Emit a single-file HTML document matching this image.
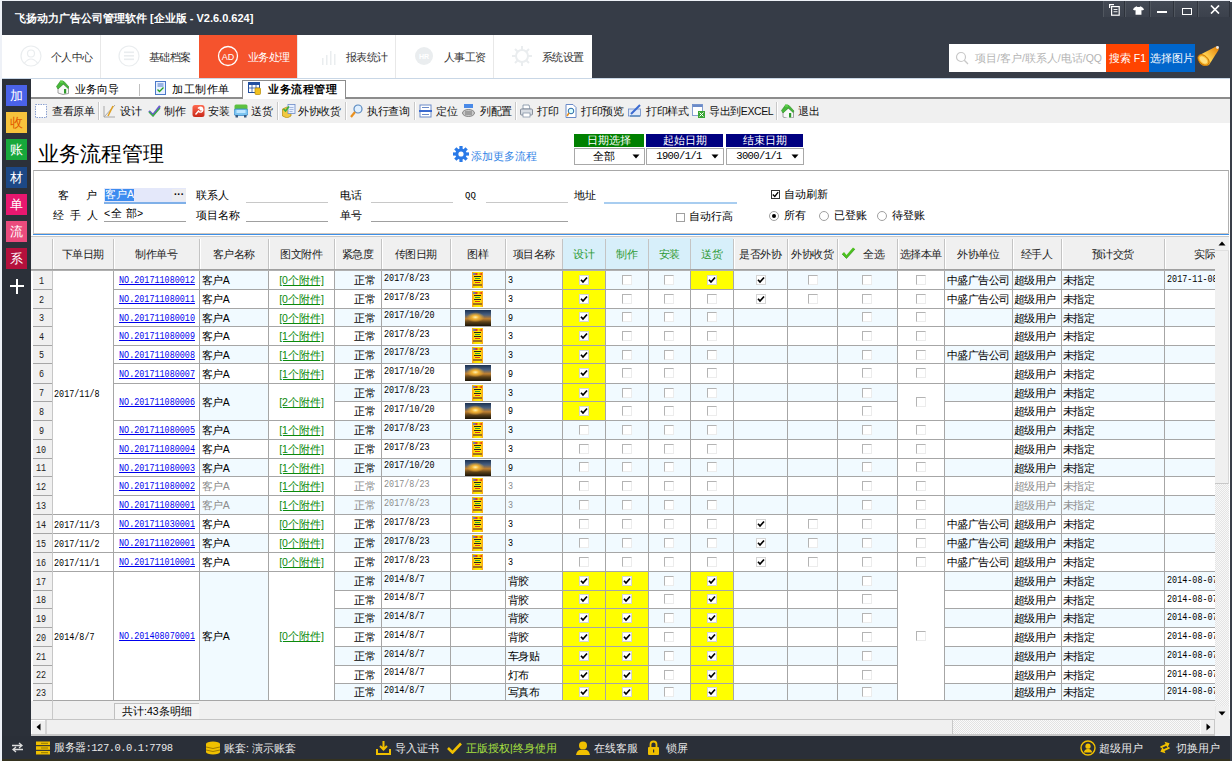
<!DOCTYPE html><html><head><meta charset="utf-8"><style>
html,body{margin:0;padding:0;}
body{width:1232px;height:761px;position:relative;overflow:hidden;background:#eef1f7;font-family:"Liberation Sans", sans-serif;font-size:11px;color:#000;}
body div{position:absolute;box-sizing:border-box;}
.t{white-space:nowrap;}
.cb{width:10px;height:10px;border:1px solid #c4c4c4;border-top-color:#9a9a9a;border-left-color:#9a9a9a;background:#fff;}
.ck{width:10px;height:10px;border:1px solid #d8d8d8;background:#fff;}
svg{position:absolute;}
</style></head><body>
<div style="left:2px;top:1px;width:1228px;height:34px;background:#363c47;"></div>
<div class="t" style="left:15px;top:10px;height:16px;line-height:16px;color:#fff;font-weight:bold;font-size:11px;">飞扬动力广告公司管理软件 [企业版 - V2.6.0.624]</div>
<div style="left:1103px;top:1px;width:22px;height:16px;background:linear-gradient(#444a55,#3b414c);border-left:1px solid #50565f;border-right:1px solid #2e333c;"></div>
<div style="left:1125px;top:1px;width:25px;height:16px;background:linear-gradient(#444a55,#3b414c);border-left:1px solid #50565f;border-right:1px solid #2e333c;"></div>
<div style="left:1150px;top:1px;width:24px;height:16px;background:linear-gradient(#444a55,#3b414c);border-left:1px solid #50565f;border-right:1px solid #2e333c;"></div>
<div style="left:1174px;top:1px;width:24px;height:16px;background:linear-gradient(#444a55,#3b414c);border-left:1px solid #50565f;border-right:1px solid #2e333c;"></div>
<div style="left:1198px;top:1px;width:32px;height:16px;background:linear-gradient(#444a55,#3b414c);border-left:1px solid #50565f;border-right:1px solid #2e333c;"></div>
<svg style="left:1109px;top:4px" width="11" height="12" viewBox="0 0 11 12"><rect x="0" y="0" width="5" height="1.2" fill="#fff"/><rect x="0" y="0" width="1.2" height="4" fill="#fff"/><rect x="2.6" y="2.6" width="7.6" height="8.6" fill="none" stroke="#fff" stroke-width="1.2"/><rect x="4.5" y="5" width="4" height="0.9" fill="#fff"/><rect x="4.5" y="7.3" width="4" height="0.9" fill="#fff"/></svg>
<svg style="left:1133px;top:6px" width="11" height="9" viewBox="0 0 13 10"><path d="M4 0 L1 2 L0 4 L2.5 5 L3 4 V10 H10 V4 L10.5 5 L13 4 L12 2 L9 0 Q6.5 2 4 0Z" fill="#fff"/></svg>
<div style="left:1157px;top:11px;width:10px;height:1.6px;background:#fff;"></div>
<div style="left:1182px;top:8px;width:10px;height:7px;border:1.2px solid #fff;border-top-width:1.8px;"></div>
<svg style="left:1210px;top:5px" width="10" height="9" viewBox="0 0 10 9"><path d="M1 0.5 L9 8.5 M9 0.5 L1 8.5" stroke="#fff" stroke-width="1.7"/></svg>
<div style="left:2px;top:35px;width:1228px;height:43px;background:#363c47;"></div>
<div style="left:2px;top:35px;width:590px;height:43px;background:#fff;"></div>
<div style="left:199px;top:35px;width:98px;height:43px;background:#f5532d;"></div>
<div style="left:100px;top:35px;width:1px;height:43px;background:#e8e8e8;"></div>
<div style="left:297px;top:35px;width:1px;height:43px;background:#e8e8e8;"></div>
<div style="left:395px;top:35px;width:1px;height:43px;background:#e8e8e8;"></div>
<div style="left:493px;top:35px;width:1px;height:43px;background:#e8e8e8;"></div>
<div style="left:2px;top:78px;width:1228px;height:1px;background:#c9d7e6;"></div>
<div class="t" style="left:51px;top:48px;height:18px;line-height:18px;color:#333;font-size:10.5px;letter-spacing:-0.65px;">个人中心</div>
<div class="t" style="left:149px;top:48px;height:18px;line-height:18px;color:#333;font-size:10.5px;letter-spacing:-0.65px;">基础档案</div>
<div class="t" style="left:248px;top:48px;height:18px;line-height:18px;color:#fff;font-size:10.5px;letter-spacing:-0.65px;">业务处理</div>
<div class="t" style="left:346px;top:48px;height:18px;line-height:18px;color:#333;font-size:10.5px;letter-spacing:-0.65px;">报表统计</div>
<div class="t" style="left:444px;top:48px;height:18px;line-height:18px;color:#333;font-size:10.5px;letter-spacing:-0.65px;">人事工资</div>
<div class="t" style="left:542px;top:48px;height:18px;line-height:18px;color:#333;font-size:10.5px;letter-spacing:-0.65px;">系统设置</div>
<svg style="left:20px;top:45px" width="22" height="22" viewBox="0 0 22 22"><circle cx="11" cy="11" r="10" fill="none" stroke="#eaedef" stroke-width="1.2"/><circle cx="11" cy="8.5" r="3.5" fill="none" stroke="#eaedef" stroke-width="1.2"/><path d="M4.5 18 Q11 10 17.5 18" fill="none" stroke="#eaedef" stroke-width="1.2"/></svg>
<svg style="left:118px;top:45px" width="22" height="22" viewBox="0 0 22 22"><circle cx="11" cy="11" r="10" fill="none" stroke="#eaedef" stroke-width="1.2"/><rect x="6" y="6.5" width="10" height="1.6" fill="#eaedef"/><rect x="6" y="10" width="10" height="1.6" fill="#eaedef"/><rect x="6" y="13.5" width="10" height="1.6" fill="#eaedef"/></svg>
<svg style="left:217px;top:45px" width="22" height="22" viewBox="0 0 22 22"><circle cx="11" cy="11" r="9.5" fill="none" stroke="#fff" stroke-width="1.3"/><text x="11" y="14.5" font-size="9" fill="#fff" text-anchor="middle" font-family="Liberation Sans">AD</text></svg>
<svg style="left:318px;top:45px" width="22" height="22" viewBox="0 0 22 22"><rect x="4" y="13" width="1.5" height="7" fill="#eaedef"/><rect x="8" y="10" width="1.5" height="10" fill="#eaedef"/><rect x="12" y="6" width="1.5" height="14" fill="#eaedef"/><rect x="16" y="9" width="1.5" height="11" fill="#eaedef"/></svg>
<svg style="left:413px;top:45px" width="22" height="22" viewBox="0 0 22 22"><circle cx="11" cy="11" r="9" fill="#eaedef"/><text x="11" y="14" font-size="7" fill="#fff" text-anchor="middle" font-family="Liberation Sans" font-weight="bold">HR</text></svg>
<svg style="left:511px;top:45px" width="22" height="22" viewBox="0 0 22 22"><circle cx="11" cy="11" r="6" fill="none" stroke="#eaedef" stroke-width="2"/><g stroke="#eaedef" stroke-width="2"><path d="M11 1v4M11 17v4M1 11h4M17 11h4M4 4l2.8 2.8M15.2 15.2L18 18M18 4l-2.8 2.8M4 18l2.8-2.8"/></g></svg>
<div style="left:949px;top:44px;width:157px;height:28px;background:#fff;"></div>
<svg style="left:955px;top:51px" width="14" height="14" viewBox="0 0 14 14"><circle cx="6" cy="6" r="4.5" fill="none" stroke="#c8c8c8" stroke-width="1.2"/><path d="M9.3 9.3 L13 13" stroke="#c8c8c8" stroke-width="1.3"/></svg>
<div class="t" style="left:975px;top:49px;height:18px;line-height:18px;color:#b4b4b4;font-size:10.5px;">项目/客户/联系人/电话/QQ</div>
<div style="left:1106px;top:44px;width:43px;height:28px;background:#ff4400;"></div>
<div class="t" style="left:1106px;top:49px;height:18px;line-height:18px;width:43px;text-align:center;color:#fff;font-size:10.5px;">搜索 F1</div>
<div style="left:1149px;top:44px;width:46px;height:28px;background:#0066cc;"></div>
<div class="t" style="left:1149px;top:49px;height:18px;line-height:18px;width:46px;text-align:center;color:#fff;font-size:10.5px;">选择图片</div>
<svg style="left:1197px;top:45px" width="23" height="22" viewBox="0 0 23 22"><defs><linearGradient id="cg" x1="0" y1="1" x2="1" y2="0"><stop offset="0" stop-color="#e89000"/><stop offset="0.45" stop-color="#ffd050"/><stop offset="1" stop-color="#e07800"/></linearGradient></defs><path d="M20 1 Q22.5 2 21.5 5 L12 20 Q7 22.5 3.5 19 Q0 15 2.5 10 Z" fill="url(#cg)"/><ellipse cx="6.5" cy="15" rx="4.2" ry="6.5" transform="rotate(-48 6.5 15)" fill="#f7b930" stroke="#c87000" stroke-width="0.9"/><ellipse cx="6.5" cy="15" rx="2.6" ry="4.5" transform="rotate(-48 6.5 15)" fill="#ffe080"/><circle cx="20.5" cy="2.5" r="1.4" fill="#e8e8e8"/></svg>
<div style="left:2px;top:79px;width:29px;height:657px;background:#2b3039;"></div>
<div style="left:6px;top:85px;width:21px;height:21px;background:#4a62e8;"></div>
<div class="t" style="left:6px;top:85px;height:21px;line-height:21px;width:21px;text-align:center;color:#fff;font-size:13px;">加</div>
<div style="left:6px;top:112px;width:21px;height:21px;background:#f7c33c;"></div>
<div class="t" style="left:6px;top:112px;height:21px;line-height:21px;width:21px;text-align:center;color:#e25a00;font-size:13px;">收</div>
<div style="left:6px;top:139px;width:21px;height:21px;background:#17a83b;"></div>
<div class="t" style="left:6px;top:139px;height:21px;line-height:21px;width:21px;text-align:center;color:#fff;font-size:13px;">账</div>
<div style="left:6px;top:167px;width:21px;height:21px;background:#1c4886;"></div>
<div class="t" style="left:6px;top:167px;height:21px;line-height:21px;width:21px;text-align:center;color:#fff;font-size:13px;">材</div>
<div style="left:6px;top:194px;width:21px;height:21px;background:#e8176f;"></div>
<div class="t" style="left:6px;top:194px;height:21px;line-height:21px;width:21px;text-align:center;color:#fff;font-size:13px;">单</div>
<div style="left:6px;top:221px;width:21px;height:21px;background:#ea4b7d;"></div>
<div class="t" style="left:6px;top:221px;height:21px;line-height:21px;width:21px;text-align:center;color:#fff;font-size:13px;">流</div>
<div style="left:6px;top:248px;width:21px;height:21px;background:#b4103c;"></div>
<div class="t" style="left:6px;top:248px;height:21px;line-height:21px;width:21px;text-align:center;color:#fff;font-size:13px;">系</div>
<div style="left:10px;top:285px;width:14px;height:2px;background:#fff;"></div>
<div style="left:16px;top:279px;width:2px;height:15px;background:#fff;"></div>
<div style="left:1230px;top:2px;width:2px;height:759px;background:#3a3f49;"></div>
<div style="left:31px;top:79px;width:1199px;height:656px;background:#fff;"></div>
<div style="left:31px;top:97px;width:1199px;height:2px;background:#8c8c8c;"></div>
<div style="left:242px;top:80px;width:104px;height:19px;background:#fff;border:1px solid #8c8c8c;border-bottom:none;"></div>
<div style="left:243px;top:97px;width:102px;height:2px;background:#fff;"></div>
<div style="left:139px;top:84px;width:1px;height:12px;background:#c0c0c0;"></div>
<div class="t" style="left:75px;top:80px;height:18px;line-height:18px;font-size:10.5px;">业务向导</div>
<div class="t" style="left:172px;top:80px;height:18px;line-height:18px;font-size:10.5px;letter-spacing:0.5px;">加工制作单</div>
<div class="t" style="left:268px;top:80px;height:18px;line-height:18px;font-size:10.5px;font-weight:bold;letter-spacing:0.6px;">业务流程管理</div>
<svg style="left:56px;top:80px" width="13" height="15" viewBox="0 0 13 15"><path d="M2 8 L7 4 L12.5 8 V13.5 L7 14.5 L2 13Z" fill="#f8f8f8" stroke="#8a8a8a" stroke-width="0.8"/><path d="M0.5 6.5 L4.5 1 L8 1.5 L13 7 L12 8.5 L7.5 4 L2 9 Z" fill="#46b83a" stroke="#2a8a20" stroke-width="0.6"/><rect x="4" y="0.5" width="3" height="2.5" fill="#5acc48"/><rect x="8" y="9" width="2.2" height="4.5" fill="#2d9a2a"/></svg>
<svg style="left:155px;top:81px" width="11" height="14" viewBox="0 0 11 14"><rect x="0.5" y="0.5" width="10" height="13" fill="#e8f0ff" stroke="#4a78c8"/><path d="M2.5 3h6M2.5 5h6" stroke="#4a78c8"/><path d="M2.5 8.5 L4.5 10.5 L8.5 6.5" stroke="#21a021" stroke-width="1.3" fill="none"/></svg>
<svg style="left:248px;top:82px" width="13" height="13" viewBox="0 0 13 13"><rect x="0.5" y="0.5" width="11" height="10" fill="#fff" stroke="#2350a0"/><rect x="0.5" y="0.5" width="11" height="2.5" fill="#2350a0"/><path d="M4 3v8M8 3v8M0.5 6h11" stroke="#2350a0" stroke-width="0.8"/><rect x="7" y="6" width="5.5" height="6.5" rx="1" fill="#f0c020" stroke="#b88a00" stroke-width="0.7"/></svg>
<div style="left:31px;top:99px;width:1199px;height:24px;background:#f0f0f0;"></div>
<div class="t" style="left:52px;top:102px;height:18px;line-height:18px;font-size:10.5px;color:#111;letter-spacing:-0.4px;">查看原单</div>
<div class="t" style="left:120px;top:102px;height:18px;line-height:18px;font-size:10.5px;color:#111;letter-spacing:-0.4px;">设计</div>
<div class="t" style="left:164px;top:102px;height:18px;line-height:18px;font-size:10.5px;color:#111;letter-spacing:-0.4px;">制作</div>
<div class="t" style="left:208px;top:102px;height:18px;line-height:18px;font-size:10.5px;color:#111;letter-spacing:-0.4px;">安装</div>
<div class="t" style="left:251px;top:102px;height:18px;line-height:18px;font-size:10.5px;color:#111;letter-spacing:-0.4px;">送货</div>
<div class="t" style="left:298px;top:102px;height:18px;line-height:18px;font-size:10.5px;color:#111;letter-spacing:-0.4px;">外协收货</div>
<div class="t" style="left:367px;top:102px;height:18px;line-height:18px;font-size:10.5px;color:#111;letter-spacing:-0.4px;">执行查询</div>
<div class="t" style="left:436px;top:102px;height:18px;line-height:18px;font-size:10.5px;color:#111;letter-spacing:-0.4px;">定位</div>
<div class="t" style="left:480px;top:102px;height:18px;line-height:18px;font-size:10.5px;color:#111;letter-spacing:-0.4px;">列配置</div>
<div class="t" style="left:537px;top:102px;height:18px;line-height:18px;font-size:10.5px;color:#111;letter-spacing:-0.4px;">打印</div>
<div class="t" style="left:581px;top:102px;height:18px;line-height:18px;font-size:10.5px;color:#111;letter-spacing:-0.4px;">打印预览</div>
<div class="t" style="left:646px;top:102px;height:18px;line-height:18px;font-size:10.5px;color:#111;letter-spacing:-0.4px;">打印样式</div>
<div class="t" style="left:709px;top:102px;height:18px;line-height:18px;font-size:10.5px;color:#111;letter-spacing:-0.4px;">导出到EXCEL</div>
<div class="t" style="left:798px;top:102px;height:18px;line-height:18px;font-size:10.5px;color:#111;letter-spacing:-0.4px;">退出</div>
<div style="left:98px;top:102px;width:1px;height:18px;background:#c8c8c8;"></div>
<div style="left:99px;top:102px;width:1px;height:18px;background:#fff;"></div>
<div style="left:277px;top:102px;width:1px;height:18px;background:#c8c8c8;"></div>
<div style="left:278px;top:102px;width:1px;height:18px;background:#fff;"></div>
<div style="left:345px;top:102px;width:1px;height:18px;background:#c8c8c8;"></div>
<div style="left:346px;top:102px;width:1px;height:18px;background:#fff;"></div>
<div style="left:414px;top:102px;width:1px;height:18px;background:#c8c8c8;"></div>
<div style="left:415px;top:102px;width:1px;height:18px;background:#fff;"></div>
<div style="left:515px;top:102px;width:1px;height:18px;background:#c8c8c8;"></div>
<div style="left:516px;top:102px;width:1px;height:18px;background:#fff;"></div>
<div style="left:776px;top:102px;width:1px;height:18px;background:#c8c8c8;"></div>
<div style="left:777px;top:102px;width:1px;height:18px;background:#fff;"></div>
<svg style="left:35px;top:104px" width="14" height="14" viewBox="0 0 14 14"><rect x="0.5" y="0.5" width="11" height="13" fill="#fff" stroke="#8aa0d0" stroke-dasharray="1.5 1"/></svg>
<svg style="left:103px;top:104px" width="14" height="14" viewBox="0 0 14 14"><path d="M1 13 L12 1 M1 13 H12 M1 13 V2" stroke="#a8a8a8" fill="none"/><path d="M10 2 L5 12" stroke="#e0a020" stroke-width="1.5"/></svg>
<svg style="left:148px;top:104px" width="14" height="14" viewBox="0 0 14 14"><path d="M1 7 L5 11 L12 2" stroke="#6a5acd" stroke-width="2.2" fill="none"/><path d="M1 8 L5 12 L12 4" stroke="#3cb043" stroke-width="1.2" fill="none"/></svg>
<svg style="left:192px;top:104px" width="14" height="14" viewBox="0 0 14 14"><defs><linearGradient id="rg" x1="0" y1="0" x2="0" y2="1"><stop offset="0" stop-color="#ff6a50"/><stop offset="1" stop-color="#c82818"/></linearGradient></defs><rect x="0.5" y="1" width="12" height="12" rx="2.5" fill="url(#rg)"/><path d="M3.5 10.5 L7 6.5 M6 4.5 Q7.5 2.5 9.5 3.5 L8 5 L9 6 L10.5 4.5 Q11.5 6.5 9.5 8 Q8 8.5 7 7.5" stroke="#fff" stroke-width="1.4" fill="none"/></svg>
<svg style="left:234px;top:104px" width="14" height="14" viewBox="0 0 14 14"><rect x="0.5" y="0.5" width="13" height="6" rx="1.5" fill="#5cc040"/><rect x="0" y="5" width="14" height="6.5" rx="2" fill="#7cc4f0" stroke="#3a88c8" stroke-width="0.8"/><rect x="2.5" y="6" width="9" height="3" fill="#bfe6ff"/><rect x="1.5" y="11" width="2.5" height="2.5" fill="#3a5a80"/><rect x="10" y="11" width="2.5" height="2.5" fill="#3a5a80"/></svg>
<svg style="left:282px;top:104px" width="14" height="14" viewBox="0 0 14 14"><path d="M0.5 5 L5 3 L9 5 V12 L5 14 L0.5 12Z" fill="#f2c840" stroke="#b08a10" stroke-width="0.7"/><rect x="6" y="0.5" width="7" height="9" fill="#e8f0ff" stroke="#6a8ac8" stroke-width="0.8"/><path d="M7.5 3.5h4M7.5 5.5h4M7.5 7.5h3" stroke="#8aa0d0" stroke-width="0.7"/><path d="M1.5 5 L3.5 7 L7 2.5" stroke="#3cb040" stroke-width="1.6" fill="none"/></svg>
<svg style="left:350px;top:104px" width="14" height="14" viewBox="0 0 14 14"><circle cx="8" cy="5" r="4" fill="#e0f0ff" stroke="#5a8ac0" stroke-width="1.2"/><path d="M5 8 L1 13" stroke="#e89020" stroke-width="2.2"/></svg>
<svg style="left:419px;top:104px" width="14" height="14" viewBox="0 0 14 14"><rect x="1" y="1" width="11" height="12" fill="#fff" stroke="#6a8ac8"/><rect x="0" y="6" width="13" height="2" fill="#3a6ad0"/><path d="M3 3.5h7M3 10.5h7" stroke="#6a8ac8"/></svg>
<svg style="left:462px;top:104px" width="14" height="14" viewBox="0 0 14 14"><rect x="2" y="0" width="9" height="4" fill="#4a8ae8"/><ellipse cx="6.5" cy="9" rx="6" ry="3.5" fill="#c8c8c8" stroke="#707070" stroke-width="0.8"/><path d="M3 8h7M3 10h7" stroke="#505050" stroke-width="0.7"/></svg>
<svg style="left:520px;top:104px" width="14" height="14" viewBox="0 0 14 14"><path d="M3 1 H9 L10 5 H3Z" fill="#fff" stroke="#7a8aa0" stroke-width="0.8"/><rect x="0.5" y="5" width="12" height="6" rx="1" fill="#d8dde4" stroke="#707a88" stroke-width="0.8"/><rect x="3" y="9" width="7" height="4" fill="#fff" stroke="#7a8aa0" stroke-width="0.7"/></svg>
<svg style="left:565px;top:104px" width="14" height="14" viewBox="0 0 14 14"><path d="M1 0.5 H8 L11 3.5 V13.5 H1Z" fill="#fff" stroke="#6a8ac8"/><circle cx="6" cy="7" r="2.8" fill="#dff" stroke="#2a6aa8" stroke-width="1"/><path d="M4 9 L2 12" stroke="#e89020" stroke-width="1.6"/></svg>
<svg style="left:628px;top:104px" width="14" height="14" viewBox="0 0 14 14"><rect x="0.5" y="5" width="12" height="7" fill="#dfe9f8" stroke="#6a8ac8" stroke-width="0.8"/><path d="M3 10 L12 1" stroke="#3a6ad0" stroke-width="2"/><path d="M2 12 H12" stroke="#2a6aa8"/></svg>
<svg style="left:692px;top:104px" width="14" height="14" viewBox="0 0 14 14"><rect x="0.5" y="0.5" width="10" height="11" fill="#fff" stroke="#6a8ac8" stroke-width="0.8"/><rect x="0.5" y="0.5" width="10" height="2.5" fill="#6a8ac8"/><rect x="6" y="7" width="7" height="7" fill="#3aa535"/><path d="M7.5 8.5 L11.5 12.5 M11.5 8.5 L7.5 12.5" stroke="#fff" stroke-width="1"/></svg>
<svg style="left:781px;top:104px" width="14" height="14" viewBox="0 0 14 14"><path d="M2 8 L7 4 L12.5 8 V13.5 L7 14.5 L2 13Z" fill="#f8f8f8" stroke="#8a8a8a" stroke-width="0.8"/><path d="M0.5 6.5 L4.5 1 L8 1.5 L13 7 L12 8.5 L7.5 4 L2 9 Z" fill="#46b83a" stroke="#2a8a20" stroke-width="0.6"/><rect x="4" y="0.5" width="3" height="2.5" fill="#5acc48"/><rect x="8" y="9" width="2.2" height="4.5" fill="#2d9a2a"/></svg>
<div class="t" style="left:38px;top:142px;height:24px;line-height:24px;font-size:20.5px;color:#000;">业务流程管理</div>
<svg style="left:453px;top:146px" width="16" height="16" viewBox="0 0 16 16"><g fill="#2a7ae8" transform="translate(8 8)"><circle r="5.6"/><rect x="-1.6" y="-8" width="3.2" height="4" transform="rotate(0)"/><rect x="-1.6" y="-8" width="3.2" height="4" transform="rotate(45)"/><rect x="-1.6" y="-8" width="3.2" height="4" transform="rotate(90)"/><rect x="-1.6" y="-8" width="3.2" height="4" transform="rotate(135)"/><rect x="-1.6" y="-8" width="3.2" height="4" transform="rotate(180)"/><rect x="-1.6" y="-8" width="3.2" height="4" transform="rotate(225)"/><rect x="-1.6" y="-8" width="3.2" height="4" transform="rotate(270)"/><rect x="-1.6" y="-8" width="3.2" height="4" transform="rotate(315)"/></g><circle cx="8" cy="8" r="2.6" fill="#fff"/></svg>
<div class="t" style="left:471px;top:147px;height:18px;line-height:18px;font-size:10.5px;color:#3385e6;">添加更多流程</div>
<div style="left:574px;top:134px;width:70px;height:13px;background:#008000;"></div>
<div style="left:646px;top:134px;width:77px;height:13px;background:#000080;"></div>
<div style="left:726px;top:134px;width:77px;height:13px;background:#000080;"></div>
<div class="t" style="left:574px;top:133px;height:14px;line-height:14px;width:70px;text-align:center;color:#fff;font-size:10.5px;">日期选择</div>
<div class="t" style="left:646px;top:133px;height:14px;line-height:14px;width:77px;text-align:center;color:#fff;font-size:10.5px;">起始日期</div>
<div class="t" style="left:726px;top:133px;height:14px;line-height:14px;width:77px;text-align:center;color:#fff;font-size:10.5px;">结束日期</div>
<div style="left:574px;top:148px;width:71px;height:17px;border:1px solid #a8a8a8;background:#fff;"></div>
<div class="t" style="left:577px;top:148px;height:17px;line-height:17px;width:53px;text-align:center;font-size:10.5px;">全部</div>
<svg style="left:632px;top:154px" width="8" height="5" viewBox="0 0 8 5"><path d="M0.5 0.5h7L4 4.5z" fill="#000"/></svg>
<div style="left:646px;top:148px;width:78px;height:17px;border:1px solid #a8a8a8;background:#fff;"></div>
<div class="t" style="left:649px;top:148px;height:17px;line-height:17px;width:60px;text-align:center;font-family:'Liberation Mono', monospace;font-size:10.5px;letter-spacing:-0.6px;">1900/1/1</div>
<svg style="left:711px;top:154px" width="8" height="5" viewBox="0 0 8 5"><path d="M0.5 0.5h7L4 4.5z" fill="#000"/></svg>
<div style="left:726px;top:148px;width:78px;height:17px;border:1px solid #a8a8a8;background:#fff;"></div>
<div class="t" style="left:729px;top:148px;height:17px;line-height:17px;width:60px;text-align:center;font-family:'Liberation Mono', monospace;font-size:10.5px;letter-spacing:-0.6px;">3000/1/1</div>
<svg style="left:791px;top:154px" width="8" height="5" viewBox="0 0 8 5"><path d="M0.5 0.5h7L4 4.5z" fill="#000"/></svg>
<div style="left:33px;top:170px;width:1196px;height:65px;border:1px solid #a8a8a8;border-left-color:#c4c4c4;border-bottom:none;border-right:1px solid #b0b0b0;"></div>
<div style="left:33px;top:233px;width:1196px;height:1px;background:#cfc6bd;"></div>
<div style="left:33px;top:234px;width:1196px;height:1px;background:#3d8fe6;"></div>
<div style="left:33px;top:235px;width:1196px;height:2px;background:#fff;"></div>
<div style="left:31px;top:236px;width:1198px;height:1px;background:#c8c8c8;"></div>
<div class="t" style="left:58px;top:187px;height:16px;line-height:16px;font-size:10.5px;">客</div>
<div class="t" style="left:86px;top:187px;height:16px;line-height:16px;font-size:10.5px;">户</div>
<div class="t" style="left:53px;top:207px;height:16px;line-height:16px;font-size:10.5px;">经</div>
<div class="t" style="left:70px;top:207px;height:16px;line-height:16px;font-size:10.5px;">手</div>
<div class="t" style="left:87px;top:207px;height:16px;line-height:16px;font-size:10.5px;">人</div>
<div style="left:104px;top:188px;width:82px;height:15px;background:#e4e8fa;"></div>
<div style="left:104px;top:202px;width:82px;height:2px;background:#7fb0e8;"></div>
<div style="left:105px;top:189px;width:29px;height:12px;background:#3d8cf0;"></div>
<div class="t" style="left:105px;top:187px;height:15px;line-height:15px;color:#fff;font-size:10.5px;">客户A</div>
<div style="left:172px;top:189px;width:14px;height:12px;background:#ececf0;"></div>
<div class="t" style="left:174px;top:187px;height:15px;line-height:15px;font-size:10px;font-weight:bold;">···</div>
<div class="t" style="left:104px;top:205px;height:16px;line-height:16px;font-size:10.5px;letter-spacing:0.5px;">&lt;全 部&gt;</div>
<div style="left:104px;top:221px;width:82px;height:1px;background:#a0a0a0;"></div>
<div class="t" style="left:196px;top:187px;height:16px;line-height:16px;font-size:10.5px;">联系人</div>
<div class="t" style="left:196px;top:207px;height:16px;line-height:16px;font-size:10.5px;">项目名称</div>
<div style="left:246px;top:202px;width:82px;height:1px;background:#c8c8c8;"></div>
<div style="left:246px;top:221px;width:82px;height:1px;background:#a0a0a0;"></div>
<div class="t" style="left:340px;top:187px;height:16px;line-height:16px;font-size:10.5px;">电话</div>
<div class="t" style="left:340px;top:207px;height:16px;line-height:16px;font-size:10.5px;">单号</div>
<div style="left:371px;top:202px;width:82px;height:1px;background:#c8c8c8;"></div>
<div style="left:371px;top:221px;width:197px;height:1px;background:#a0a0a0;"></div>
<div class="t" style="left:465px;top:189px;height:14px;line-height:14px;font-family:'Liberation Mono', monospace;font-size:9px;">QQ</div>
<div style="left:486px;top:202px;width:82px;height:1px;background:#c8c8c8;"></div>
<div class="t" style="left:574px;top:187px;height:16px;line-height:16px;font-size:10.5px;">地址</div>
<div style="left:604px;top:202px;width:133px;height:1.5px;background:#a8cdf0;"></div>
<div style="left:771px;top:190px;width:9px;height:9px;border:1px solid #333;background:#fff;"></div>
<svg style="left:772px;top:191px" width="7" height="7" viewBox="0 0 7 7"><path d="M0.8 3.5 L2.8 5.5 L6.2 1.2" stroke="#000" stroke-width="1.3" fill="none"/></svg>
<div class="t" style="left:784px;top:186px;height:16px;line-height:16px;font-size:10.5px;">自动刷新</div>
<div style="left:676px;top:213px;width:9px;height:9px;border:1px solid #a0a0a0;background:#fff;"></div>
<div class="t" style="left:689px;top:208px;height:16px;line-height:16px;font-size:10.5px;">自动行高</div>
<div style="left:769px;top:211px;width:10px;height:10px;border:1px solid #a0a0a0;border-radius:50%;background:#fff;"></div>
<div style="left:772px;top:214px;width:4px;height:4px;background:#000;border-radius:50%;"></div>
<div class="t" style="left:784px;top:207px;height:16px;line-height:16px;font-size:10.5px;">所有</div>
<div style="left:819px;top:211px;width:10px;height:10px;border:1px solid #a0a0a0;border-radius:50%;background:#fff;"></div>
<div class="t" style="left:834px;top:207px;height:16px;line-height:16px;font-size:10.5px;">已登账</div>
<div style="left:877px;top:211px;width:10px;height:10px;border:1px solid #a0a0a0;border-radius:50%;background:#fff;"></div>
<div class="t" style="left:892px;top:207px;height:16px;line-height:16px;font-size:10.5px;">待登账</div>
<div style="left:31px;top:237px;width:1184px;height:482px;overflow:hidden;background:#fff;">
<div style="left:0px;top:0px;width:1260px;height:33px;background:#f0f0f0;"></div>
<div style="left:21px;top:2px;width:1px;height:31px;background:#c4c4c4;"></div>
<div style="left:22px;top:2px;width:1px;height:31px;background:#fff;"></div>
<div class="t" style="left:0px;top:9px;height:16px;line-height:16px;width:21px;text-align:center;color:#222;font-size:10.5px;letter-spacing:-0.5px;"></div>
<div style="left:82px;top:2px;width:1px;height:31px;background:#c4c4c4;"></div>
<div style="left:83px;top:2px;width:1px;height:31px;background:#fff;"></div>
<div class="t" style="left:21px;top:9px;height:16px;line-height:16px;width:61px;text-align:center;color:#222;font-size:10.5px;letter-spacing:-0.5px;">下单日期</div>
<div style="left:168px;top:2px;width:1px;height:31px;background:#c4c4c4;"></div>
<div style="left:169px;top:2px;width:1px;height:31px;background:#fff;"></div>
<div class="t" style="left:82px;top:9px;height:16px;line-height:16px;width:86px;text-align:center;color:#222;font-size:10.5px;letter-spacing:-0.5px;">制作单号</div>
<div style="left:237px;top:2px;width:1px;height:31px;background:#c4c4c4;"></div>
<div style="left:238px;top:2px;width:1px;height:31px;background:#fff;"></div>
<div class="t" style="left:168px;top:9px;height:16px;line-height:16px;width:69px;text-align:center;color:#222;font-size:10.5px;letter-spacing:-0.5px;">客户名称</div>
<div style="left:303px;top:2px;width:1px;height:31px;background:#c4c4c4;"></div>
<div style="left:304px;top:2px;width:1px;height:31px;background:#fff;"></div>
<div class="t" style="left:237px;top:9px;height:16px;line-height:16px;width:66px;text-align:center;color:#222;font-size:10.5px;letter-spacing:-0.5px;">图文附件</div>
<div style="left:350px;top:2px;width:1px;height:31px;background:#c4c4c4;"></div>
<div style="left:351px;top:2px;width:1px;height:31px;background:#fff;"></div>
<div class="t" style="left:303px;top:9px;height:16px;line-height:16px;width:47px;text-align:center;color:#222;font-size:10.5px;letter-spacing:-0.5px;">紧急度</div>
<div style="left:419px;top:2px;width:1px;height:31px;background:#c4c4c4;"></div>
<div style="left:420px;top:2px;width:1px;height:31px;background:#fff;"></div>
<div class="t" style="left:350px;top:9px;height:16px;line-height:16px;width:69px;text-align:center;color:#222;font-size:10.5px;letter-spacing:-0.5px;">传图日期</div>
<div style="left:474px;top:2px;width:1px;height:31px;background:#c4c4c4;"></div>
<div style="left:475px;top:2px;width:1px;height:31px;background:#fff;"></div>
<div class="t" style="left:419px;top:9px;height:16px;line-height:16px;width:55px;text-align:center;color:#222;font-size:10.5px;letter-spacing:-0.5px;">图样</div>
<div style="left:531px;top:2px;width:1px;height:31px;background:#c4c4c4;"></div>
<div style="left:532px;top:2px;width:1px;height:31px;background:#fff;"></div>
<div class="t" style="left:474px;top:9px;height:16px;line-height:16px;width:57px;text-align:center;color:#222;font-size:10.5px;letter-spacing:-0.5px;">项目名称</div>
<div style="left:532px;top:1px;width:42px;height:32px;background:#d7effa;"></div>
<div style="left:574px;top:2px;width:1px;height:31px;background:#c4c4c4;"></div>
<div style="left:575px;top:2px;width:1px;height:31px;background:#fff;"></div>
<div class="t" style="left:531px;top:9px;height:16px;line-height:16px;width:43px;text-align:center;color:#2e9a32;font-size:10.5px;letter-spacing:-0.5px;">设计</div>
<div style="left:575px;top:1px;width:42px;height:32px;background:#d7effa;"></div>
<div style="left:617px;top:2px;width:1px;height:31px;background:#c4c4c4;"></div>
<div style="left:618px;top:2px;width:1px;height:31px;background:#fff;"></div>
<div class="t" style="left:574px;top:9px;height:16px;line-height:16px;width:43px;text-align:center;color:#2e9a32;font-size:10.5px;letter-spacing:-0.5px;">制作</div>
<div style="left:618px;top:1px;width:41px;height:32px;background:#d7effa;"></div>
<div style="left:659px;top:2px;width:1px;height:31px;background:#c4c4c4;"></div>
<div style="left:660px;top:2px;width:1px;height:31px;background:#fff;"></div>
<div class="t" style="left:617px;top:9px;height:16px;line-height:16px;width:42px;text-align:center;color:#2e9a32;font-size:10.5px;letter-spacing:-0.5px;">安装</div>
<div style="left:660px;top:1px;width:42px;height:32px;background:#d7effa;"></div>
<div style="left:702px;top:2px;width:1px;height:31px;background:#c4c4c4;"></div>
<div style="left:703px;top:2px;width:1px;height:31px;background:#fff;"></div>
<div class="t" style="left:659px;top:9px;height:16px;line-height:16px;width:43px;text-align:center;color:#2e9a32;font-size:10.5px;letter-spacing:-0.5px;">送货</div>
<div style="left:756px;top:2px;width:1px;height:31px;background:#c4c4c4;"></div>
<div style="left:757px;top:2px;width:1px;height:31px;background:#fff;"></div>
<div class="t" style="left:702px;top:9px;height:16px;line-height:16px;width:54px;text-align:center;color:#222;font-size:10.5px;letter-spacing:-0.5px;">是否外协</div>
<div style="left:806px;top:2px;width:1px;height:31px;background:#c4c4c4;"></div>
<div style="left:807px;top:2px;width:1px;height:31px;background:#fff;"></div>
<div class="t" style="left:756px;top:9px;height:16px;line-height:16px;width:50px;text-align:center;color:#222;font-size:10.5px;letter-spacing:-0.5px;">外协收货</div>
<div style="left:866px;top:2px;width:1px;height:31px;background:#c4c4c4;"></div>
<div style="left:867px;top:2px;width:1px;height:31px;background:#fff;"></div>
<div class="t" style="left:806px;top:9px;height:16px;line-height:16px;width:74px;text-align:center;color:#222;font-size:10.5px;">全选</div>
<svg style="left:810px;top:10px" width="15" height="13" viewBox="0 0 15 13"><path d="M1 7 L5.5 11.5 L14 2 L12 0.5 L5.5 8 L3 5Z" fill="#4cc21e"/><path d="M1 7 L5.5 11.5 L14 2" stroke="#2a8a10" stroke-width="0.6" fill="none"/></svg>
<div style="left:913px;top:2px;width:1px;height:31px;background:#c4c4c4;"></div>
<div style="left:914px;top:2px;width:1px;height:31px;background:#fff;"></div>
<div class="t" style="left:866px;top:9px;height:16px;line-height:16px;width:47px;text-align:center;color:#222;font-size:10.5px;letter-spacing:-0.5px;">选择本单</div>
<div style="left:981px;top:2px;width:1px;height:31px;background:#c4c4c4;"></div>
<div style="left:982px;top:2px;width:1px;height:31px;background:#fff;"></div>
<div class="t" style="left:913px;top:9px;height:16px;line-height:16px;width:68px;text-align:center;color:#222;font-size:10.5px;letter-spacing:-0.5px;">外协单位</div>
<div style="left:1030px;top:2px;width:1px;height:31px;background:#c4c4c4;"></div>
<div style="left:1031px;top:2px;width:1px;height:31px;background:#fff;"></div>
<div class="t" style="left:981px;top:9px;height:16px;line-height:16px;width:49px;text-align:center;color:#222;font-size:10.5px;letter-spacing:-0.5px;">经手人</div>
<div style="left:1133px;top:2px;width:1px;height:31px;background:#c4c4c4;"></div>
<div style="left:1134px;top:2px;width:1px;height:31px;background:#fff;"></div>
<div class="t" style="left:1030px;top:9px;height:16px;line-height:16px;width:103px;text-align:center;color:#222;font-size:10.5px;letter-spacing:-0.5px;">预计交货</div>
<div style="left:1235px;top:2px;width:1px;height:31px;background:#c4c4c4;"></div>
<div style="left:1236px;top:2px;width:1px;height:31px;background:#fff;"></div>
<div class="t" style="left:1133px;top:9px;height:16px;line-height:16px;width:102px;text-align:center;color:#222;font-size:10.5px;letter-spacing:-0.5px;">实际交货</div>
<div style="left:0px;top:32px;width:1260px;height:1px;background:#a0a0a0;"></div>
<div style="left:0px;top:33px;width:1260px;height:1px;background:#b0b0b0;"></div>
<div style="left:1px;top:34px;width:21px;height:19px;background:#f0f0f0;border-right:1px solid #a6a6a6;border-bottom:1px solid #a6a6a6;"></div>
<div style="left:21px;top:34px;width:1px;height:19px;background:#c6c6c6;"></div>
<div style="left:1px;top:34px;width:1px;height:19px;background:#fff;"></div>
<div class="t" style="left:7.969999999999999px;top:35px;height:18px;line-height:18px;font-family:'Liberation Mono', monospace;font-size:11px;transform:scaleX(0.767);transform-origin:0 50%;color:#222;">1</div>
<div style="left:304px;top:34px;width:47px;height:19px;background:#f1faff;border-right:1px solid #a6a6a6;border-bottom:1px solid #a6a6a6;"></div>
<div class="t" style="left:303px;top:34px;height:19px;line-height:19px;width:41px;text-align:right;color:#000;font-size:10.5px;letter-spacing:-0.6px;">正常</div>
<div style="left:351px;top:34px;width:69px;height:19px;background:#f1faff;border-right:1px solid #a6a6a6;border-bottom:1px solid #a6a6a6;"></div>
<div class="t" style="left:353px;top:33px;height:16px;line-height:16px;font-family:'Liberation Mono', monospace;font-size:11px;transform:scaleX(0.767);transform-origin:0 50%;color:#000;">2017/8/23</div>
<div style="left:420px;top:34px;width:55px;height:19px;background:#f1faff;border-right:1px solid #a6a6a6;border-bottom:1px solid #a6a6a6;"></div>
<div style="left:441px;top:35px;width:11px;height:16px;background:linear-gradient(90deg,#f8a020,#ffe000 25%,#fff200 70%,#f8a020);"></div>
<div style="left:442px;top:36px;width:9px;height:2px;background:linear-gradient(90deg,#40a0e0,#e83020 40%,#f8d000 60%,#e83020);"></div>
<div style="left:443px;top:39px;width:7px;height:1px;background:#222;"></div>
<div style="left:444px;top:41px;width:5px;height:1px;background:#30a030;"></div>
<div style="left:443px;top:43px;width:7px;height:1px;background:#222;"></div>
<div style="left:444px;top:45px;width:5px;height:1px;background:#e03020;"></div>
<div style="left:442px;top:47px;width:9px;height:2px;background:#f0e8c0;border:1px solid #a07020;"></div>
<div style="left:475px;top:34px;width:57px;height:19px;background:#f1faff;border-right:1px solid #a6a6a6;border-bottom:1px solid #a6a6a6;"></div>
<div class="t" style="left:477px;top:34px;height:19px;line-height:19px;font-family:'Liberation Mono', monospace;font-size:11px;transform:scaleX(0.767);transform-origin:0 50%;color:#000;">3</div>
<div style="left:532px;top:34px;width:43px;height:19px;background:#ffff00;border-right:1px solid #a6a6a6;border-bottom:1px solid #a6a6a6;"></div>
<div style="left:548px;top:38px;width:10px;height:10px;background:#fff;border:1px solid #d4d4d4;"></div>
<svg style="left:549px;top:39px" width="8" height="8" viewBox="0 0 8 8"><path d="M1 3.8 L3 6 L7 1.5" stroke="#000" stroke-width="1.7" fill="none"/></svg>
<div style="left:575px;top:34px;width:43px;height:19px;background:#f1faff;border-right:1px solid #a6a6a6;border-bottom:1px solid #a6a6a6;"></div>
<div style="left:591px;top:38px;width:10px;height:10px;background:#fff;border:1px solid #ececec;border-top-color:#b4b4b4;border-left-color:#b4b4b4;"></div>
<div style="left:618px;top:34px;width:42px;height:19px;background:#f1faff;border-right:1px solid #a6a6a6;border-bottom:1px solid #a6a6a6;"></div>
<div style="left:633px;top:38px;width:10px;height:10px;background:#fff;border:1px solid #ececec;border-top-color:#b4b4b4;border-left-color:#b4b4b4;"></div>
<div style="left:660px;top:34px;width:43px;height:19px;background:#ffff00;border-right:1px solid #a6a6a6;border-bottom:1px solid #a6a6a6;"></div>
<div style="left:676px;top:38px;width:10px;height:10px;background:#fff;border:1px solid #d4d4d4;"></div>
<svg style="left:677px;top:39px" width="8" height="8" viewBox="0 0 8 8"><path d="M1 3.8 L3 6 L7 1.5" stroke="#000" stroke-width="1.7" fill="none"/></svg>
<div style="left:703px;top:34px;width:54px;height:19px;background:#f1faff;border-right:1px solid #a6a6a6;border-bottom:1px solid #a6a6a6;"></div>
<div style="left:725px;top:38px;width:10px;height:10px;background:#fff;border:1px solid #d4d4d4;"></div>
<svg style="left:726px;top:39px" width="8" height="8" viewBox="0 0 8 8"><path d="M1 3.8 L3 6 L7 1.5" stroke="#000" stroke-width="1.7" fill="none"/></svg>
<div style="left:757px;top:34px;width:50px;height:19px;background:#f1faff;border-right:1px solid #a6a6a6;border-bottom:1px solid #a6a6a6;"></div>
<div style="left:777px;top:38px;width:10px;height:10px;background:#fff;border:1px solid #ececec;border-top-color:#b4b4b4;border-left-color:#b4b4b4;"></div>
<div style="left:807px;top:34px;width:60px;height:19px;background:#f1faff;border-right:1px solid #a6a6a6;border-bottom:1px solid #a6a6a6;"></div>
<div style="left:831px;top:38px;width:10px;height:10px;background:#fff;border:1px solid #ececec;border-top-color:#b4b4b4;border-left-color:#b4b4b4;"></div>
<div style="left:914px;top:34px;width:68px;height:19px;background:#f1faff;border-right:1px solid #a6a6a6;border-bottom:1px solid #a6a6a6;"></div>
<div class="t" style="left:916px;top:34px;height:19px;line-height:19px;font-size:10.5px;letter-spacing:-0.6px;">中盛广告公司</div>
<div style="left:982px;top:34px;width:49px;height:19px;background:#f1faff;border-right:1px solid #a6a6a6;border-bottom:1px solid #a6a6a6;"></div>
<div class="t" style="left:983px;top:34px;height:19px;line-height:19px;color:#000;font-size:10.5px;letter-spacing:-0.6px;">超级用户</div>
<div style="left:1031px;top:34px;width:103px;height:19px;background:#f1faff;border-right:1px solid #a6a6a6;border-bottom:1px solid #a6a6a6;"></div>
<div class="t" style="left:1032px;top:34px;height:19px;line-height:19px;color:#000;font-size:10.5px;letter-spacing:-0.6px;">未指定</div>
<div style="left:1134px;top:34px;width:102px;height:19px;background:#f1faff;border-right:1px solid #a6a6a6;border-bottom:1px solid #a6a6a6;"></div>
<div class="t" style="left:1136px;top:34px;height:17px;line-height:17px;font-family:'Liberation Mono', monospace;font-size:11px;transform:scaleX(0.767);transform-origin:0 50%;">2017-11-08</div>
<div style="left:1px;top:53px;width:21px;height:19px;background:#f0f0f0;border-right:1px solid #a6a6a6;border-bottom:1px solid #a6a6a6;"></div>
<div style="left:21px;top:53px;width:1px;height:19px;background:#c6c6c6;"></div>
<div style="left:1px;top:53px;width:1px;height:19px;background:#fff;"></div>
<div class="t" style="left:7.969999999999999px;top:54px;height:18px;line-height:18px;font-family:'Liberation Mono', monospace;font-size:11px;transform:scaleX(0.767);transform-origin:0 50%;color:#222;">2</div>
<div style="left:304px;top:53px;width:47px;height:19px;background:#fff;border-right:1px solid #a6a6a6;border-bottom:1px solid #a6a6a6;"></div>
<div class="t" style="left:303px;top:53px;height:19px;line-height:19px;width:41px;text-align:right;color:#000;font-size:10.5px;letter-spacing:-0.6px;">正常</div>
<div style="left:351px;top:53px;width:69px;height:19px;background:#fff;border-right:1px solid #a6a6a6;border-bottom:1px solid #a6a6a6;"></div>
<div class="t" style="left:353px;top:52px;height:16px;line-height:16px;font-family:'Liberation Mono', monospace;font-size:11px;transform:scaleX(0.767);transform-origin:0 50%;color:#000;">2017/8/23</div>
<div style="left:420px;top:53px;width:55px;height:19px;background:#fff;border-right:1px solid #a6a6a6;border-bottom:1px solid #a6a6a6;"></div>
<div style="left:441px;top:54px;width:11px;height:16px;background:linear-gradient(90deg,#f8a020,#ffe000 25%,#fff200 70%,#f8a020);"></div>
<div style="left:442px;top:55px;width:9px;height:2px;background:linear-gradient(90deg,#40a0e0,#e83020 40%,#f8d000 60%,#e83020);"></div>
<div style="left:443px;top:58px;width:7px;height:1px;background:#222;"></div>
<div style="left:444px;top:60px;width:5px;height:1px;background:#30a030;"></div>
<div style="left:443px;top:62px;width:7px;height:1px;background:#222;"></div>
<div style="left:444px;top:64px;width:5px;height:1px;background:#e03020;"></div>
<div style="left:442px;top:66px;width:9px;height:2px;background:#f0e8c0;border:1px solid #a07020;"></div>
<div style="left:475px;top:53px;width:57px;height:19px;background:#fff;border-right:1px solid #a6a6a6;border-bottom:1px solid #a6a6a6;"></div>
<div class="t" style="left:477px;top:53px;height:19px;line-height:19px;font-family:'Liberation Mono', monospace;font-size:11px;transform:scaleX(0.767);transform-origin:0 50%;color:#000;">3</div>
<div style="left:532px;top:53px;width:43px;height:19px;background:#ffff00;border-right:1px solid #a6a6a6;border-bottom:1px solid #a6a6a6;"></div>
<div style="left:548px;top:57px;width:10px;height:10px;background:#fff;border:1px solid #d4d4d4;"></div>
<svg style="left:549px;top:58px" width="8" height="8" viewBox="0 0 8 8"><path d="M1 3.8 L3 6 L7 1.5" stroke="#000" stroke-width="1.7" fill="none"/></svg>
<div style="left:575px;top:53px;width:43px;height:19px;background:#fff;border-right:1px solid #a6a6a6;border-bottom:1px solid #a6a6a6;"></div>
<div style="left:591px;top:57px;width:10px;height:10px;background:#fff;border:1px solid #ececec;border-top-color:#b4b4b4;border-left-color:#b4b4b4;"></div>
<div style="left:618px;top:53px;width:42px;height:19px;background:#fff;border-right:1px solid #a6a6a6;border-bottom:1px solid #a6a6a6;"></div>
<div style="left:633px;top:57px;width:10px;height:10px;background:#fff;border:1px solid #ececec;border-top-color:#b4b4b4;border-left-color:#b4b4b4;"></div>
<div style="left:660px;top:53px;width:43px;height:19px;background:#fff;border-right:1px solid #a6a6a6;border-bottom:1px solid #a6a6a6;"></div>
<div style="left:676px;top:57px;width:10px;height:10px;background:#fff;border:1px solid #ececec;border-top-color:#b4b4b4;border-left-color:#b4b4b4;"></div>
<div style="left:703px;top:53px;width:54px;height:19px;background:#fff;border-right:1px solid #a6a6a6;border-bottom:1px solid #a6a6a6;"></div>
<div style="left:725px;top:57px;width:10px;height:10px;background:#fff;border:1px solid #d4d4d4;"></div>
<svg style="left:726px;top:58px" width="8" height="8" viewBox="0 0 8 8"><path d="M1 3.8 L3 6 L7 1.5" stroke="#000" stroke-width="1.7" fill="none"/></svg>
<div style="left:757px;top:53px;width:50px;height:19px;background:#fff;border-right:1px solid #a6a6a6;border-bottom:1px solid #a6a6a6;"></div>
<div style="left:777px;top:57px;width:10px;height:10px;background:#fff;border:1px solid #ececec;border-top-color:#b4b4b4;border-left-color:#b4b4b4;"></div>
<div style="left:807px;top:53px;width:60px;height:19px;background:#fff;border-right:1px solid #a6a6a6;border-bottom:1px solid #a6a6a6;"></div>
<div style="left:831px;top:57px;width:10px;height:10px;background:#fff;border:1px solid #ececec;border-top-color:#b4b4b4;border-left-color:#b4b4b4;"></div>
<div style="left:914px;top:53px;width:68px;height:19px;background:#fff;border-right:1px solid #a6a6a6;border-bottom:1px solid #a6a6a6;"></div>
<div class="t" style="left:916px;top:53px;height:19px;line-height:19px;font-size:10.5px;letter-spacing:-0.6px;">中盛广告公司</div>
<div style="left:982px;top:53px;width:49px;height:19px;background:#fff;border-right:1px solid #a6a6a6;border-bottom:1px solid #a6a6a6;"></div>
<div class="t" style="left:983px;top:53px;height:19px;line-height:19px;color:#000;font-size:10.5px;letter-spacing:-0.6px;">超级用户</div>
<div style="left:1031px;top:53px;width:103px;height:19px;background:#fff;border-right:1px solid #a6a6a6;border-bottom:1px solid #a6a6a6;"></div>
<div class="t" style="left:1032px;top:53px;height:19px;line-height:19px;color:#000;font-size:10.5px;letter-spacing:-0.6px;">未指定</div>
<div style="left:1134px;top:53px;width:102px;height:19px;background:#fff;border-right:1px solid #a6a6a6;border-bottom:1px solid #a6a6a6;"></div>
<div style="left:1px;top:72px;width:21px;height:18px;background:#f0f0f0;border-right:1px solid #a6a6a6;border-bottom:1px solid #a6a6a6;"></div>
<div style="left:21px;top:72px;width:1px;height:18px;background:#c6c6c6;"></div>
<div style="left:1px;top:72px;width:1px;height:18px;background:#fff;"></div>
<div class="t" style="left:7.969999999999999px;top:73px;height:17px;line-height:17px;font-family:'Liberation Mono', monospace;font-size:11px;transform:scaleX(0.767);transform-origin:0 50%;color:#222;">3</div>
<div style="left:304px;top:72px;width:47px;height:18px;background:#f1faff;border-right:1px solid #a6a6a6;border-bottom:1px solid #a6a6a6;"></div>
<div class="t" style="left:303px;top:72px;height:18px;line-height:18px;width:41px;text-align:right;color:#000;font-size:10.5px;letter-spacing:-0.6px;">正常</div>
<div style="left:351px;top:72px;width:69px;height:18px;background:#f1faff;border-right:1px solid #a6a6a6;border-bottom:1px solid #a6a6a6;"></div>
<div class="t" style="left:353px;top:71px;height:15px;line-height:15px;font-family:'Liberation Mono', monospace;font-size:11px;transform:scaleX(0.767);transform-origin:0 50%;color:#000;">2017/10/20</div>
<div style="left:420px;top:72px;width:55px;height:18px;background:#f1faff;border-right:1px solid #a6a6a6;border-bottom:1px solid #a6a6a6;"></div>
<div style="left:434px;top:73px;width:26px;height:16px;background:radial-gradient(ellipse 9px 5px at 40% 45%,#fff2b0,#f0b030 40%,rgba(200,120,30,0) 100%),linear-gradient(#1a3050 0%,#4a6080 30%,#c08030 55%,#5a4018 75%,#1a1408 100%);"></div>
<div style="left:475px;top:72px;width:57px;height:18px;background:#f1faff;border-right:1px solid #a6a6a6;border-bottom:1px solid #a6a6a6;"></div>
<div class="t" style="left:477px;top:72px;height:18px;line-height:18px;font-family:'Liberation Mono', monospace;font-size:11px;transform:scaleX(0.767);transform-origin:0 50%;color:#000;">9</div>
<div style="left:532px;top:72px;width:43px;height:18px;background:#ffff00;border-right:1px solid #a6a6a6;border-bottom:1px solid #a6a6a6;"></div>
<div style="left:548px;top:75px;width:10px;height:10px;background:#fff;border:1px solid #d4d4d4;"></div>
<svg style="left:549px;top:76px" width="8" height="8" viewBox="0 0 8 8"><path d="M1 3.8 L3 6 L7 1.5" stroke="#000" stroke-width="1.7" fill="none"/></svg>
<div style="left:575px;top:72px;width:43px;height:18px;background:#f1faff;border-right:1px solid #a6a6a6;border-bottom:1px solid #a6a6a6;"></div>
<div style="left:591px;top:75px;width:10px;height:10px;background:#fff;border:1px solid #ececec;border-top-color:#b4b4b4;border-left-color:#b4b4b4;"></div>
<div style="left:618px;top:72px;width:42px;height:18px;background:#f1faff;border-right:1px solid #a6a6a6;border-bottom:1px solid #a6a6a6;"></div>
<div style="left:633px;top:75px;width:10px;height:10px;background:#fff;border:1px solid #ececec;border-top-color:#b4b4b4;border-left-color:#b4b4b4;"></div>
<div style="left:660px;top:72px;width:43px;height:18px;background:#f1faff;border-right:1px solid #a6a6a6;border-bottom:1px solid #a6a6a6;"></div>
<div style="left:676px;top:75px;width:10px;height:10px;background:#fff;border:1px solid #ececec;border-top-color:#b4b4b4;border-left-color:#b4b4b4;"></div>
<div style="left:703px;top:72px;width:54px;height:18px;background:#f1faff;border-right:1px solid #a6a6a6;border-bottom:1px solid #a6a6a6;"></div>
<div style="left:757px;top:72px;width:50px;height:18px;background:#f1faff;border-right:1px solid #a6a6a6;border-bottom:1px solid #a6a6a6;"></div>
<div style="left:807px;top:72px;width:60px;height:18px;background:#f1faff;border-right:1px solid #a6a6a6;border-bottom:1px solid #a6a6a6;"></div>
<div style="left:831px;top:75px;width:10px;height:10px;background:#fff;border:1px solid #ececec;border-top-color:#b4b4b4;border-left-color:#b4b4b4;"></div>
<div style="left:914px;top:72px;width:68px;height:18px;background:#f1faff;border-right:1px solid #a6a6a6;border-bottom:1px solid #a6a6a6;"></div>
<div style="left:982px;top:72px;width:49px;height:18px;background:#f1faff;border-right:1px solid #a6a6a6;border-bottom:1px solid #a6a6a6;"></div>
<div class="t" style="left:983px;top:72px;height:18px;line-height:18px;color:#000;font-size:10.5px;letter-spacing:-0.6px;">超级用户</div>
<div style="left:1031px;top:72px;width:103px;height:18px;background:#f1faff;border-right:1px solid #a6a6a6;border-bottom:1px solid #a6a6a6;"></div>
<div class="t" style="left:1032px;top:72px;height:18px;line-height:18px;color:#000;font-size:10.5px;letter-spacing:-0.6px;">未指定</div>
<div style="left:1134px;top:72px;width:102px;height:18px;background:#f1faff;border-right:1px solid #a6a6a6;border-bottom:1px solid #a6a6a6;"></div>
<div style="left:1px;top:90px;width:21px;height:19px;background:#f0f0f0;border-right:1px solid #a6a6a6;border-bottom:1px solid #a6a6a6;"></div>
<div style="left:21px;top:90px;width:1px;height:19px;background:#c6c6c6;"></div>
<div style="left:1px;top:90px;width:1px;height:19px;background:#fff;"></div>
<div class="t" style="left:7.969999999999999px;top:91px;height:18px;line-height:18px;font-family:'Liberation Mono', monospace;font-size:11px;transform:scaleX(0.767);transform-origin:0 50%;color:#222;">4</div>
<div style="left:304px;top:90px;width:47px;height:19px;background:#fff;border-right:1px solid #a6a6a6;border-bottom:1px solid #a6a6a6;"></div>
<div class="t" style="left:303px;top:90px;height:19px;line-height:19px;width:41px;text-align:right;color:#000;font-size:10.5px;letter-spacing:-0.6px;">正常</div>
<div style="left:351px;top:90px;width:69px;height:19px;background:#fff;border-right:1px solid #a6a6a6;border-bottom:1px solid #a6a6a6;"></div>
<div class="t" style="left:353px;top:89px;height:16px;line-height:16px;font-family:'Liberation Mono', monospace;font-size:11px;transform:scaleX(0.767);transform-origin:0 50%;color:#000;">2017/8/23</div>
<div style="left:420px;top:90px;width:55px;height:19px;background:#fff;border-right:1px solid #a6a6a6;border-bottom:1px solid #a6a6a6;"></div>
<div style="left:441px;top:91px;width:11px;height:16px;background:linear-gradient(90deg,#f8a020,#ffe000 25%,#fff200 70%,#f8a020);"></div>
<div style="left:442px;top:92px;width:9px;height:2px;background:linear-gradient(90deg,#40a0e0,#e83020 40%,#f8d000 60%,#e83020);"></div>
<div style="left:443px;top:95px;width:7px;height:1px;background:#222;"></div>
<div style="left:444px;top:97px;width:5px;height:1px;background:#30a030;"></div>
<div style="left:443px;top:99px;width:7px;height:1px;background:#222;"></div>
<div style="left:444px;top:101px;width:5px;height:1px;background:#e03020;"></div>
<div style="left:442px;top:103px;width:9px;height:2px;background:#f0e8c0;border:1px solid #a07020;"></div>
<div style="left:475px;top:90px;width:57px;height:19px;background:#fff;border-right:1px solid #a6a6a6;border-bottom:1px solid #a6a6a6;"></div>
<div class="t" style="left:477px;top:90px;height:19px;line-height:19px;font-family:'Liberation Mono', monospace;font-size:11px;transform:scaleX(0.767);transform-origin:0 50%;color:#000;">3</div>
<div style="left:532px;top:90px;width:43px;height:19px;background:#ffff00;border-right:1px solid #a6a6a6;border-bottom:1px solid #a6a6a6;"></div>
<div style="left:548px;top:94px;width:10px;height:10px;background:#fff;border:1px solid #d4d4d4;"></div>
<svg style="left:549px;top:95px" width="8" height="8" viewBox="0 0 8 8"><path d="M1 3.8 L3 6 L7 1.5" stroke="#000" stroke-width="1.7" fill="none"/></svg>
<div style="left:575px;top:90px;width:43px;height:19px;background:#fff;border-right:1px solid #a6a6a6;border-bottom:1px solid #a6a6a6;"></div>
<div style="left:591px;top:94px;width:10px;height:10px;background:#fff;border:1px solid #ececec;border-top-color:#b4b4b4;border-left-color:#b4b4b4;"></div>
<div style="left:618px;top:90px;width:42px;height:19px;background:#fff;border-right:1px solid #a6a6a6;border-bottom:1px solid #a6a6a6;"></div>
<div style="left:633px;top:94px;width:10px;height:10px;background:#fff;border:1px solid #ececec;border-top-color:#b4b4b4;border-left-color:#b4b4b4;"></div>
<div style="left:660px;top:90px;width:43px;height:19px;background:#fff;border-right:1px solid #a6a6a6;border-bottom:1px solid #a6a6a6;"></div>
<div style="left:676px;top:94px;width:10px;height:10px;background:#fff;border:1px solid #ececec;border-top-color:#b4b4b4;border-left-color:#b4b4b4;"></div>
<div style="left:703px;top:90px;width:54px;height:19px;background:#fff;border-right:1px solid #a6a6a6;border-bottom:1px solid #a6a6a6;"></div>
<div style="left:757px;top:90px;width:50px;height:19px;background:#fff;border-right:1px solid #a6a6a6;border-bottom:1px solid #a6a6a6;"></div>
<div style="left:807px;top:90px;width:60px;height:19px;background:#fff;border-right:1px solid #a6a6a6;border-bottom:1px solid #a6a6a6;"></div>
<div style="left:831px;top:94px;width:10px;height:10px;background:#fff;border:1px solid #ececec;border-top-color:#b4b4b4;border-left-color:#b4b4b4;"></div>
<div style="left:914px;top:90px;width:68px;height:19px;background:#fff;border-right:1px solid #a6a6a6;border-bottom:1px solid #a6a6a6;"></div>
<div style="left:982px;top:90px;width:49px;height:19px;background:#fff;border-right:1px solid #a6a6a6;border-bottom:1px solid #a6a6a6;"></div>
<div class="t" style="left:983px;top:90px;height:19px;line-height:19px;color:#000;font-size:10.5px;letter-spacing:-0.6px;">超级用户</div>
<div style="left:1031px;top:90px;width:103px;height:19px;background:#fff;border-right:1px solid #a6a6a6;border-bottom:1px solid #a6a6a6;"></div>
<div class="t" style="left:1032px;top:90px;height:19px;line-height:19px;color:#000;font-size:10.5px;letter-spacing:-0.6px;">未指定</div>
<div style="left:1134px;top:90px;width:102px;height:19px;background:#fff;border-right:1px solid #a6a6a6;border-bottom:1px solid #a6a6a6;"></div>
<div style="left:1px;top:109px;width:21px;height:18px;background:#f0f0f0;border-right:1px solid #a6a6a6;border-bottom:1px solid #a6a6a6;"></div>
<div style="left:21px;top:109px;width:1px;height:18px;background:#c6c6c6;"></div>
<div style="left:1px;top:109px;width:1px;height:18px;background:#fff;"></div>
<div class="t" style="left:7.969999999999999px;top:110px;height:17px;line-height:17px;font-family:'Liberation Mono', monospace;font-size:11px;transform:scaleX(0.767);transform-origin:0 50%;color:#222;">5</div>
<div style="left:304px;top:109px;width:47px;height:18px;background:#f1faff;border-right:1px solid #a6a6a6;border-bottom:1px solid #a6a6a6;"></div>
<div class="t" style="left:303px;top:109px;height:18px;line-height:18px;width:41px;text-align:right;color:#000;font-size:10.5px;letter-spacing:-0.6px;">正常</div>
<div style="left:351px;top:109px;width:69px;height:18px;background:#f1faff;border-right:1px solid #a6a6a6;border-bottom:1px solid #a6a6a6;"></div>
<div class="t" style="left:353px;top:108px;height:15px;line-height:15px;font-family:'Liberation Mono', monospace;font-size:11px;transform:scaleX(0.767);transform-origin:0 50%;color:#000;">2017/8/23</div>
<div style="left:420px;top:109px;width:55px;height:18px;background:#f1faff;border-right:1px solid #a6a6a6;border-bottom:1px solid #a6a6a6;"></div>
<div style="left:441px;top:110px;width:11px;height:16px;background:linear-gradient(90deg,#f8a020,#ffe000 25%,#fff200 70%,#f8a020);"></div>
<div style="left:442px;top:111px;width:9px;height:2px;background:linear-gradient(90deg,#40a0e0,#e83020 40%,#f8d000 60%,#e83020);"></div>
<div style="left:443px;top:114px;width:7px;height:1px;background:#222;"></div>
<div style="left:444px;top:116px;width:5px;height:1px;background:#30a030;"></div>
<div style="left:443px;top:118px;width:7px;height:1px;background:#222;"></div>
<div style="left:444px;top:120px;width:5px;height:1px;background:#e03020;"></div>
<div style="left:442px;top:122px;width:9px;height:2px;background:#f0e8c0;border:1px solid #a07020;"></div>
<div style="left:475px;top:109px;width:57px;height:18px;background:#f1faff;border-right:1px solid #a6a6a6;border-bottom:1px solid #a6a6a6;"></div>
<div class="t" style="left:477px;top:109px;height:18px;line-height:18px;font-family:'Liberation Mono', monospace;font-size:11px;transform:scaleX(0.767);transform-origin:0 50%;color:#000;">3</div>
<div style="left:532px;top:109px;width:43px;height:18px;background:#ffff00;border-right:1px solid #a6a6a6;border-bottom:1px solid #a6a6a6;"></div>
<div style="left:548px;top:113px;width:10px;height:10px;background:#fff;border:1px solid #d4d4d4;"></div>
<svg style="left:549px;top:114px" width="8" height="8" viewBox="0 0 8 8"><path d="M1 3.8 L3 6 L7 1.5" stroke="#000" stroke-width="1.7" fill="none"/></svg>
<div style="left:575px;top:109px;width:43px;height:18px;background:#f1faff;border-right:1px solid #a6a6a6;border-bottom:1px solid #a6a6a6;"></div>
<div style="left:591px;top:113px;width:10px;height:10px;background:#fff;border:1px solid #ececec;border-top-color:#b4b4b4;border-left-color:#b4b4b4;"></div>
<div style="left:618px;top:109px;width:42px;height:18px;background:#f1faff;border-right:1px solid #a6a6a6;border-bottom:1px solid #a6a6a6;"></div>
<div style="left:633px;top:113px;width:10px;height:10px;background:#fff;border:1px solid #ececec;border-top-color:#b4b4b4;border-left-color:#b4b4b4;"></div>
<div style="left:660px;top:109px;width:43px;height:18px;background:#f1faff;border-right:1px solid #a6a6a6;border-bottom:1px solid #a6a6a6;"></div>
<div style="left:676px;top:113px;width:10px;height:10px;background:#fff;border:1px solid #ececec;border-top-color:#b4b4b4;border-left-color:#b4b4b4;"></div>
<div style="left:703px;top:109px;width:54px;height:18px;background:#f1faff;border-right:1px solid #a6a6a6;border-bottom:1px solid #a6a6a6;"></div>
<div style="left:757px;top:109px;width:50px;height:18px;background:#f1faff;border-right:1px solid #a6a6a6;border-bottom:1px solid #a6a6a6;"></div>
<div style="left:807px;top:109px;width:60px;height:18px;background:#f1faff;border-right:1px solid #a6a6a6;border-bottom:1px solid #a6a6a6;"></div>
<div style="left:831px;top:113px;width:10px;height:10px;background:#fff;border:1px solid #ececec;border-top-color:#b4b4b4;border-left-color:#b4b4b4;"></div>
<div style="left:914px;top:109px;width:68px;height:18px;background:#f1faff;border-right:1px solid #a6a6a6;border-bottom:1px solid #a6a6a6;"></div>
<div class="t" style="left:916px;top:109px;height:18px;line-height:18px;font-size:10.5px;letter-spacing:-0.6px;">中盛广告公司</div>
<div style="left:982px;top:109px;width:49px;height:18px;background:#f1faff;border-right:1px solid #a6a6a6;border-bottom:1px solid #a6a6a6;"></div>
<div class="t" style="left:983px;top:109px;height:18px;line-height:18px;color:#000;font-size:10.5px;letter-spacing:-0.6px;">超级用户</div>
<div style="left:1031px;top:109px;width:103px;height:18px;background:#f1faff;border-right:1px solid #a6a6a6;border-bottom:1px solid #a6a6a6;"></div>
<div class="t" style="left:1032px;top:109px;height:18px;line-height:18px;color:#000;font-size:10.5px;letter-spacing:-0.6px;">未指定</div>
<div style="left:1134px;top:109px;width:102px;height:18px;background:#f1faff;border-right:1px solid #a6a6a6;border-bottom:1px solid #a6a6a6;"></div>
<div style="left:1px;top:127px;width:21px;height:20px;background:#f0f0f0;border-right:1px solid #a6a6a6;border-bottom:1px solid #a6a6a6;"></div>
<div style="left:21px;top:127px;width:1px;height:20px;background:#c6c6c6;"></div>
<div style="left:1px;top:127px;width:1px;height:20px;background:#fff;"></div>
<div class="t" style="left:7.969999999999999px;top:128px;height:19px;line-height:19px;font-family:'Liberation Mono', monospace;font-size:11px;transform:scaleX(0.767);transform-origin:0 50%;color:#222;">6</div>
<div style="left:304px;top:127px;width:47px;height:20px;background:#fff;border-right:1px solid #a6a6a6;border-bottom:1px solid #a6a6a6;"></div>
<div class="t" style="left:303px;top:127px;height:20px;line-height:20px;width:41px;text-align:right;color:#000;font-size:10.5px;letter-spacing:-0.6px;">正常</div>
<div style="left:351px;top:127px;width:69px;height:20px;background:#fff;border-right:1px solid #a6a6a6;border-bottom:1px solid #a6a6a6;"></div>
<div class="t" style="left:353px;top:126px;height:17px;line-height:17px;font-family:'Liberation Mono', monospace;font-size:11px;transform:scaleX(0.767);transform-origin:0 50%;color:#000;">2017/10/20</div>
<div style="left:420px;top:127px;width:55px;height:20px;background:#fff;border-right:1px solid #a6a6a6;border-bottom:1px solid #a6a6a6;"></div>
<div style="left:434px;top:128px;width:26px;height:16px;background:radial-gradient(ellipse 9px 5px at 40% 45%,#fff2b0,#f0b030 40%,rgba(200,120,30,0) 100%),linear-gradient(#1a3050 0%,#4a6080 30%,#c08030 55%,#5a4018 75%,#1a1408 100%);"></div>
<div style="left:475px;top:127px;width:57px;height:20px;background:#fff;border-right:1px solid #a6a6a6;border-bottom:1px solid #a6a6a6;"></div>
<div class="t" style="left:477px;top:127px;height:20px;line-height:20px;font-family:'Liberation Mono', monospace;font-size:11px;transform:scaleX(0.767);transform-origin:0 50%;color:#000;">9</div>
<div style="left:532px;top:127px;width:43px;height:20px;background:#ffff00;border-right:1px solid #a6a6a6;border-bottom:1px solid #a6a6a6;"></div>
<div style="left:548px;top:131px;width:10px;height:10px;background:#fff;border:1px solid #d4d4d4;"></div>
<svg style="left:549px;top:132px" width="8" height="8" viewBox="0 0 8 8"><path d="M1 3.8 L3 6 L7 1.5" stroke="#000" stroke-width="1.7" fill="none"/></svg>
<div style="left:575px;top:127px;width:43px;height:20px;background:#fff;border-right:1px solid #a6a6a6;border-bottom:1px solid #a6a6a6;"></div>
<div style="left:591px;top:131px;width:10px;height:10px;background:#fff;border:1px solid #ececec;border-top-color:#b4b4b4;border-left-color:#b4b4b4;"></div>
<div style="left:618px;top:127px;width:42px;height:20px;background:#fff;border-right:1px solid #a6a6a6;border-bottom:1px solid #a6a6a6;"></div>
<div style="left:633px;top:131px;width:10px;height:10px;background:#fff;border:1px solid #ececec;border-top-color:#b4b4b4;border-left-color:#b4b4b4;"></div>
<div style="left:660px;top:127px;width:43px;height:20px;background:#fff;border-right:1px solid #a6a6a6;border-bottom:1px solid #a6a6a6;"></div>
<div style="left:676px;top:131px;width:10px;height:10px;background:#fff;border:1px solid #ececec;border-top-color:#b4b4b4;border-left-color:#b4b4b4;"></div>
<div style="left:703px;top:127px;width:54px;height:20px;background:#fff;border-right:1px solid #a6a6a6;border-bottom:1px solid #a6a6a6;"></div>
<div style="left:757px;top:127px;width:50px;height:20px;background:#fff;border-right:1px solid #a6a6a6;border-bottom:1px solid #a6a6a6;"></div>
<div style="left:807px;top:127px;width:60px;height:20px;background:#fff;border-right:1px solid #a6a6a6;border-bottom:1px solid #a6a6a6;"></div>
<div style="left:831px;top:131px;width:10px;height:10px;background:#fff;border:1px solid #ececec;border-top-color:#b4b4b4;border-left-color:#b4b4b4;"></div>
<div style="left:914px;top:127px;width:68px;height:20px;background:#fff;border-right:1px solid #a6a6a6;border-bottom:1px solid #a6a6a6;"></div>
<div style="left:982px;top:127px;width:49px;height:20px;background:#fff;border-right:1px solid #a6a6a6;border-bottom:1px solid #a6a6a6;"></div>
<div class="t" style="left:983px;top:127px;height:20px;line-height:20px;color:#000;font-size:10.5px;letter-spacing:-0.6px;">超级用户</div>
<div style="left:1031px;top:127px;width:103px;height:20px;background:#fff;border-right:1px solid #a6a6a6;border-bottom:1px solid #a6a6a6;"></div>
<div class="t" style="left:1032px;top:127px;height:20px;line-height:20px;color:#000;font-size:10.5px;letter-spacing:-0.6px;">未指定</div>
<div style="left:1134px;top:127px;width:102px;height:20px;background:#fff;border-right:1px solid #a6a6a6;border-bottom:1px solid #a6a6a6;"></div>
<div style="left:1px;top:147px;width:21px;height:18px;background:#f0f0f0;border-right:1px solid #a6a6a6;border-bottom:1px solid #a6a6a6;"></div>
<div style="left:21px;top:147px;width:1px;height:18px;background:#c6c6c6;"></div>
<div style="left:1px;top:147px;width:1px;height:18px;background:#fff;"></div>
<div class="t" style="left:7.969999999999999px;top:148px;height:17px;line-height:17px;font-family:'Liberation Mono', monospace;font-size:11px;transform:scaleX(0.767);transform-origin:0 50%;color:#222;">7</div>
<div style="left:304px;top:147px;width:47px;height:18px;background:#f1faff;border-right:1px solid #a6a6a6;border-bottom:1px solid #a6a6a6;"></div>
<div class="t" style="left:303px;top:147px;height:18px;line-height:18px;width:41px;text-align:right;color:#000;font-size:10.5px;letter-spacing:-0.6px;">正常</div>
<div style="left:351px;top:147px;width:69px;height:18px;background:#f1faff;border-right:1px solid #a6a6a6;border-bottom:1px solid #a6a6a6;"></div>
<div class="t" style="left:353px;top:146px;height:15px;line-height:15px;font-family:'Liberation Mono', monospace;font-size:11px;transform:scaleX(0.767);transform-origin:0 50%;color:#000;">2017/8/23</div>
<div style="left:420px;top:147px;width:55px;height:18px;background:#f1faff;border-right:1px solid #a6a6a6;border-bottom:1px solid #a6a6a6;"></div>
<div style="left:441px;top:148px;width:11px;height:16px;background:linear-gradient(90deg,#f8a020,#ffe000 25%,#fff200 70%,#f8a020);"></div>
<div style="left:442px;top:149px;width:9px;height:2px;background:linear-gradient(90deg,#40a0e0,#e83020 40%,#f8d000 60%,#e83020);"></div>
<div style="left:443px;top:152px;width:7px;height:1px;background:#222;"></div>
<div style="left:444px;top:154px;width:5px;height:1px;background:#30a030;"></div>
<div style="left:443px;top:156px;width:7px;height:1px;background:#222;"></div>
<div style="left:444px;top:158px;width:5px;height:1px;background:#e03020;"></div>
<div style="left:442px;top:160px;width:9px;height:2px;background:#f0e8c0;border:1px solid #a07020;"></div>
<div style="left:475px;top:147px;width:57px;height:18px;background:#f1faff;border-right:1px solid #a6a6a6;border-bottom:1px solid #a6a6a6;"></div>
<div class="t" style="left:477px;top:147px;height:18px;line-height:18px;font-family:'Liberation Mono', monospace;font-size:11px;transform:scaleX(0.767);transform-origin:0 50%;color:#000;">3</div>
<div style="left:532px;top:147px;width:43px;height:18px;background:#ffff00;border-right:1px solid #a6a6a6;border-bottom:1px solid #a6a6a6;"></div>
<div style="left:548px;top:151px;width:10px;height:10px;background:#fff;border:1px solid #d4d4d4;"></div>
<svg style="left:549px;top:152px" width="8" height="8" viewBox="0 0 8 8"><path d="M1 3.8 L3 6 L7 1.5" stroke="#000" stroke-width="1.7" fill="none"/></svg>
<div style="left:575px;top:147px;width:43px;height:18px;background:#f1faff;border-right:1px solid #a6a6a6;border-bottom:1px solid #a6a6a6;"></div>
<div style="left:591px;top:151px;width:10px;height:10px;background:#fff;border:1px solid #ececec;border-top-color:#b4b4b4;border-left-color:#b4b4b4;"></div>
<div style="left:618px;top:147px;width:42px;height:18px;background:#f1faff;border-right:1px solid #a6a6a6;border-bottom:1px solid #a6a6a6;"></div>
<div style="left:633px;top:151px;width:10px;height:10px;background:#fff;border:1px solid #ececec;border-top-color:#b4b4b4;border-left-color:#b4b4b4;"></div>
<div style="left:660px;top:147px;width:43px;height:18px;background:#f1faff;border-right:1px solid #a6a6a6;border-bottom:1px solid #a6a6a6;"></div>
<div style="left:676px;top:151px;width:10px;height:10px;background:#fff;border:1px solid #ececec;border-top-color:#b4b4b4;border-left-color:#b4b4b4;"></div>
<div style="left:703px;top:147px;width:54px;height:18px;background:#f1faff;border-right:1px solid #a6a6a6;border-bottom:1px solid #a6a6a6;"></div>
<div style="left:757px;top:147px;width:50px;height:18px;background:#f1faff;border-right:1px solid #a6a6a6;border-bottom:1px solid #a6a6a6;"></div>
<div style="left:807px;top:147px;width:60px;height:18px;background:#f1faff;border-right:1px solid #a6a6a6;border-bottom:1px solid #a6a6a6;"></div>
<div style="left:831px;top:151px;width:10px;height:10px;background:#fff;border:1px solid #ececec;border-top-color:#b4b4b4;border-left-color:#b4b4b4;"></div>
<div style="left:914px;top:147px;width:68px;height:18px;background:#f1faff;border-right:1px solid #a6a6a6;border-bottom:1px solid #a6a6a6;"></div>
<div style="left:982px;top:147px;width:49px;height:18px;background:#f1faff;border-right:1px solid #a6a6a6;border-bottom:1px solid #a6a6a6;"></div>
<div class="t" style="left:983px;top:147px;height:18px;line-height:18px;color:#000;font-size:10.5px;letter-spacing:-0.6px;">超级用户</div>
<div style="left:1031px;top:147px;width:103px;height:18px;background:#f1faff;border-right:1px solid #a6a6a6;border-bottom:1px solid #a6a6a6;"></div>
<div class="t" style="left:1032px;top:147px;height:18px;line-height:18px;color:#000;font-size:10.5px;letter-spacing:-0.6px;">未指定</div>
<div style="left:1134px;top:147px;width:102px;height:18px;background:#f1faff;border-right:1px solid #a6a6a6;border-bottom:1px solid #a6a6a6;"></div>
<div style="left:1px;top:165px;width:21px;height:19px;background:#f0f0f0;border-right:1px solid #a6a6a6;border-bottom:1px solid #a6a6a6;"></div>
<div style="left:21px;top:165px;width:1px;height:19px;background:#c6c6c6;"></div>
<div style="left:1px;top:165px;width:1px;height:19px;background:#fff;"></div>
<div class="t" style="left:7.969999999999999px;top:166px;height:18px;line-height:18px;font-family:'Liberation Mono', monospace;font-size:11px;transform:scaleX(0.767);transform-origin:0 50%;color:#222;">8</div>
<div style="left:304px;top:165px;width:47px;height:19px;background:#fff;border-right:1px solid #a6a6a6;border-bottom:1px solid #a6a6a6;"></div>
<div class="t" style="left:303px;top:165px;height:19px;line-height:19px;width:41px;text-align:right;color:#000;font-size:10.5px;letter-spacing:-0.6px;">正常</div>
<div style="left:351px;top:165px;width:69px;height:19px;background:#fff;border-right:1px solid #a6a6a6;border-bottom:1px solid #a6a6a6;"></div>
<div class="t" style="left:353px;top:164px;height:16px;line-height:16px;font-family:'Liberation Mono', monospace;font-size:11px;transform:scaleX(0.767);transform-origin:0 50%;color:#000;">2017/10/20</div>
<div style="left:420px;top:165px;width:55px;height:19px;background:#fff;border-right:1px solid #a6a6a6;border-bottom:1px solid #a6a6a6;"></div>
<div style="left:434px;top:166px;width:26px;height:16px;background:radial-gradient(ellipse 9px 5px at 40% 45%,#fff2b0,#f0b030 40%,rgba(200,120,30,0) 100%),linear-gradient(#1a3050 0%,#4a6080 30%,#c08030 55%,#5a4018 75%,#1a1408 100%);"></div>
<div style="left:475px;top:165px;width:57px;height:19px;background:#fff;border-right:1px solid #a6a6a6;border-bottom:1px solid #a6a6a6;"></div>
<div class="t" style="left:477px;top:165px;height:19px;line-height:19px;font-family:'Liberation Mono', monospace;font-size:11px;transform:scaleX(0.767);transform-origin:0 50%;color:#000;">9</div>
<div style="left:532px;top:165px;width:43px;height:19px;background:#ffff00;border-right:1px solid #a6a6a6;border-bottom:1px solid #a6a6a6;"></div>
<div style="left:548px;top:169px;width:10px;height:10px;background:#fff;border:1px solid #d4d4d4;"></div>
<svg style="left:549px;top:170px" width="8" height="8" viewBox="0 0 8 8"><path d="M1 3.8 L3 6 L7 1.5" stroke="#000" stroke-width="1.7" fill="none"/></svg>
<div style="left:575px;top:165px;width:43px;height:19px;background:#fff;border-right:1px solid #a6a6a6;border-bottom:1px solid #a6a6a6;"></div>
<div style="left:591px;top:169px;width:10px;height:10px;background:#fff;border:1px solid #ececec;border-top-color:#b4b4b4;border-left-color:#b4b4b4;"></div>
<div style="left:618px;top:165px;width:42px;height:19px;background:#fff;border-right:1px solid #a6a6a6;border-bottom:1px solid #a6a6a6;"></div>
<div style="left:633px;top:169px;width:10px;height:10px;background:#fff;border:1px solid #ececec;border-top-color:#b4b4b4;border-left-color:#b4b4b4;"></div>
<div style="left:660px;top:165px;width:43px;height:19px;background:#fff;border-right:1px solid #a6a6a6;border-bottom:1px solid #a6a6a6;"></div>
<div style="left:676px;top:169px;width:10px;height:10px;background:#fff;border:1px solid #ececec;border-top-color:#b4b4b4;border-left-color:#b4b4b4;"></div>
<div style="left:703px;top:165px;width:54px;height:19px;background:#fff;border-right:1px solid #a6a6a6;border-bottom:1px solid #a6a6a6;"></div>
<div style="left:757px;top:165px;width:50px;height:19px;background:#fff;border-right:1px solid #a6a6a6;border-bottom:1px solid #a6a6a6;"></div>
<div style="left:807px;top:165px;width:60px;height:19px;background:#fff;border-right:1px solid #a6a6a6;border-bottom:1px solid #a6a6a6;"></div>
<div style="left:831px;top:169px;width:10px;height:10px;background:#fff;border:1px solid #ececec;border-top-color:#b4b4b4;border-left-color:#b4b4b4;"></div>
<div style="left:914px;top:165px;width:68px;height:19px;background:#fff;border-right:1px solid #a6a6a6;border-bottom:1px solid #a6a6a6;"></div>
<div style="left:982px;top:165px;width:49px;height:19px;background:#fff;border-right:1px solid #a6a6a6;border-bottom:1px solid #a6a6a6;"></div>
<div class="t" style="left:983px;top:165px;height:19px;line-height:19px;color:#000;font-size:10.5px;letter-spacing:-0.6px;">超级用户</div>
<div style="left:1031px;top:165px;width:103px;height:19px;background:#fff;border-right:1px solid #a6a6a6;border-bottom:1px solid #a6a6a6;"></div>
<div class="t" style="left:1032px;top:165px;height:19px;line-height:19px;color:#000;font-size:10.5px;letter-spacing:-0.6px;">未指定</div>
<div style="left:1134px;top:165px;width:102px;height:19px;background:#fff;border-right:1px solid #a6a6a6;border-bottom:1px solid #a6a6a6;"></div>
<div style="left:1px;top:184px;width:21px;height:19px;background:#f0f0f0;border-right:1px solid #a6a6a6;border-bottom:1px solid #a6a6a6;"></div>
<div style="left:21px;top:184px;width:1px;height:19px;background:#c6c6c6;"></div>
<div style="left:1px;top:184px;width:1px;height:19px;background:#fff;"></div>
<div class="t" style="left:7.969999999999999px;top:185px;height:18px;line-height:18px;font-family:'Liberation Mono', monospace;font-size:11px;transform:scaleX(0.767);transform-origin:0 50%;color:#222;">9</div>
<div style="left:304px;top:184px;width:47px;height:19px;background:#f1faff;border-right:1px solid #a6a6a6;border-bottom:1px solid #a6a6a6;"></div>
<div class="t" style="left:303px;top:184px;height:19px;line-height:19px;width:41px;text-align:right;color:#000;font-size:10.5px;letter-spacing:-0.6px;">正常</div>
<div style="left:351px;top:184px;width:69px;height:19px;background:#f1faff;border-right:1px solid #a6a6a6;border-bottom:1px solid #a6a6a6;"></div>
<div class="t" style="left:353px;top:183px;height:16px;line-height:16px;font-family:'Liberation Mono', monospace;font-size:11px;transform:scaleX(0.767);transform-origin:0 50%;color:#000;">2017/8/23</div>
<div style="left:420px;top:184px;width:55px;height:19px;background:#f1faff;border-right:1px solid #a6a6a6;border-bottom:1px solid #a6a6a6;"></div>
<div style="left:441px;top:185px;width:11px;height:16px;background:linear-gradient(90deg,#f8a020,#ffe000 25%,#fff200 70%,#f8a020);"></div>
<div style="left:442px;top:186px;width:9px;height:2px;background:linear-gradient(90deg,#40a0e0,#e83020 40%,#f8d000 60%,#e83020);"></div>
<div style="left:443px;top:189px;width:7px;height:1px;background:#222;"></div>
<div style="left:444px;top:191px;width:5px;height:1px;background:#30a030;"></div>
<div style="left:443px;top:193px;width:7px;height:1px;background:#222;"></div>
<div style="left:444px;top:195px;width:5px;height:1px;background:#e03020;"></div>
<div style="left:442px;top:197px;width:9px;height:2px;background:#f0e8c0;border:1px solid #a07020;"></div>
<div style="left:475px;top:184px;width:57px;height:19px;background:#f1faff;border-right:1px solid #a6a6a6;border-bottom:1px solid #a6a6a6;"></div>
<div class="t" style="left:477px;top:184px;height:19px;line-height:19px;font-family:'Liberation Mono', monospace;font-size:11px;transform:scaleX(0.767);transform-origin:0 50%;color:#000;">3</div>
<div style="left:532px;top:184px;width:43px;height:19px;background:#f1faff;border-right:1px solid #a6a6a6;border-bottom:1px solid #a6a6a6;"></div>
<div style="left:548px;top:188px;width:10px;height:10px;background:#fff;border:1px solid #ececec;border-top-color:#b4b4b4;border-left-color:#b4b4b4;"></div>
<div style="left:575px;top:184px;width:43px;height:19px;background:#f1faff;border-right:1px solid #a6a6a6;border-bottom:1px solid #a6a6a6;"></div>
<div style="left:591px;top:188px;width:10px;height:10px;background:#fff;border:1px solid #ececec;border-top-color:#b4b4b4;border-left-color:#b4b4b4;"></div>
<div style="left:618px;top:184px;width:42px;height:19px;background:#f1faff;border-right:1px solid #a6a6a6;border-bottom:1px solid #a6a6a6;"></div>
<div style="left:633px;top:188px;width:10px;height:10px;background:#fff;border:1px solid #ececec;border-top-color:#b4b4b4;border-left-color:#b4b4b4;"></div>
<div style="left:660px;top:184px;width:43px;height:19px;background:#f1faff;border-right:1px solid #a6a6a6;border-bottom:1px solid #a6a6a6;"></div>
<div style="left:676px;top:188px;width:10px;height:10px;background:#fff;border:1px solid #ececec;border-top-color:#b4b4b4;border-left-color:#b4b4b4;"></div>
<div style="left:703px;top:184px;width:54px;height:19px;background:#f1faff;border-right:1px solid #a6a6a6;border-bottom:1px solid #a6a6a6;"></div>
<div style="left:757px;top:184px;width:50px;height:19px;background:#f1faff;border-right:1px solid #a6a6a6;border-bottom:1px solid #a6a6a6;"></div>
<div style="left:807px;top:184px;width:60px;height:19px;background:#f1faff;border-right:1px solid #a6a6a6;border-bottom:1px solid #a6a6a6;"></div>
<div style="left:831px;top:188px;width:10px;height:10px;background:#fff;border:1px solid #ececec;border-top-color:#b4b4b4;border-left-color:#b4b4b4;"></div>
<div style="left:914px;top:184px;width:68px;height:19px;background:#f1faff;border-right:1px solid #a6a6a6;border-bottom:1px solid #a6a6a6;"></div>
<div style="left:982px;top:184px;width:49px;height:19px;background:#f1faff;border-right:1px solid #a6a6a6;border-bottom:1px solid #a6a6a6;"></div>
<div class="t" style="left:983px;top:184px;height:19px;line-height:19px;color:#000;font-size:10.5px;letter-spacing:-0.6px;">超级用户</div>
<div style="left:1031px;top:184px;width:103px;height:19px;background:#f1faff;border-right:1px solid #a6a6a6;border-bottom:1px solid #a6a6a6;"></div>
<div class="t" style="left:1032px;top:184px;height:19px;line-height:19px;color:#000;font-size:10.5px;letter-spacing:-0.6px;">未指定</div>
<div style="left:1134px;top:184px;width:102px;height:19px;background:#f1faff;border-right:1px solid #a6a6a6;border-bottom:1px solid #a6a6a6;"></div>
<div style="left:1px;top:203px;width:21px;height:19px;background:#f0f0f0;border-right:1px solid #a6a6a6;border-bottom:1px solid #a6a6a6;"></div>
<div style="left:21px;top:203px;width:1px;height:19px;background:#c6c6c6;"></div>
<div style="left:1px;top:203px;width:1px;height:19px;background:#fff;"></div>
<div class="t" style="left:5.439999999999998px;top:204px;height:18px;line-height:18px;font-family:'Liberation Mono', monospace;font-size:11px;transform:scaleX(0.767);transform-origin:0 50%;color:#222;">10</div>
<div style="left:304px;top:203px;width:47px;height:19px;background:#fff;border-right:1px solid #a6a6a6;border-bottom:1px solid #a6a6a6;"></div>
<div class="t" style="left:303px;top:203px;height:19px;line-height:19px;width:41px;text-align:right;color:#000;font-size:10.5px;letter-spacing:-0.6px;">正常</div>
<div style="left:351px;top:203px;width:69px;height:19px;background:#fff;border-right:1px solid #a6a6a6;border-bottom:1px solid #a6a6a6;"></div>
<div class="t" style="left:353px;top:202px;height:16px;line-height:16px;font-family:'Liberation Mono', monospace;font-size:11px;transform:scaleX(0.767);transform-origin:0 50%;color:#000;">2017/8/23</div>
<div style="left:420px;top:203px;width:55px;height:19px;background:#fff;border-right:1px solid #a6a6a6;border-bottom:1px solid #a6a6a6;"></div>
<div style="left:441px;top:204px;width:11px;height:16px;background:linear-gradient(90deg,#f8a020,#ffe000 25%,#fff200 70%,#f8a020);"></div>
<div style="left:442px;top:205px;width:9px;height:2px;background:linear-gradient(90deg,#40a0e0,#e83020 40%,#f8d000 60%,#e83020);"></div>
<div style="left:443px;top:208px;width:7px;height:1px;background:#222;"></div>
<div style="left:444px;top:210px;width:5px;height:1px;background:#30a030;"></div>
<div style="left:443px;top:212px;width:7px;height:1px;background:#222;"></div>
<div style="left:444px;top:214px;width:5px;height:1px;background:#e03020;"></div>
<div style="left:442px;top:216px;width:9px;height:2px;background:#f0e8c0;border:1px solid #a07020;"></div>
<div style="left:475px;top:203px;width:57px;height:19px;background:#fff;border-right:1px solid #a6a6a6;border-bottom:1px solid #a6a6a6;"></div>
<div class="t" style="left:477px;top:203px;height:19px;line-height:19px;font-family:'Liberation Mono', monospace;font-size:11px;transform:scaleX(0.767);transform-origin:0 50%;color:#000;">3</div>
<div style="left:532px;top:203px;width:43px;height:19px;background:#fff;border-right:1px solid #a6a6a6;border-bottom:1px solid #a6a6a6;"></div>
<div style="left:548px;top:207px;width:10px;height:10px;background:#fff;border:1px solid #ececec;border-top-color:#b4b4b4;border-left-color:#b4b4b4;"></div>
<div style="left:575px;top:203px;width:43px;height:19px;background:#fff;border-right:1px solid #a6a6a6;border-bottom:1px solid #a6a6a6;"></div>
<div style="left:591px;top:207px;width:10px;height:10px;background:#fff;border:1px solid #ececec;border-top-color:#b4b4b4;border-left-color:#b4b4b4;"></div>
<div style="left:618px;top:203px;width:42px;height:19px;background:#fff;border-right:1px solid #a6a6a6;border-bottom:1px solid #a6a6a6;"></div>
<div style="left:633px;top:207px;width:10px;height:10px;background:#fff;border:1px solid #ececec;border-top-color:#b4b4b4;border-left-color:#b4b4b4;"></div>
<div style="left:660px;top:203px;width:43px;height:19px;background:#fff;border-right:1px solid #a6a6a6;border-bottom:1px solid #a6a6a6;"></div>
<div style="left:676px;top:207px;width:10px;height:10px;background:#fff;border:1px solid #ececec;border-top-color:#b4b4b4;border-left-color:#b4b4b4;"></div>
<div style="left:703px;top:203px;width:54px;height:19px;background:#fff;border-right:1px solid #a6a6a6;border-bottom:1px solid #a6a6a6;"></div>
<div style="left:757px;top:203px;width:50px;height:19px;background:#fff;border-right:1px solid #a6a6a6;border-bottom:1px solid #a6a6a6;"></div>
<div style="left:807px;top:203px;width:60px;height:19px;background:#fff;border-right:1px solid #a6a6a6;border-bottom:1px solid #a6a6a6;"></div>
<div style="left:831px;top:207px;width:10px;height:10px;background:#fff;border:1px solid #ececec;border-top-color:#b4b4b4;border-left-color:#b4b4b4;"></div>
<div style="left:914px;top:203px;width:68px;height:19px;background:#fff;border-right:1px solid #a6a6a6;border-bottom:1px solid #a6a6a6;"></div>
<div style="left:982px;top:203px;width:49px;height:19px;background:#fff;border-right:1px solid #a6a6a6;border-bottom:1px solid #a6a6a6;"></div>
<div class="t" style="left:983px;top:203px;height:19px;line-height:19px;color:#000;font-size:10.5px;letter-spacing:-0.6px;">超级用户</div>
<div style="left:1031px;top:203px;width:103px;height:19px;background:#fff;border-right:1px solid #a6a6a6;border-bottom:1px solid #a6a6a6;"></div>
<div class="t" style="left:1032px;top:203px;height:19px;line-height:19px;color:#000;font-size:10.5px;letter-spacing:-0.6px;">未指定</div>
<div style="left:1134px;top:203px;width:102px;height:19px;background:#fff;border-right:1px solid #a6a6a6;border-bottom:1px solid #a6a6a6;"></div>
<div style="left:1px;top:222px;width:21px;height:18px;background:#f0f0f0;border-right:1px solid #a6a6a6;border-bottom:1px solid #a6a6a6;"></div>
<div style="left:21px;top:222px;width:1px;height:18px;background:#c6c6c6;"></div>
<div style="left:1px;top:222px;width:1px;height:18px;background:#fff;"></div>
<div class="t" style="left:5.439999999999998px;top:223px;height:17px;line-height:17px;font-family:'Liberation Mono', monospace;font-size:11px;transform:scaleX(0.767);transform-origin:0 50%;color:#222;">11</div>
<div style="left:304px;top:222px;width:47px;height:18px;background:#f1faff;border-right:1px solid #a6a6a6;border-bottom:1px solid #a6a6a6;"></div>
<div class="t" style="left:303px;top:222px;height:18px;line-height:18px;width:41px;text-align:right;color:#000;font-size:10.5px;letter-spacing:-0.6px;">正常</div>
<div style="left:351px;top:222px;width:69px;height:18px;background:#f1faff;border-right:1px solid #a6a6a6;border-bottom:1px solid #a6a6a6;"></div>
<div class="t" style="left:353px;top:221px;height:15px;line-height:15px;font-family:'Liberation Mono', monospace;font-size:11px;transform:scaleX(0.767);transform-origin:0 50%;color:#000;">2017/10/20</div>
<div style="left:420px;top:222px;width:55px;height:18px;background:#f1faff;border-right:1px solid #a6a6a6;border-bottom:1px solid #a6a6a6;"></div>
<div style="left:434px;top:223px;width:26px;height:16px;background:radial-gradient(ellipse 9px 5px at 40% 45%,#fff2b0,#f0b030 40%,rgba(200,120,30,0) 100%),linear-gradient(#1a3050 0%,#4a6080 30%,#c08030 55%,#5a4018 75%,#1a1408 100%);"></div>
<div style="left:475px;top:222px;width:57px;height:18px;background:#f1faff;border-right:1px solid #a6a6a6;border-bottom:1px solid #a6a6a6;"></div>
<div class="t" style="left:477px;top:222px;height:18px;line-height:18px;font-family:'Liberation Mono', monospace;font-size:11px;transform:scaleX(0.767);transform-origin:0 50%;color:#000;">9</div>
<div style="left:532px;top:222px;width:43px;height:18px;background:#f1faff;border-right:1px solid #a6a6a6;border-bottom:1px solid #a6a6a6;"></div>
<div style="left:548px;top:225px;width:10px;height:10px;background:#fff;border:1px solid #ececec;border-top-color:#b4b4b4;border-left-color:#b4b4b4;"></div>
<div style="left:575px;top:222px;width:43px;height:18px;background:#f1faff;border-right:1px solid #a6a6a6;border-bottom:1px solid #a6a6a6;"></div>
<div style="left:591px;top:225px;width:10px;height:10px;background:#fff;border:1px solid #ececec;border-top-color:#b4b4b4;border-left-color:#b4b4b4;"></div>
<div style="left:618px;top:222px;width:42px;height:18px;background:#f1faff;border-right:1px solid #a6a6a6;border-bottom:1px solid #a6a6a6;"></div>
<div style="left:633px;top:225px;width:10px;height:10px;background:#fff;border:1px solid #ececec;border-top-color:#b4b4b4;border-left-color:#b4b4b4;"></div>
<div style="left:660px;top:222px;width:43px;height:18px;background:#f1faff;border-right:1px solid #a6a6a6;border-bottom:1px solid #a6a6a6;"></div>
<div style="left:676px;top:225px;width:10px;height:10px;background:#fff;border:1px solid #ececec;border-top-color:#b4b4b4;border-left-color:#b4b4b4;"></div>
<div style="left:703px;top:222px;width:54px;height:18px;background:#f1faff;border-right:1px solid #a6a6a6;border-bottom:1px solid #a6a6a6;"></div>
<div style="left:757px;top:222px;width:50px;height:18px;background:#f1faff;border-right:1px solid #a6a6a6;border-bottom:1px solid #a6a6a6;"></div>
<div style="left:807px;top:222px;width:60px;height:18px;background:#f1faff;border-right:1px solid #a6a6a6;border-bottom:1px solid #a6a6a6;"></div>
<div style="left:831px;top:225px;width:10px;height:10px;background:#fff;border:1px solid #ececec;border-top-color:#b4b4b4;border-left-color:#b4b4b4;"></div>
<div style="left:914px;top:222px;width:68px;height:18px;background:#f1faff;border-right:1px solid #a6a6a6;border-bottom:1px solid #a6a6a6;"></div>
<div style="left:982px;top:222px;width:49px;height:18px;background:#f1faff;border-right:1px solid #a6a6a6;border-bottom:1px solid #a6a6a6;"></div>
<div class="t" style="left:983px;top:222px;height:18px;line-height:18px;color:#000;font-size:10.5px;letter-spacing:-0.6px;">超级用户</div>
<div style="left:1031px;top:222px;width:103px;height:18px;background:#f1faff;border-right:1px solid #a6a6a6;border-bottom:1px solid #a6a6a6;"></div>
<div class="t" style="left:1032px;top:222px;height:18px;line-height:18px;color:#000;font-size:10.5px;letter-spacing:-0.6px;">未指定</div>
<div style="left:1134px;top:222px;width:102px;height:18px;background:#f1faff;border-right:1px solid #a6a6a6;border-bottom:1px solid #a6a6a6;"></div>
<div style="left:1px;top:240px;width:21px;height:19px;background:#f0f0f0;border-right:1px solid #a6a6a6;border-bottom:1px solid #a6a6a6;"></div>
<div style="left:21px;top:240px;width:1px;height:19px;background:#c6c6c6;"></div>
<div style="left:1px;top:240px;width:1px;height:19px;background:#fff;"></div>
<div class="t" style="left:5.439999999999998px;top:241px;height:18px;line-height:18px;font-family:'Liberation Mono', monospace;font-size:11px;transform:scaleX(0.767);transform-origin:0 50%;color:#222;">12</div>
<div style="left:304px;top:240px;width:47px;height:19px;background:#fff;border-right:1px solid #a6a6a6;border-bottom:1px solid #a6a6a6;"></div>
<div class="t" style="left:303px;top:240px;height:19px;line-height:19px;width:41px;text-align:right;color:#8c8c8c;font-size:10.5px;letter-spacing:-0.6px;">正常</div>
<div style="left:351px;top:240px;width:69px;height:19px;background:#fff;border-right:1px solid #a6a6a6;border-bottom:1px solid #a6a6a6;"></div>
<div class="t" style="left:353px;top:239px;height:16px;line-height:16px;font-family:'Liberation Mono', monospace;font-size:11px;transform:scaleX(0.767);transform-origin:0 50%;color:#8c8c8c;">2017/8/23</div>
<div style="left:420px;top:240px;width:55px;height:19px;background:#fff;border-right:1px solid #a6a6a6;border-bottom:1px solid #a6a6a6;"></div>
<div style="left:441px;top:241px;width:11px;height:16px;background:linear-gradient(90deg,#f8a020,#ffe000 25%,#fff200 70%,#f8a020);"></div>
<div style="left:442px;top:242px;width:9px;height:2px;background:linear-gradient(90deg,#40a0e0,#e83020 40%,#f8d000 60%,#e83020);"></div>
<div style="left:443px;top:245px;width:7px;height:1px;background:#222;"></div>
<div style="left:444px;top:247px;width:5px;height:1px;background:#30a030;"></div>
<div style="left:443px;top:249px;width:7px;height:1px;background:#222;"></div>
<div style="left:444px;top:251px;width:5px;height:1px;background:#e03020;"></div>
<div style="left:442px;top:253px;width:9px;height:2px;background:#f0e8c0;border:1px solid #a07020;"></div>
<div style="left:475px;top:240px;width:57px;height:19px;background:#fff;border-right:1px solid #a6a6a6;border-bottom:1px solid #a6a6a6;"></div>
<div class="t" style="left:477px;top:240px;height:19px;line-height:19px;font-family:'Liberation Mono', monospace;font-size:11px;transform:scaleX(0.767);transform-origin:0 50%;color:#8c8c8c;">3</div>
<div style="left:532px;top:240px;width:43px;height:19px;background:#fff;border-right:1px solid #a6a6a6;border-bottom:1px solid #a6a6a6;"></div>
<div style="left:548px;top:244px;width:10px;height:10px;background:#fff;border:1px solid #ececec;border-top-color:#b4b4b4;border-left-color:#b4b4b4;"></div>
<div style="left:575px;top:240px;width:43px;height:19px;background:#fff;border-right:1px solid #a6a6a6;border-bottom:1px solid #a6a6a6;"></div>
<div style="left:591px;top:244px;width:10px;height:10px;background:#fff;border:1px solid #ececec;border-top-color:#b4b4b4;border-left-color:#b4b4b4;"></div>
<div style="left:618px;top:240px;width:42px;height:19px;background:#fff;border-right:1px solid #a6a6a6;border-bottom:1px solid #a6a6a6;"></div>
<div style="left:633px;top:244px;width:10px;height:10px;background:#fff;border:1px solid #ececec;border-top-color:#b4b4b4;border-left-color:#b4b4b4;"></div>
<div style="left:660px;top:240px;width:43px;height:19px;background:#fff;border-right:1px solid #a6a6a6;border-bottom:1px solid #a6a6a6;"></div>
<div style="left:676px;top:244px;width:10px;height:10px;background:#fff;border:1px solid #ececec;border-top-color:#b4b4b4;border-left-color:#b4b4b4;"></div>
<div style="left:703px;top:240px;width:54px;height:19px;background:#fff;border-right:1px solid #a6a6a6;border-bottom:1px solid #a6a6a6;"></div>
<div style="left:757px;top:240px;width:50px;height:19px;background:#fff;border-right:1px solid #a6a6a6;border-bottom:1px solid #a6a6a6;"></div>
<div style="left:807px;top:240px;width:60px;height:19px;background:#fff;border-right:1px solid #a6a6a6;border-bottom:1px solid #a6a6a6;"></div>
<div style="left:831px;top:244px;width:10px;height:10px;background:#fff;border:1px solid #ececec;border-top-color:#b4b4b4;border-left-color:#b4b4b4;"></div>
<div style="left:914px;top:240px;width:68px;height:19px;background:#fff;border-right:1px solid #a6a6a6;border-bottom:1px solid #a6a6a6;"></div>
<div style="left:982px;top:240px;width:49px;height:19px;background:#fff;border-right:1px solid #a6a6a6;border-bottom:1px solid #a6a6a6;"></div>
<div class="t" style="left:983px;top:240px;height:19px;line-height:19px;color:#8c8c8c;font-size:10.5px;letter-spacing:-0.6px;">超级用户</div>
<div style="left:1031px;top:240px;width:103px;height:19px;background:#fff;border-right:1px solid #a6a6a6;border-bottom:1px solid #a6a6a6;"></div>
<div class="t" style="left:1032px;top:240px;height:19px;line-height:19px;color:#8c8c8c;font-size:10.5px;letter-spacing:-0.6px;">未指定</div>
<div style="left:1134px;top:240px;width:102px;height:19px;background:#fff;border-right:1px solid #a6a6a6;border-bottom:1px solid #a6a6a6;"></div>
<div style="left:1px;top:259px;width:21px;height:19px;background:#f0f0f0;border-right:1px solid #a6a6a6;border-bottom:1px solid #a6a6a6;"></div>
<div style="left:21px;top:259px;width:1px;height:19px;background:#c6c6c6;"></div>
<div style="left:1px;top:259px;width:1px;height:19px;background:#fff;"></div>
<div class="t" style="left:5.439999999999998px;top:260px;height:18px;line-height:18px;font-family:'Liberation Mono', monospace;font-size:11px;transform:scaleX(0.767);transform-origin:0 50%;color:#222;">13</div>
<div style="left:304px;top:259px;width:47px;height:19px;background:#f1faff;border-right:1px solid #a6a6a6;border-bottom:1px solid #a6a6a6;"></div>
<div class="t" style="left:303px;top:259px;height:19px;line-height:19px;width:41px;text-align:right;color:#8c8c8c;font-size:10.5px;letter-spacing:-0.6px;">正常</div>
<div style="left:351px;top:259px;width:69px;height:19px;background:#f1faff;border-right:1px solid #a6a6a6;border-bottom:1px solid #a6a6a6;"></div>
<div class="t" style="left:353px;top:258px;height:16px;line-height:16px;font-family:'Liberation Mono', monospace;font-size:11px;transform:scaleX(0.767);transform-origin:0 50%;color:#8c8c8c;">2017/8/23</div>
<div style="left:420px;top:259px;width:55px;height:19px;background:#f1faff;border-right:1px solid #a6a6a6;border-bottom:1px solid #a6a6a6;"></div>
<div style="left:441px;top:260px;width:11px;height:16px;background:linear-gradient(90deg,#f8a020,#ffe000 25%,#fff200 70%,#f8a020);"></div>
<div style="left:442px;top:261px;width:9px;height:2px;background:linear-gradient(90deg,#40a0e0,#e83020 40%,#f8d000 60%,#e83020);"></div>
<div style="left:443px;top:264px;width:7px;height:1px;background:#222;"></div>
<div style="left:444px;top:266px;width:5px;height:1px;background:#30a030;"></div>
<div style="left:443px;top:268px;width:7px;height:1px;background:#222;"></div>
<div style="left:444px;top:270px;width:5px;height:1px;background:#e03020;"></div>
<div style="left:442px;top:272px;width:9px;height:2px;background:#f0e8c0;border:1px solid #a07020;"></div>
<div style="left:475px;top:259px;width:57px;height:19px;background:#f1faff;border-right:1px solid #a6a6a6;border-bottom:1px solid #a6a6a6;"></div>
<div class="t" style="left:477px;top:259px;height:19px;line-height:19px;font-family:'Liberation Mono', monospace;font-size:11px;transform:scaleX(0.767);transform-origin:0 50%;color:#8c8c8c;">3</div>
<div style="left:532px;top:259px;width:43px;height:19px;background:#f1faff;border-right:1px solid #a6a6a6;border-bottom:1px solid #a6a6a6;"></div>
<div style="left:548px;top:263px;width:10px;height:10px;background:#fff;border:1px solid #ececec;border-top-color:#b4b4b4;border-left-color:#b4b4b4;"></div>
<div style="left:575px;top:259px;width:43px;height:19px;background:#f1faff;border-right:1px solid #a6a6a6;border-bottom:1px solid #a6a6a6;"></div>
<div style="left:591px;top:263px;width:10px;height:10px;background:#fff;border:1px solid #ececec;border-top-color:#b4b4b4;border-left-color:#b4b4b4;"></div>
<div style="left:618px;top:259px;width:42px;height:19px;background:#f1faff;border-right:1px solid #a6a6a6;border-bottom:1px solid #a6a6a6;"></div>
<div style="left:633px;top:263px;width:10px;height:10px;background:#fff;border:1px solid #ececec;border-top-color:#b4b4b4;border-left-color:#b4b4b4;"></div>
<div style="left:660px;top:259px;width:43px;height:19px;background:#f1faff;border-right:1px solid #a6a6a6;border-bottom:1px solid #a6a6a6;"></div>
<div style="left:676px;top:263px;width:10px;height:10px;background:#fff;border:1px solid #ececec;border-top-color:#b4b4b4;border-left-color:#b4b4b4;"></div>
<div style="left:703px;top:259px;width:54px;height:19px;background:#f1faff;border-right:1px solid #a6a6a6;border-bottom:1px solid #a6a6a6;"></div>
<div style="left:757px;top:259px;width:50px;height:19px;background:#f1faff;border-right:1px solid #a6a6a6;border-bottom:1px solid #a6a6a6;"></div>
<div style="left:807px;top:259px;width:60px;height:19px;background:#f1faff;border-right:1px solid #a6a6a6;border-bottom:1px solid #a6a6a6;"></div>
<div style="left:831px;top:263px;width:10px;height:10px;background:#fff;border:1px solid #ececec;border-top-color:#b4b4b4;border-left-color:#b4b4b4;"></div>
<div style="left:914px;top:259px;width:68px;height:19px;background:#f1faff;border-right:1px solid #a6a6a6;border-bottom:1px solid #a6a6a6;"></div>
<div style="left:982px;top:259px;width:49px;height:19px;background:#f1faff;border-right:1px solid #a6a6a6;border-bottom:1px solid #a6a6a6;"></div>
<div class="t" style="left:983px;top:259px;height:19px;line-height:19px;color:#8c8c8c;font-size:10.5px;letter-spacing:-0.6px;">超级用户</div>
<div style="left:1031px;top:259px;width:103px;height:19px;background:#f1faff;border-right:1px solid #a6a6a6;border-bottom:1px solid #a6a6a6;"></div>
<div class="t" style="left:1032px;top:259px;height:19px;line-height:19px;color:#8c8c8c;font-size:10.5px;letter-spacing:-0.6px;">未指定</div>
<div style="left:1134px;top:259px;width:102px;height:19px;background:#f1faff;border-right:1px solid #a6a6a6;border-bottom:1px solid #a6a6a6;"></div>
<div style="left:1px;top:278px;width:21px;height:19px;background:#f0f0f0;border-right:1px solid #a6a6a6;border-bottom:1px solid #a6a6a6;"></div>
<div style="left:21px;top:278px;width:1px;height:19px;background:#c6c6c6;"></div>
<div style="left:1px;top:278px;width:1px;height:19px;background:#fff;"></div>
<div class="t" style="left:5.439999999999998px;top:279px;height:18px;line-height:18px;font-family:'Liberation Mono', monospace;font-size:11px;transform:scaleX(0.767);transform-origin:0 50%;color:#222;">14</div>
<div style="left:304px;top:278px;width:47px;height:19px;background:#fff;border-right:1px solid #a6a6a6;border-bottom:1px solid #a6a6a6;"></div>
<div class="t" style="left:303px;top:278px;height:19px;line-height:19px;width:41px;text-align:right;color:#000;font-size:10.5px;letter-spacing:-0.6px;">正常</div>
<div style="left:351px;top:278px;width:69px;height:19px;background:#fff;border-right:1px solid #a6a6a6;border-bottom:1px solid #a6a6a6;"></div>
<div class="t" style="left:353px;top:277px;height:16px;line-height:16px;font-family:'Liberation Mono', monospace;font-size:11px;transform:scaleX(0.767);transform-origin:0 50%;color:#000;">2017/8/23</div>
<div style="left:420px;top:278px;width:55px;height:19px;background:#fff;border-right:1px solid #a6a6a6;border-bottom:1px solid #a6a6a6;"></div>
<div style="left:441px;top:279px;width:11px;height:16px;background:linear-gradient(90deg,#f8a020,#ffe000 25%,#fff200 70%,#f8a020);"></div>
<div style="left:442px;top:280px;width:9px;height:2px;background:linear-gradient(90deg,#40a0e0,#e83020 40%,#f8d000 60%,#e83020);"></div>
<div style="left:443px;top:283px;width:7px;height:1px;background:#222;"></div>
<div style="left:444px;top:285px;width:5px;height:1px;background:#30a030;"></div>
<div style="left:443px;top:287px;width:7px;height:1px;background:#222;"></div>
<div style="left:444px;top:289px;width:5px;height:1px;background:#e03020;"></div>
<div style="left:442px;top:291px;width:9px;height:2px;background:#f0e8c0;border:1px solid #a07020;"></div>
<div style="left:475px;top:278px;width:57px;height:19px;background:#fff;border-right:1px solid #a6a6a6;border-bottom:1px solid #a6a6a6;"></div>
<div class="t" style="left:477px;top:278px;height:19px;line-height:19px;font-family:'Liberation Mono', monospace;font-size:11px;transform:scaleX(0.767);transform-origin:0 50%;color:#000;">3</div>
<div style="left:532px;top:278px;width:43px;height:19px;background:#fff;border-right:1px solid #a6a6a6;border-bottom:1px solid #a6a6a6;"></div>
<div style="left:548px;top:282px;width:10px;height:10px;background:#fff;border:1px solid #ececec;border-top-color:#b4b4b4;border-left-color:#b4b4b4;"></div>
<div style="left:575px;top:278px;width:43px;height:19px;background:#fff;border-right:1px solid #a6a6a6;border-bottom:1px solid #a6a6a6;"></div>
<div style="left:591px;top:282px;width:10px;height:10px;background:#fff;border:1px solid #ececec;border-top-color:#b4b4b4;border-left-color:#b4b4b4;"></div>
<div style="left:618px;top:278px;width:42px;height:19px;background:#fff;border-right:1px solid #a6a6a6;border-bottom:1px solid #a6a6a6;"></div>
<div style="left:633px;top:282px;width:10px;height:10px;background:#fff;border:1px solid #ececec;border-top-color:#b4b4b4;border-left-color:#b4b4b4;"></div>
<div style="left:660px;top:278px;width:43px;height:19px;background:#fff;border-right:1px solid #a6a6a6;border-bottom:1px solid #a6a6a6;"></div>
<div style="left:676px;top:282px;width:10px;height:10px;background:#fff;border:1px solid #ececec;border-top-color:#b4b4b4;border-left-color:#b4b4b4;"></div>
<div style="left:703px;top:278px;width:54px;height:19px;background:#fff;border-right:1px solid #a6a6a6;border-bottom:1px solid #a6a6a6;"></div>
<div style="left:725px;top:282px;width:10px;height:10px;background:#fff;border:1px solid #d4d4d4;"></div>
<svg style="left:726px;top:283px" width="8" height="8" viewBox="0 0 8 8"><path d="M1 3.8 L3 6 L7 1.5" stroke="#000" stroke-width="1.7" fill="none"/></svg>
<div style="left:757px;top:278px;width:50px;height:19px;background:#fff;border-right:1px solid #a6a6a6;border-bottom:1px solid #a6a6a6;"></div>
<div style="left:777px;top:282px;width:10px;height:10px;background:#fff;border:1px solid #ececec;border-top-color:#b4b4b4;border-left-color:#b4b4b4;"></div>
<div style="left:807px;top:278px;width:60px;height:19px;background:#fff;border-right:1px solid #a6a6a6;border-bottom:1px solid #a6a6a6;"></div>
<div style="left:831px;top:282px;width:10px;height:10px;background:#fff;border:1px solid #ececec;border-top-color:#b4b4b4;border-left-color:#b4b4b4;"></div>
<div style="left:914px;top:278px;width:68px;height:19px;background:#fff;border-right:1px solid #a6a6a6;border-bottom:1px solid #a6a6a6;"></div>
<div class="t" style="left:916px;top:278px;height:19px;line-height:19px;font-size:10.5px;letter-spacing:-0.6px;">中盛广告公司</div>
<div style="left:982px;top:278px;width:49px;height:19px;background:#fff;border-right:1px solid #a6a6a6;border-bottom:1px solid #a6a6a6;"></div>
<div class="t" style="left:983px;top:278px;height:19px;line-height:19px;color:#000;font-size:10.5px;letter-spacing:-0.6px;">超级用户</div>
<div style="left:1031px;top:278px;width:103px;height:19px;background:#fff;border-right:1px solid #a6a6a6;border-bottom:1px solid #a6a6a6;"></div>
<div class="t" style="left:1032px;top:278px;height:19px;line-height:19px;color:#000;font-size:10.5px;letter-spacing:-0.6px;">未指定</div>
<div style="left:1134px;top:278px;width:102px;height:19px;background:#fff;border-right:1px solid #a6a6a6;border-bottom:1px solid #a6a6a6;"></div>
<div style="left:1px;top:297px;width:21px;height:19px;background:#f0f0f0;border-right:1px solid #a6a6a6;border-bottom:1px solid #a6a6a6;"></div>
<div style="left:21px;top:297px;width:1px;height:19px;background:#c6c6c6;"></div>
<div style="left:1px;top:297px;width:1px;height:19px;background:#fff;"></div>
<div class="t" style="left:5.439999999999998px;top:298px;height:18px;line-height:18px;font-family:'Liberation Mono', monospace;font-size:11px;transform:scaleX(0.767);transform-origin:0 50%;color:#222;">15</div>
<div style="left:304px;top:297px;width:47px;height:19px;background:#f1faff;border-right:1px solid #a6a6a6;border-bottom:1px solid #a6a6a6;"></div>
<div class="t" style="left:303px;top:297px;height:19px;line-height:19px;width:41px;text-align:right;color:#000;font-size:10.5px;letter-spacing:-0.6px;">正常</div>
<div style="left:351px;top:297px;width:69px;height:19px;background:#f1faff;border-right:1px solid #a6a6a6;border-bottom:1px solid #a6a6a6;"></div>
<div class="t" style="left:353px;top:296px;height:16px;line-height:16px;font-family:'Liberation Mono', monospace;font-size:11px;transform:scaleX(0.767);transform-origin:0 50%;color:#000;">2017/8/23</div>
<div style="left:420px;top:297px;width:55px;height:19px;background:#f1faff;border-right:1px solid #a6a6a6;border-bottom:1px solid #a6a6a6;"></div>
<div style="left:441px;top:298px;width:11px;height:16px;background:linear-gradient(90deg,#f8a020,#ffe000 25%,#fff200 70%,#f8a020);"></div>
<div style="left:442px;top:299px;width:9px;height:2px;background:linear-gradient(90deg,#40a0e0,#e83020 40%,#f8d000 60%,#e83020);"></div>
<div style="left:443px;top:302px;width:7px;height:1px;background:#222;"></div>
<div style="left:444px;top:304px;width:5px;height:1px;background:#30a030;"></div>
<div style="left:443px;top:306px;width:7px;height:1px;background:#222;"></div>
<div style="left:444px;top:308px;width:5px;height:1px;background:#e03020;"></div>
<div style="left:442px;top:310px;width:9px;height:2px;background:#f0e8c0;border:1px solid #a07020;"></div>
<div style="left:475px;top:297px;width:57px;height:19px;background:#f1faff;border-right:1px solid #a6a6a6;border-bottom:1px solid #a6a6a6;"></div>
<div class="t" style="left:477px;top:297px;height:19px;line-height:19px;font-family:'Liberation Mono', monospace;font-size:11px;transform:scaleX(0.767);transform-origin:0 50%;color:#000;">3</div>
<div style="left:532px;top:297px;width:43px;height:19px;background:#f1faff;border-right:1px solid #a6a6a6;border-bottom:1px solid #a6a6a6;"></div>
<div style="left:548px;top:301px;width:10px;height:10px;background:#fff;border:1px solid #ececec;border-top-color:#b4b4b4;border-left-color:#b4b4b4;"></div>
<div style="left:575px;top:297px;width:43px;height:19px;background:#f1faff;border-right:1px solid #a6a6a6;border-bottom:1px solid #a6a6a6;"></div>
<div style="left:591px;top:301px;width:10px;height:10px;background:#fff;border:1px solid #ececec;border-top-color:#b4b4b4;border-left-color:#b4b4b4;"></div>
<div style="left:618px;top:297px;width:42px;height:19px;background:#f1faff;border-right:1px solid #a6a6a6;border-bottom:1px solid #a6a6a6;"></div>
<div style="left:633px;top:301px;width:10px;height:10px;background:#fff;border:1px solid #ececec;border-top-color:#b4b4b4;border-left-color:#b4b4b4;"></div>
<div style="left:660px;top:297px;width:43px;height:19px;background:#f1faff;border-right:1px solid #a6a6a6;border-bottom:1px solid #a6a6a6;"></div>
<div style="left:676px;top:301px;width:10px;height:10px;background:#fff;border:1px solid #ececec;border-top-color:#b4b4b4;border-left-color:#b4b4b4;"></div>
<div style="left:703px;top:297px;width:54px;height:19px;background:#f1faff;border-right:1px solid #a6a6a6;border-bottom:1px solid #a6a6a6;"></div>
<div style="left:725px;top:301px;width:10px;height:10px;background:#fff;border:1px solid #d4d4d4;"></div>
<svg style="left:726px;top:302px" width="8" height="8" viewBox="0 0 8 8"><path d="M1 3.8 L3 6 L7 1.5" stroke="#000" stroke-width="1.7" fill="none"/></svg>
<div style="left:757px;top:297px;width:50px;height:19px;background:#f1faff;border-right:1px solid #a6a6a6;border-bottom:1px solid #a6a6a6;"></div>
<div style="left:777px;top:301px;width:10px;height:10px;background:#fff;border:1px solid #ececec;border-top-color:#b4b4b4;border-left-color:#b4b4b4;"></div>
<div style="left:807px;top:297px;width:60px;height:19px;background:#f1faff;border-right:1px solid #a6a6a6;border-bottom:1px solid #a6a6a6;"></div>
<div style="left:831px;top:301px;width:10px;height:10px;background:#fff;border:1px solid #ececec;border-top-color:#b4b4b4;border-left-color:#b4b4b4;"></div>
<div style="left:914px;top:297px;width:68px;height:19px;background:#f1faff;border-right:1px solid #a6a6a6;border-bottom:1px solid #a6a6a6;"></div>
<div class="t" style="left:916px;top:297px;height:19px;line-height:19px;font-size:10.5px;letter-spacing:-0.6px;">中盛广告公司</div>
<div style="left:982px;top:297px;width:49px;height:19px;background:#f1faff;border-right:1px solid #a6a6a6;border-bottom:1px solid #a6a6a6;"></div>
<div class="t" style="left:983px;top:297px;height:19px;line-height:19px;color:#000;font-size:10.5px;letter-spacing:-0.6px;">超级用户</div>
<div style="left:1031px;top:297px;width:103px;height:19px;background:#f1faff;border-right:1px solid #a6a6a6;border-bottom:1px solid #a6a6a6;"></div>
<div class="t" style="left:1032px;top:297px;height:19px;line-height:19px;color:#000;font-size:10.5px;letter-spacing:-0.6px;">未指定</div>
<div style="left:1134px;top:297px;width:102px;height:19px;background:#f1faff;border-right:1px solid #a6a6a6;border-bottom:1px solid #a6a6a6;"></div>
<div style="left:1px;top:316px;width:21px;height:19px;background:#f0f0f0;border-right:1px solid #a6a6a6;border-bottom:1px solid #a6a6a6;"></div>
<div style="left:21px;top:316px;width:1px;height:19px;background:#c6c6c6;"></div>
<div style="left:1px;top:316px;width:1px;height:19px;background:#fff;"></div>
<div class="t" style="left:5.439999999999998px;top:317px;height:18px;line-height:18px;font-family:'Liberation Mono', monospace;font-size:11px;transform:scaleX(0.767);transform-origin:0 50%;color:#222;">16</div>
<div style="left:304px;top:316px;width:47px;height:19px;background:#fff;border-right:1px solid #a6a6a6;border-bottom:1px solid #a6a6a6;"></div>
<div class="t" style="left:303px;top:316px;height:19px;line-height:19px;width:41px;text-align:right;color:#000;font-size:10.5px;letter-spacing:-0.6px;">正常</div>
<div style="left:351px;top:316px;width:69px;height:19px;background:#fff;border-right:1px solid #a6a6a6;border-bottom:1px solid #a6a6a6;"></div>
<div class="t" style="left:353px;top:315px;height:16px;line-height:16px;font-family:'Liberation Mono', monospace;font-size:11px;transform:scaleX(0.767);transform-origin:0 50%;color:#000;">2017/8/23</div>
<div style="left:420px;top:316px;width:55px;height:19px;background:#fff;border-right:1px solid #a6a6a6;border-bottom:1px solid #a6a6a6;"></div>
<div style="left:441px;top:317px;width:11px;height:16px;background:linear-gradient(90deg,#f8a020,#ffe000 25%,#fff200 70%,#f8a020);"></div>
<div style="left:442px;top:318px;width:9px;height:2px;background:linear-gradient(90deg,#40a0e0,#e83020 40%,#f8d000 60%,#e83020);"></div>
<div style="left:443px;top:321px;width:7px;height:1px;background:#222;"></div>
<div style="left:444px;top:323px;width:5px;height:1px;background:#30a030;"></div>
<div style="left:443px;top:325px;width:7px;height:1px;background:#222;"></div>
<div style="left:444px;top:327px;width:5px;height:1px;background:#e03020;"></div>
<div style="left:442px;top:329px;width:9px;height:2px;background:#f0e8c0;border:1px solid #a07020;"></div>
<div style="left:475px;top:316px;width:57px;height:19px;background:#fff;border-right:1px solid #a6a6a6;border-bottom:1px solid #a6a6a6;"></div>
<div class="t" style="left:477px;top:316px;height:19px;line-height:19px;font-family:'Liberation Mono', monospace;font-size:11px;transform:scaleX(0.767);transform-origin:0 50%;color:#000;">3</div>
<div style="left:532px;top:316px;width:43px;height:19px;background:#fff;border-right:1px solid #a6a6a6;border-bottom:1px solid #a6a6a6;"></div>
<div style="left:548px;top:320px;width:10px;height:10px;background:#fff;border:1px solid #ececec;border-top-color:#b4b4b4;border-left-color:#b4b4b4;"></div>
<div style="left:575px;top:316px;width:43px;height:19px;background:#fff;border-right:1px solid #a6a6a6;border-bottom:1px solid #a6a6a6;"></div>
<div style="left:591px;top:320px;width:10px;height:10px;background:#fff;border:1px solid #ececec;border-top-color:#b4b4b4;border-left-color:#b4b4b4;"></div>
<div style="left:618px;top:316px;width:42px;height:19px;background:#fff;border-right:1px solid #a6a6a6;border-bottom:1px solid #a6a6a6;"></div>
<div style="left:633px;top:320px;width:10px;height:10px;background:#fff;border:1px solid #ececec;border-top-color:#b4b4b4;border-left-color:#b4b4b4;"></div>
<div style="left:660px;top:316px;width:43px;height:19px;background:#fff;border-right:1px solid #a6a6a6;border-bottom:1px solid #a6a6a6;"></div>
<div style="left:676px;top:320px;width:10px;height:10px;background:#fff;border:1px solid #ececec;border-top-color:#b4b4b4;border-left-color:#b4b4b4;"></div>
<div style="left:703px;top:316px;width:54px;height:19px;background:#fff;border-right:1px solid #a6a6a6;border-bottom:1px solid #a6a6a6;"></div>
<div style="left:725px;top:320px;width:10px;height:10px;background:#fff;border:1px solid #d4d4d4;"></div>
<svg style="left:726px;top:321px" width="8" height="8" viewBox="0 0 8 8"><path d="M1 3.8 L3 6 L7 1.5" stroke="#000" stroke-width="1.7" fill="none"/></svg>
<div style="left:757px;top:316px;width:50px;height:19px;background:#fff;border-right:1px solid #a6a6a6;border-bottom:1px solid #a6a6a6;"></div>
<div style="left:777px;top:320px;width:10px;height:10px;background:#fff;border:1px solid #ececec;border-top-color:#b4b4b4;border-left-color:#b4b4b4;"></div>
<div style="left:807px;top:316px;width:60px;height:19px;background:#fff;border-right:1px solid #a6a6a6;border-bottom:1px solid #a6a6a6;"></div>
<div style="left:831px;top:320px;width:10px;height:10px;background:#fff;border:1px solid #ececec;border-top-color:#b4b4b4;border-left-color:#b4b4b4;"></div>
<div style="left:914px;top:316px;width:68px;height:19px;background:#fff;border-right:1px solid #a6a6a6;border-bottom:1px solid #a6a6a6;"></div>
<div class="t" style="left:916px;top:316px;height:19px;line-height:19px;font-size:10.5px;letter-spacing:-0.6px;">中盛广告公司</div>
<div style="left:982px;top:316px;width:49px;height:19px;background:#fff;border-right:1px solid #a6a6a6;border-bottom:1px solid #a6a6a6;"></div>
<div class="t" style="left:983px;top:316px;height:19px;line-height:19px;color:#000;font-size:10.5px;letter-spacing:-0.6px;">超级用户</div>
<div style="left:1031px;top:316px;width:103px;height:19px;background:#fff;border-right:1px solid #a6a6a6;border-bottom:1px solid #a6a6a6;"></div>
<div class="t" style="left:1032px;top:316px;height:19px;line-height:19px;color:#000;font-size:10.5px;letter-spacing:-0.6px;">未指定</div>
<div style="left:1134px;top:316px;width:102px;height:19px;background:#fff;border-right:1px solid #a6a6a6;border-bottom:1px solid #a6a6a6;"></div>
<div style="left:1px;top:335px;width:21px;height:19px;background:#f0f0f0;border-right:1px solid #a6a6a6;border-bottom:1px solid #a6a6a6;"></div>
<div style="left:21px;top:335px;width:1px;height:19px;background:#c6c6c6;"></div>
<div style="left:1px;top:335px;width:1px;height:19px;background:#fff;"></div>
<div class="t" style="left:5.439999999999998px;top:336px;height:18px;line-height:18px;font-family:'Liberation Mono', monospace;font-size:11px;transform:scaleX(0.767);transform-origin:0 50%;color:#222;">17</div>
<div style="left:304px;top:335px;width:47px;height:19px;background:#f1faff;border-right:1px solid #a6a6a6;border-bottom:1px solid #a6a6a6;"></div>
<div class="t" style="left:303px;top:335px;height:19px;line-height:19px;width:41px;text-align:right;color:#000;font-size:10.5px;letter-spacing:-0.6px;">正常</div>
<div style="left:351px;top:335px;width:69px;height:19px;background:#f1faff;border-right:1px solid #a6a6a6;border-bottom:1px solid #a6a6a6;"></div>
<div class="t" style="left:353px;top:334px;height:16px;line-height:16px;font-family:'Liberation Mono', monospace;font-size:11px;transform:scaleX(0.767);transform-origin:0 50%;color:#000;">2014/8/7</div>
<div style="left:420px;top:335px;width:55px;height:19px;background:#f1faff;border-right:1px solid #a6a6a6;border-bottom:1px solid #a6a6a6;"></div>
<div style="left:475px;top:335px;width:57px;height:19px;background:#f1faff;border-right:1px solid #a6a6a6;border-bottom:1px solid #a6a6a6;"></div>
<div class="t" style="left:477px;top:335px;height:19px;line-height:19px;color:#000;font-size:10.5px;letter-spacing:-0.6px;">背胶</div>
<div style="left:532px;top:335px;width:43px;height:19px;background:#ffff00;border-right:1px solid #a6a6a6;border-bottom:1px solid #a6a6a6;"></div>
<div style="left:548px;top:339px;width:10px;height:10px;background:#fff;border:1px solid #d4d4d4;"></div>
<svg style="left:549px;top:340px" width="8" height="8" viewBox="0 0 8 8"><path d="M1 3.8 L3 6 L7 1.5" stroke="#000" stroke-width="1.7" fill="none"/></svg>
<div style="left:575px;top:335px;width:43px;height:19px;background:#ffff00;border-right:1px solid #a6a6a6;border-bottom:1px solid #a6a6a6;"></div>
<div style="left:591px;top:339px;width:10px;height:10px;background:#fff;border:1px solid #d4d4d4;"></div>
<svg style="left:592px;top:340px" width="8" height="8" viewBox="0 0 8 8"><path d="M1 3.8 L3 6 L7 1.5" stroke="#000" stroke-width="1.7" fill="none"/></svg>
<div style="left:618px;top:335px;width:42px;height:19px;background:#f1faff;border-right:1px solid #a6a6a6;border-bottom:1px solid #a6a6a6;"></div>
<div style="left:633px;top:339px;width:10px;height:10px;background:#fff;border:1px solid #ececec;border-top-color:#b4b4b4;border-left-color:#b4b4b4;"></div>
<div style="left:660px;top:335px;width:43px;height:19px;background:#ffff00;border-right:1px solid #a6a6a6;border-bottom:1px solid #a6a6a6;"></div>
<div style="left:676px;top:339px;width:10px;height:10px;background:#fff;border:1px solid #d4d4d4;"></div>
<svg style="left:677px;top:340px" width="8" height="8" viewBox="0 0 8 8"><path d="M1 3.8 L3 6 L7 1.5" stroke="#000" stroke-width="1.7" fill="none"/></svg>
<div style="left:703px;top:335px;width:54px;height:19px;background:#f1faff;border-right:1px solid #a6a6a6;border-bottom:1px solid #a6a6a6;"></div>
<div style="left:757px;top:335px;width:50px;height:19px;background:#f1faff;border-right:1px solid #a6a6a6;border-bottom:1px solid #a6a6a6;"></div>
<div style="left:807px;top:335px;width:60px;height:19px;background:#f1faff;border-right:1px solid #a6a6a6;border-bottom:1px solid #a6a6a6;"></div>
<div style="left:831px;top:339px;width:10px;height:10px;background:#fff;border:1px solid #ececec;border-top-color:#b4b4b4;border-left-color:#b4b4b4;"></div>
<div style="left:914px;top:335px;width:68px;height:19px;background:#f1faff;border-right:1px solid #a6a6a6;border-bottom:1px solid #a6a6a6;"></div>
<div style="left:982px;top:335px;width:49px;height:19px;background:#f1faff;border-right:1px solid #a6a6a6;border-bottom:1px solid #a6a6a6;"></div>
<div class="t" style="left:983px;top:335px;height:19px;line-height:19px;color:#000;font-size:10.5px;letter-spacing:-0.6px;">超级用户</div>
<div style="left:1031px;top:335px;width:103px;height:19px;background:#f1faff;border-right:1px solid #a6a6a6;border-bottom:1px solid #a6a6a6;"></div>
<div class="t" style="left:1032px;top:335px;height:19px;line-height:19px;color:#000;font-size:10.5px;letter-spacing:-0.6px;">未指定</div>
<div style="left:1134px;top:335px;width:102px;height:19px;background:#f1faff;border-right:1px solid #a6a6a6;border-bottom:1px solid #a6a6a6;"></div>
<div class="t" style="left:1136px;top:335px;height:17px;line-height:17px;font-family:'Liberation Mono', monospace;font-size:11px;transform:scaleX(0.767);transform-origin:0 50%;">2014-08-07</div>
<div style="left:1px;top:354px;width:21px;height:18px;background:#f0f0f0;border-right:1px solid #a6a6a6;border-bottom:1px solid #a6a6a6;"></div>
<div style="left:21px;top:354px;width:1px;height:18px;background:#c6c6c6;"></div>
<div style="left:1px;top:354px;width:1px;height:18px;background:#fff;"></div>
<div class="t" style="left:5.439999999999998px;top:355px;height:17px;line-height:17px;font-family:'Liberation Mono', monospace;font-size:11px;transform:scaleX(0.767);transform-origin:0 50%;color:#222;">18</div>
<div style="left:304px;top:354px;width:47px;height:18px;background:#fff;border-right:1px solid #a6a6a6;border-bottom:1px solid #a6a6a6;"></div>
<div class="t" style="left:303px;top:354px;height:18px;line-height:18px;width:41px;text-align:right;color:#000;font-size:10.5px;letter-spacing:-0.6px;">正常</div>
<div style="left:351px;top:354px;width:69px;height:18px;background:#fff;border-right:1px solid #a6a6a6;border-bottom:1px solid #a6a6a6;"></div>
<div class="t" style="left:353px;top:353px;height:15px;line-height:15px;font-family:'Liberation Mono', monospace;font-size:11px;transform:scaleX(0.767);transform-origin:0 50%;color:#000;">2014/8/7</div>
<div style="left:420px;top:354px;width:55px;height:18px;background:#fff;border-right:1px solid #a6a6a6;border-bottom:1px solid #a6a6a6;"></div>
<div style="left:475px;top:354px;width:57px;height:18px;background:#fff;border-right:1px solid #a6a6a6;border-bottom:1px solid #a6a6a6;"></div>
<div class="t" style="left:477px;top:354px;height:18px;line-height:18px;color:#000;font-size:10.5px;letter-spacing:-0.6px;">背胶</div>
<div style="left:532px;top:354px;width:43px;height:18px;background:#ffff00;border-right:1px solid #a6a6a6;border-bottom:1px solid #a6a6a6;"></div>
<div style="left:548px;top:357px;width:10px;height:10px;background:#fff;border:1px solid #d4d4d4;"></div>
<svg style="left:549px;top:358px" width="8" height="8" viewBox="0 0 8 8"><path d="M1 3.8 L3 6 L7 1.5" stroke="#000" stroke-width="1.7" fill="none"/></svg>
<div style="left:575px;top:354px;width:43px;height:18px;background:#ffff00;border-right:1px solid #a6a6a6;border-bottom:1px solid #a6a6a6;"></div>
<div style="left:591px;top:357px;width:10px;height:10px;background:#fff;border:1px solid #d4d4d4;"></div>
<svg style="left:592px;top:358px" width="8" height="8" viewBox="0 0 8 8"><path d="M1 3.8 L3 6 L7 1.5" stroke="#000" stroke-width="1.7" fill="none"/></svg>
<div style="left:618px;top:354px;width:42px;height:18px;background:#fff;border-right:1px solid #a6a6a6;border-bottom:1px solid #a6a6a6;"></div>
<div style="left:633px;top:357px;width:10px;height:10px;background:#fff;border:1px solid #ececec;border-top-color:#b4b4b4;border-left-color:#b4b4b4;"></div>
<div style="left:660px;top:354px;width:43px;height:18px;background:#ffff00;border-right:1px solid #a6a6a6;border-bottom:1px solid #a6a6a6;"></div>
<div style="left:676px;top:357px;width:10px;height:10px;background:#fff;border:1px solid #d4d4d4;"></div>
<svg style="left:677px;top:358px" width="8" height="8" viewBox="0 0 8 8"><path d="M1 3.8 L3 6 L7 1.5" stroke="#000" stroke-width="1.7" fill="none"/></svg>
<div style="left:703px;top:354px;width:54px;height:18px;background:#fff;border-right:1px solid #a6a6a6;border-bottom:1px solid #a6a6a6;"></div>
<div style="left:757px;top:354px;width:50px;height:18px;background:#fff;border-right:1px solid #a6a6a6;border-bottom:1px solid #a6a6a6;"></div>
<div style="left:807px;top:354px;width:60px;height:18px;background:#fff;border-right:1px solid #a6a6a6;border-bottom:1px solid #a6a6a6;"></div>
<div style="left:831px;top:357px;width:10px;height:10px;background:#fff;border:1px solid #ececec;border-top-color:#b4b4b4;border-left-color:#b4b4b4;"></div>
<div style="left:914px;top:354px;width:68px;height:18px;background:#fff;border-right:1px solid #a6a6a6;border-bottom:1px solid #a6a6a6;"></div>
<div style="left:982px;top:354px;width:49px;height:18px;background:#fff;border-right:1px solid #a6a6a6;border-bottom:1px solid #a6a6a6;"></div>
<div class="t" style="left:983px;top:354px;height:18px;line-height:18px;color:#000;font-size:10.5px;letter-spacing:-0.6px;">超级用户</div>
<div style="left:1031px;top:354px;width:103px;height:18px;background:#fff;border-right:1px solid #a6a6a6;border-bottom:1px solid #a6a6a6;"></div>
<div class="t" style="left:1032px;top:354px;height:18px;line-height:18px;color:#000;font-size:10.5px;letter-spacing:-0.6px;">未指定</div>
<div style="left:1134px;top:354px;width:102px;height:18px;background:#fff;border-right:1px solid #a6a6a6;border-bottom:1px solid #a6a6a6;"></div>
<div class="t" style="left:1136px;top:354px;height:16px;line-height:16px;font-family:'Liberation Mono', monospace;font-size:11px;transform:scaleX(0.767);transform-origin:0 50%;">2014-08-07</div>
<div style="left:1px;top:372px;width:21px;height:19px;background:#f0f0f0;border-right:1px solid #a6a6a6;border-bottom:1px solid #a6a6a6;"></div>
<div style="left:21px;top:372px;width:1px;height:19px;background:#c6c6c6;"></div>
<div style="left:1px;top:372px;width:1px;height:19px;background:#fff;"></div>
<div class="t" style="left:5.439999999999998px;top:373px;height:18px;line-height:18px;font-family:'Liberation Mono', monospace;font-size:11px;transform:scaleX(0.767);transform-origin:0 50%;color:#222;">19</div>
<div style="left:304px;top:372px;width:47px;height:19px;background:#f1faff;border-right:1px solid #a6a6a6;border-bottom:1px solid #a6a6a6;"></div>
<div class="t" style="left:303px;top:372px;height:19px;line-height:19px;width:41px;text-align:right;color:#000;font-size:10.5px;letter-spacing:-0.6px;">正常</div>
<div style="left:351px;top:372px;width:69px;height:19px;background:#f1faff;border-right:1px solid #a6a6a6;border-bottom:1px solid #a6a6a6;"></div>
<div class="t" style="left:353px;top:371px;height:16px;line-height:16px;font-family:'Liberation Mono', monospace;font-size:11px;transform:scaleX(0.767);transform-origin:0 50%;color:#000;">2014/8/7</div>
<div style="left:420px;top:372px;width:55px;height:19px;background:#f1faff;border-right:1px solid #a6a6a6;border-bottom:1px solid #a6a6a6;"></div>
<div style="left:475px;top:372px;width:57px;height:19px;background:#f1faff;border-right:1px solid #a6a6a6;border-bottom:1px solid #a6a6a6;"></div>
<div class="t" style="left:477px;top:372px;height:19px;line-height:19px;color:#000;font-size:10.5px;letter-spacing:-0.6px;">背胶</div>
<div style="left:532px;top:372px;width:43px;height:19px;background:#ffff00;border-right:1px solid #a6a6a6;border-bottom:1px solid #a6a6a6;"></div>
<div style="left:548px;top:376px;width:10px;height:10px;background:#fff;border:1px solid #d4d4d4;"></div>
<svg style="left:549px;top:377px" width="8" height="8" viewBox="0 0 8 8"><path d="M1 3.8 L3 6 L7 1.5" stroke="#000" stroke-width="1.7" fill="none"/></svg>
<div style="left:575px;top:372px;width:43px;height:19px;background:#ffff00;border-right:1px solid #a6a6a6;border-bottom:1px solid #a6a6a6;"></div>
<div style="left:591px;top:376px;width:10px;height:10px;background:#fff;border:1px solid #d4d4d4;"></div>
<svg style="left:592px;top:377px" width="8" height="8" viewBox="0 0 8 8"><path d="M1 3.8 L3 6 L7 1.5" stroke="#000" stroke-width="1.7" fill="none"/></svg>
<div style="left:618px;top:372px;width:42px;height:19px;background:#f1faff;border-right:1px solid #a6a6a6;border-bottom:1px solid #a6a6a6;"></div>
<div style="left:633px;top:376px;width:10px;height:10px;background:#fff;border:1px solid #ececec;border-top-color:#b4b4b4;border-left-color:#b4b4b4;"></div>
<div style="left:660px;top:372px;width:43px;height:19px;background:#ffff00;border-right:1px solid #a6a6a6;border-bottom:1px solid #a6a6a6;"></div>
<div style="left:676px;top:376px;width:10px;height:10px;background:#fff;border:1px solid #d4d4d4;"></div>
<svg style="left:677px;top:377px" width="8" height="8" viewBox="0 0 8 8"><path d="M1 3.8 L3 6 L7 1.5" stroke="#000" stroke-width="1.7" fill="none"/></svg>
<div style="left:703px;top:372px;width:54px;height:19px;background:#f1faff;border-right:1px solid #a6a6a6;border-bottom:1px solid #a6a6a6;"></div>
<div style="left:757px;top:372px;width:50px;height:19px;background:#f1faff;border-right:1px solid #a6a6a6;border-bottom:1px solid #a6a6a6;"></div>
<div style="left:807px;top:372px;width:60px;height:19px;background:#f1faff;border-right:1px solid #a6a6a6;border-bottom:1px solid #a6a6a6;"></div>
<div style="left:831px;top:376px;width:10px;height:10px;background:#fff;border:1px solid #ececec;border-top-color:#b4b4b4;border-left-color:#b4b4b4;"></div>
<div style="left:914px;top:372px;width:68px;height:19px;background:#f1faff;border-right:1px solid #a6a6a6;border-bottom:1px solid #a6a6a6;"></div>
<div style="left:982px;top:372px;width:49px;height:19px;background:#f1faff;border-right:1px solid #a6a6a6;border-bottom:1px solid #a6a6a6;"></div>
<div class="t" style="left:983px;top:372px;height:19px;line-height:19px;color:#000;font-size:10.5px;letter-spacing:-0.6px;">超级用户</div>
<div style="left:1031px;top:372px;width:103px;height:19px;background:#f1faff;border-right:1px solid #a6a6a6;border-bottom:1px solid #a6a6a6;"></div>
<div class="t" style="left:1032px;top:372px;height:19px;line-height:19px;color:#000;font-size:10.5px;letter-spacing:-0.6px;">未指定</div>
<div style="left:1134px;top:372px;width:102px;height:19px;background:#f1faff;border-right:1px solid #a6a6a6;border-bottom:1px solid #a6a6a6;"></div>
<div class="t" style="left:1136px;top:372px;height:17px;line-height:17px;font-family:'Liberation Mono', monospace;font-size:11px;transform:scaleX(0.767);transform-origin:0 50%;">2014-08-07</div>
<div style="left:1px;top:391px;width:21px;height:19px;background:#f0f0f0;border-right:1px solid #a6a6a6;border-bottom:1px solid #a6a6a6;"></div>
<div style="left:21px;top:391px;width:1px;height:19px;background:#c6c6c6;"></div>
<div style="left:1px;top:391px;width:1px;height:19px;background:#fff;"></div>
<div class="t" style="left:5.439999999999998px;top:392px;height:18px;line-height:18px;font-family:'Liberation Mono', monospace;font-size:11px;transform:scaleX(0.767);transform-origin:0 50%;color:#222;">20</div>
<div style="left:304px;top:391px;width:47px;height:19px;background:#fff;border-right:1px solid #a6a6a6;border-bottom:1px solid #a6a6a6;"></div>
<div class="t" style="left:303px;top:391px;height:19px;line-height:19px;width:41px;text-align:right;color:#000;font-size:10.5px;letter-spacing:-0.6px;">正常</div>
<div style="left:351px;top:391px;width:69px;height:19px;background:#fff;border-right:1px solid #a6a6a6;border-bottom:1px solid #a6a6a6;"></div>
<div class="t" style="left:353px;top:390px;height:16px;line-height:16px;font-family:'Liberation Mono', monospace;font-size:11px;transform:scaleX(0.767);transform-origin:0 50%;color:#000;">2014/8/7</div>
<div style="left:420px;top:391px;width:55px;height:19px;background:#fff;border-right:1px solid #a6a6a6;border-bottom:1px solid #a6a6a6;"></div>
<div style="left:475px;top:391px;width:57px;height:19px;background:#fff;border-right:1px solid #a6a6a6;border-bottom:1px solid #a6a6a6;"></div>
<div class="t" style="left:477px;top:391px;height:19px;line-height:19px;color:#000;font-size:10.5px;letter-spacing:-0.6px;">背胶</div>
<div style="left:532px;top:391px;width:43px;height:19px;background:#ffff00;border-right:1px solid #a6a6a6;border-bottom:1px solid #a6a6a6;"></div>
<div style="left:548px;top:395px;width:10px;height:10px;background:#fff;border:1px solid #d4d4d4;"></div>
<svg style="left:549px;top:396px" width="8" height="8" viewBox="0 0 8 8"><path d="M1 3.8 L3 6 L7 1.5" stroke="#000" stroke-width="1.7" fill="none"/></svg>
<div style="left:575px;top:391px;width:43px;height:19px;background:#ffff00;border-right:1px solid #a6a6a6;border-bottom:1px solid #a6a6a6;"></div>
<div style="left:591px;top:395px;width:10px;height:10px;background:#fff;border:1px solid #d4d4d4;"></div>
<svg style="left:592px;top:396px" width="8" height="8" viewBox="0 0 8 8"><path d="M1 3.8 L3 6 L7 1.5" stroke="#000" stroke-width="1.7" fill="none"/></svg>
<div style="left:618px;top:391px;width:42px;height:19px;background:#fff;border-right:1px solid #a6a6a6;border-bottom:1px solid #a6a6a6;"></div>
<div style="left:633px;top:395px;width:10px;height:10px;background:#fff;border:1px solid #ececec;border-top-color:#b4b4b4;border-left-color:#b4b4b4;"></div>
<div style="left:660px;top:391px;width:43px;height:19px;background:#ffff00;border-right:1px solid #a6a6a6;border-bottom:1px solid #a6a6a6;"></div>
<div style="left:676px;top:395px;width:10px;height:10px;background:#fff;border:1px solid #d4d4d4;"></div>
<svg style="left:677px;top:396px" width="8" height="8" viewBox="0 0 8 8"><path d="M1 3.8 L3 6 L7 1.5" stroke="#000" stroke-width="1.7" fill="none"/></svg>
<div style="left:703px;top:391px;width:54px;height:19px;background:#fff;border-right:1px solid #a6a6a6;border-bottom:1px solid #a6a6a6;"></div>
<div style="left:757px;top:391px;width:50px;height:19px;background:#fff;border-right:1px solid #a6a6a6;border-bottom:1px solid #a6a6a6;"></div>
<div style="left:807px;top:391px;width:60px;height:19px;background:#fff;border-right:1px solid #a6a6a6;border-bottom:1px solid #a6a6a6;"></div>
<div style="left:831px;top:395px;width:10px;height:10px;background:#fff;border:1px solid #ececec;border-top-color:#b4b4b4;border-left-color:#b4b4b4;"></div>
<div style="left:914px;top:391px;width:68px;height:19px;background:#fff;border-right:1px solid #a6a6a6;border-bottom:1px solid #a6a6a6;"></div>
<div style="left:982px;top:391px;width:49px;height:19px;background:#fff;border-right:1px solid #a6a6a6;border-bottom:1px solid #a6a6a6;"></div>
<div class="t" style="left:983px;top:391px;height:19px;line-height:19px;color:#000;font-size:10.5px;letter-spacing:-0.6px;">超级用户</div>
<div style="left:1031px;top:391px;width:103px;height:19px;background:#fff;border-right:1px solid #a6a6a6;border-bottom:1px solid #a6a6a6;"></div>
<div class="t" style="left:1032px;top:391px;height:19px;line-height:19px;color:#000;font-size:10.5px;letter-spacing:-0.6px;">未指定</div>
<div style="left:1134px;top:391px;width:102px;height:19px;background:#fff;border-right:1px solid #a6a6a6;border-bottom:1px solid #a6a6a6;"></div>
<div class="t" style="left:1136px;top:391px;height:17px;line-height:17px;font-family:'Liberation Mono', monospace;font-size:11px;transform:scaleX(0.767);transform-origin:0 50%;">2014-08-07</div>
<div style="left:1px;top:410px;width:21px;height:19px;background:#f0f0f0;border-right:1px solid #a6a6a6;border-bottom:1px solid #a6a6a6;"></div>
<div style="left:21px;top:410px;width:1px;height:19px;background:#c6c6c6;"></div>
<div style="left:1px;top:410px;width:1px;height:19px;background:#fff;"></div>
<div class="t" style="left:5.439999999999998px;top:411px;height:18px;line-height:18px;font-family:'Liberation Mono', monospace;font-size:11px;transform:scaleX(0.767);transform-origin:0 50%;color:#222;">21</div>
<div style="left:304px;top:410px;width:47px;height:19px;background:#f1faff;border-right:1px solid #a6a6a6;border-bottom:1px solid #a6a6a6;"></div>
<div class="t" style="left:303px;top:410px;height:19px;line-height:19px;width:41px;text-align:right;color:#000;font-size:10.5px;letter-spacing:-0.6px;">正常</div>
<div style="left:351px;top:410px;width:69px;height:19px;background:#f1faff;border-right:1px solid #a6a6a6;border-bottom:1px solid #a6a6a6;"></div>
<div class="t" style="left:353px;top:409px;height:16px;line-height:16px;font-family:'Liberation Mono', monospace;font-size:11px;transform:scaleX(0.767);transform-origin:0 50%;color:#000;">2014/8/7</div>
<div style="left:420px;top:410px;width:55px;height:19px;background:#f1faff;border-right:1px solid #a6a6a6;border-bottom:1px solid #a6a6a6;"></div>
<div style="left:475px;top:410px;width:57px;height:19px;background:#f1faff;border-right:1px solid #a6a6a6;border-bottom:1px solid #a6a6a6;"></div>
<div class="t" style="left:477px;top:410px;height:19px;line-height:19px;color:#000;font-size:10.5px;letter-spacing:-0.6px;">车身贴</div>
<div style="left:532px;top:410px;width:43px;height:19px;background:#ffff00;border-right:1px solid #a6a6a6;border-bottom:1px solid #a6a6a6;"></div>
<div style="left:548px;top:414px;width:10px;height:10px;background:#fff;border:1px solid #d4d4d4;"></div>
<svg style="left:549px;top:415px" width="8" height="8" viewBox="0 0 8 8"><path d="M1 3.8 L3 6 L7 1.5" stroke="#000" stroke-width="1.7" fill="none"/></svg>
<div style="left:575px;top:410px;width:43px;height:19px;background:#ffff00;border-right:1px solid #a6a6a6;border-bottom:1px solid #a6a6a6;"></div>
<div style="left:591px;top:414px;width:10px;height:10px;background:#fff;border:1px solid #d4d4d4;"></div>
<svg style="left:592px;top:415px" width="8" height="8" viewBox="0 0 8 8"><path d="M1 3.8 L3 6 L7 1.5" stroke="#000" stroke-width="1.7" fill="none"/></svg>
<div style="left:618px;top:410px;width:42px;height:19px;background:#f1faff;border-right:1px solid #a6a6a6;border-bottom:1px solid #a6a6a6;"></div>
<div style="left:633px;top:414px;width:10px;height:10px;background:#fff;border:1px solid #ececec;border-top-color:#b4b4b4;border-left-color:#b4b4b4;"></div>
<div style="left:660px;top:410px;width:43px;height:19px;background:#ffff00;border-right:1px solid #a6a6a6;border-bottom:1px solid #a6a6a6;"></div>
<div style="left:676px;top:414px;width:10px;height:10px;background:#fff;border:1px solid #d4d4d4;"></div>
<svg style="left:677px;top:415px" width="8" height="8" viewBox="0 0 8 8"><path d="M1 3.8 L3 6 L7 1.5" stroke="#000" stroke-width="1.7" fill="none"/></svg>
<div style="left:703px;top:410px;width:54px;height:19px;background:#f1faff;border-right:1px solid #a6a6a6;border-bottom:1px solid #a6a6a6;"></div>
<div style="left:757px;top:410px;width:50px;height:19px;background:#f1faff;border-right:1px solid #a6a6a6;border-bottom:1px solid #a6a6a6;"></div>
<div style="left:807px;top:410px;width:60px;height:19px;background:#f1faff;border-right:1px solid #a6a6a6;border-bottom:1px solid #a6a6a6;"></div>
<div style="left:831px;top:414px;width:10px;height:10px;background:#fff;border:1px solid #ececec;border-top-color:#b4b4b4;border-left-color:#b4b4b4;"></div>
<div style="left:914px;top:410px;width:68px;height:19px;background:#f1faff;border-right:1px solid #a6a6a6;border-bottom:1px solid #a6a6a6;"></div>
<div style="left:982px;top:410px;width:49px;height:19px;background:#f1faff;border-right:1px solid #a6a6a6;border-bottom:1px solid #a6a6a6;"></div>
<div class="t" style="left:983px;top:410px;height:19px;line-height:19px;color:#000;font-size:10.5px;letter-spacing:-0.6px;">超级用户</div>
<div style="left:1031px;top:410px;width:103px;height:19px;background:#f1faff;border-right:1px solid #a6a6a6;border-bottom:1px solid #a6a6a6;"></div>
<div class="t" style="left:1032px;top:410px;height:19px;line-height:19px;color:#000;font-size:10.5px;letter-spacing:-0.6px;">未指定</div>
<div style="left:1134px;top:410px;width:102px;height:19px;background:#f1faff;border-right:1px solid #a6a6a6;border-bottom:1px solid #a6a6a6;"></div>
<div class="t" style="left:1136px;top:410px;height:17px;line-height:17px;font-family:'Liberation Mono', monospace;font-size:11px;transform:scaleX(0.767);transform-origin:0 50%;">2014-08-07</div>
<div style="left:1px;top:429px;width:21px;height:18px;background:#f0f0f0;border-right:1px solid #a6a6a6;border-bottom:1px solid #a6a6a6;"></div>
<div style="left:21px;top:429px;width:1px;height:18px;background:#c6c6c6;"></div>
<div style="left:1px;top:429px;width:1px;height:18px;background:#fff;"></div>
<div class="t" style="left:5.439999999999998px;top:430px;height:17px;line-height:17px;font-family:'Liberation Mono', monospace;font-size:11px;transform:scaleX(0.767);transform-origin:0 50%;color:#222;">22</div>
<div style="left:304px;top:429px;width:47px;height:18px;background:#fff;border-right:1px solid #a6a6a6;border-bottom:1px solid #a6a6a6;"></div>
<div class="t" style="left:303px;top:429px;height:18px;line-height:18px;width:41px;text-align:right;color:#000;font-size:10.5px;letter-spacing:-0.6px;">正常</div>
<div style="left:351px;top:429px;width:69px;height:18px;background:#fff;border-right:1px solid #a6a6a6;border-bottom:1px solid #a6a6a6;"></div>
<div class="t" style="left:353px;top:428px;height:15px;line-height:15px;font-family:'Liberation Mono', monospace;font-size:11px;transform:scaleX(0.767);transform-origin:0 50%;color:#000;">2014/8/7</div>
<div style="left:420px;top:429px;width:55px;height:18px;background:#fff;border-right:1px solid #a6a6a6;border-bottom:1px solid #a6a6a6;"></div>
<div style="left:475px;top:429px;width:57px;height:18px;background:#fff;border-right:1px solid #a6a6a6;border-bottom:1px solid #a6a6a6;"></div>
<div class="t" style="left:477px;top:429px;height:18px;line-height:18px;color:#000;font-size:10.5px;letter-spacing:-0.6px;">灯布</div>
<div style="left:532px;top:429px;width:43px;height:18px;background:#ffff00;border-right:1px solid #a6a6a6;border-bottom:1px solid #a6a6a6;"></div>
<div style="left:548px;top:433px;width:10px;height:10px;background:#fff;border:1px solid #d4d4d4;"></div>
<svg style="left:549px;top:434px" width="8" height="8" viewBox="0 0 8 8"><path d="M1 3.8 L3 6 L7 1.5" stroke="#000" stroke-width="1.7" fill="none"/></svg>
<div style="left:575px;top:429px;width:43px;height:18px;background:#ffff00;border-right:1px solid #a6a6a6;border-bottom:1px solid #a6a6a6;"></div>
<div style="left:591px;top:433px;width:10px;height:10px;background:#fff;border:1px solid #d4d4d4;"></div>
<svg style="left:592px;top:434px" width="8" height="8" viewBox="0 0 8 8"><path d="M1 3.8 L3 6 L7 1.5" stroke="#000" stroke-width="1.7" fill="none"/></svg>
<div style="left:618px;top:429px;width:42px;height:18px;background:#fff;border-right:1px solid #a6a6a6;border-bottom:1px solid #a6a6a6;"></div>
<div style="left:633px;top:433px;width:10px;height:10px;background:#fff;border:1px solid #ececec;border-top-color:#b4b4b4;border-left-color:#b4b4b4;"></div>
<div style="left:660px;top:429px;width:43px;height:18px;background:#ffff00;border-right:1px solid #a6a6a6;border-bottom:1px solid #a6a6a6;"></div>
<div style="left:676px;top:433px;width:10px;height:10px;background:#fff;border:1px solid #d4d4d4;"></div>
<svg style="left:677px;top:434px" width="8" height="8" viewBox="0 0 8 8"><path d="M1 3.8 L3 6 L7 1.5" stroke="#000" stroke-width="1.7" fill="none"/></svg>
<div style="left:703px;top:429px;width:54px;height:18px;background:#fff;border-right:1px solid #a6a6a6;border-bottom:1px solid #a6a6a6;"></div>
<div style="left:757px;top:429px;width:50px;height:18px;background:#fff;border-right:1px solid #a6a6a6;border-bottom:1px solid #a6a6a6;"></div>
<div style="left:807px;top:429px;width:60px;height:18px;background:#fff;border-right:1px solid #a6a6a6;border-bottom:1px solid #a6a6a6;"></div>
<div style="left:831px;top:433px;width:10px;height:10px;background:#fff;border:1px solid #ececec;border-top-color:#b4b4b4;border-left-color:#b4b4b4;"></div>
<div style="left:914px;top:429px;width:68px;height:18px;background:#fff;border-right:1px solid #a6a6a6;border-bottom:1px solid #a6a6a6;"></div>
<div style="left:982px;top:429px;width:49px;height:18px;background:#fff;border-right:1px solid #a6a6a6;border-bottom:1px solid #a6a6a6;"></div>
<div class="t" style="left:983px;top:429px;height:18px;line-height:18px;color:#000;font-size:10.5px;letter-spacing:-0.6px;">超级用户</div>
<div style="left:1031px;top:429px;width:103px;height:18px;background:#fff;border-right:1px solid #a6a6a6;border-bottom:1px solid #a6a6a6;"></div>
<div class="t" style="left:1032px;top:429px;height:18px;line-height:18px;color:#000;font-size:10.5px;letter-spacing:-0.6px;">未指定</div>
<div style="left:1134px;top:429px;width:102px;height:18px;background:#fff;border-right:1px solid #a6a6a6;border-bottom:1px solid #a6a6a6;"></div>
<div class="t" style="left:1136px;top:429px;height:16px;line-height:16px;font-family:'Liberation Mono', monospace;font-size:11px;transform:scaleX(0.767);transform-origin:0 50%;">2014-08-07</div>
<div style="left:1px;top:447px;width:21px;height:17px;background:#f0f0f0;border-right:1px solid #a6a6a6;border-bottom:1px solid #a6a6a6;"></div>
<div style="left:21px;top:447px;width:1px;height:17px;background:#c6c6c6;"></div>
<div style="left:1px;top:447px;width:1px;height:17px;background:#fff;"></div>
<div class="t" style="left:5.439999999999998px;top:448px;height:16px;line-height:16px;font-family:'Liberation Mono', monospace;font-size:11px;transform:scaleX(0.767);transform-origin:0 50%;color:#222;">23</div>
<div style="left:304px;top:447px;width:47px;height:17px;background:#f1faff;border-right:1px solid #a6a6a6;border-bottom:1px solid #a6a6a6;"></div>
<div class="t" style="left:303px;top:447px;height:17px;line-height:17px;width:41px;text-align:right;color:#000;font-size:10.5px;letter-spacing:-0.6px;">正常</div>
<div style="left:351px;top:447px;width:69px;height:17px;background:#f1faff;border-right:1px solid #a6a6a6;border-bottom:1px solid #a6a6a6;"></div>
<div class="t" style="left:353px;top:446px;height:14px;line-height:14px;font-family:'Liberation Mono', monospace;font-size:11px;transform:scaleX(0.767);transform-origin:0 50%;color:#000;">2014/8/7</div>
<div style="left:420px;top:447px;width:55px;height:17px;background:#f1faff;border-right:1px solid #a6a6a6;border-bottom:1px solid #a6a6a6;"></div>
<div style="left:475px;top:447px;width:57px;height:17px;background:#f1faff;border-right:1px solid #a6a6a6;border-bottom:1px solid #a6a6a6;"></div>
<div class="t" style="left:477px;top:447px;height:17px;line-height:17px;color:#000;font-size:10.5px;letter-spacing:-0.6px;">写真布</div>
<div style="left:532px;top:447px;width:43px;height:17px;background:#ffff00;border-right:1px solid #a6a6a6;border-bottom:1px solid #a6a6a6;"></div>
<div style="left:548px;top:450px;width:10px;height:10px;background:#fff;border:1px solid #d4d4d4;"></div>
<svg style="left:549px;top:451px" width="8" height="8" viewBox="0 0 8 8"><path d="M1 3.8 L3 6 L7 1.5" stroke="#000" stroke-width="1.7" fill="none"/></svg>
<div style="left:575px;top:447px;width:43px;height:17px;background:#ffff00;border-right:1px solid #a6a6a6;border-bottom:1px solid #a6a6a6;"></div>
<div style="left:591px;top:450px;width:10px;height:10px;background:#fff;border:1px solid #d4d4d4;"></div>
<svg style="left:592px;top:451px" width="8" height="8" viewBox="0 0 8 8"><path d="M1 3.8 L3 6 L7 1.5" stroke="#000" stroke-width="1.7" fill="none"/></svg>
<div style="left:618px;top:447px;width:42px;height:17px;background:#f1faff;border-right:1px solid #a6a6a6;border-bottom:1px solid #a6a6a6;"></div>
<div style="left:633px;top:450px;width:10px;height:10px;background:#fff;border:1px solid #ececec;border-top-color:#b4b4b4;border-left-color:#b4b4b4;"></div>
<div style="left:660px;top:447px;width:43px;height:17px;background:#ffff00;border-right:1px solid #a6a6a6;border-bottom:1px solid #a6a6a6;"></div>
<div style="left:676px;top:450px;width:10px;height:10px;background:#fff;border:1px solid #d4d4d4;"></div>
<svg style="left:677px;top:451px" width="8" height="8" viewBox="0 0 8 8"><path d="M1 3.8 L3 6 L7 1.5" stroke="#000" stroke-width="1.7" fill="none"/></svg>
<div style="left:703px;top:447px;width:54px;height:17px;background:#f1faff;border-right:1px solid #a6a6a6;border-bottom:1px solid #a6a6a6;"></div>
<div style="left:757px;top:447px;width:50px;height:17px;background:#f1faff;border-right:1px solid #a6a6a6;border-bottom:1px solid #a6a6a6;"></div>
<div style="left:807px;top:447px;width:60px;height:17px;background:#f1faff;border-right:1px solid #a6a6a6;border-bottom:1px solid #a6a6a6;"></div>
<div style="left:831px;top:450px;width:10px;height:10px;background:#fff;border:1px solid #ececec;border-top-color:#b4b4b4;border-left-color:#b4b4b4;"></div>
<div style="left:914px;top:447px;width:68px;height:17px;background:#f1faff;border-right:1px solid #a6a6a6;border-bottom:1px solid #a6a6a6;"></div>
<div style="left:982px;top:447px;width:49px;height:17px;background:#f1faff;border-right:1px solid #a6a6a6;border-bottom:1px solid #a6a6a6;"></div>
<div class="t" style="left:983px;top:447px;height:17px;line-height:17px;color:#000;font-size:10.5px;letter-spacing:-0.6px;">超级用户</div>
<div style="left:1031px;top:447px;width:103px;height:17px;background:#f1faff;border-right:1px solid #a6a6a6;border-bottom:1px solid #a6a6a6;"></div>
<div class="t" style="left:1032px;top:447px;height:17px;line-height:17px;color:#000;font-size:10.5px;letter-spacing:-0.6px;">未指定</div>
<div style="left:1134px;top:447px;width:102px;height:17px;background:#f1faff;border-right:1px solid #a6a6a6;border-bottom:1px solid #a6a6a6;"></div>
<div class="t" style="left:1136px;top:447px;height:15px;line-height:15px;font-family:'Liberation Mono', monospace;font-size:11px;transform:scaleX(0.767);transform-origin:0 50%;">2014-08-07</div>
<div style="left:22px;top:34px;width:61px;height:244px;background:#fff;border-right:1px solid #a6a6a6;border-bottom:1px solid #a6a6a6;"></div>
<div class="t" style="left:23px;top:35px;height:244px;line-height:244px;font-family:'Liberation Mono', monospace;font-size:11px;transform:scaleX(0.767);transform-origin:0 50%;">2017/11/8</div>
<div style="left:22px;top:278px;width:61px;height:19px;background:#fff;border-right:1px solid #a6a6a6;border-bottom:1px solid #a6a6a6;"></div>
<div class="t" style="left:23px;top:279px;height:19px;line-height:19px;font-family:'Liberation Mono', monospace;font-size:11px;transform:scaleX(0.767);transform-origin:0 50%;">2017/11/3</div>
<div style="left:22px;top:297px;width:61px;height:19px;background:#fff;border-right:1px solid #a6a6a6;border-bottom:1px solid #a6a6a6;"></div>
<div class="t" style="left:23px;top:298px;height:19px;line-height:19px;font-family:'Liberation Mono', monospace;font-size:11px;transform:scaleX(0.767);transform-origin:0 50%;">2017/11/2</div>
<div style="left:22px;top:316px;width:61px;height:19px;background:#fff;border-right:1px solid #a6a6a6;border-bottom:1px solid #a6a6a6;"></div>
<div class="t" style="left:23px;top:317px;height:19px;line-height:19px;font-family:'Liberation Mono', monospace;font-size:11px;transform:scaleX(0.767);transform-origin:0 50%;">2017/11/1</div>
<div style="left:22px;top:335px;width:61px;height:129px;background:#fff;border-right:1px solid #a6a6a6;border-bottom:1px solid #a6a6a6;"></div>
<div class="t" style="left:23px;top:336px;height:129px;line-height:129px;font-family:'Liberation Mono', monospace;font-size:11px;transform:scaleX(0.767);transform-origin:0 50%;">2014/8/7</div>
<div style="left:83px;top:34px;width:86px;height:19px;background:#fff;border-right:1px solid #a6a6a6;border-bottom:1px solid #a6a6a6;"></div>
<div class="t" style="left:87.55px;top:34px;height:19px;line-height:19px;font-family:'Liberation Mono', monospace;font-size:11px;transform:scaleX(0.767);transform-origin:0 50%;color:#0000ee;text-decoration:underline;">NO.201711080012</div>
<div style="left:169px;top:34px;width:69px;height:19px;background:#f1faff;border-right:1px solid #a6a6a6;border-bottom:1px solid #a6a6a6;"></div>
<div class="t" style="left:171px;top:34px;height:19px;line-height:19px;color:#000;font-size:10.5px;letter-spacing:-0.6px;">客户A</div>
<div style="left:238px;top:34px;width:66px;height:19px;background:#fff;border-right:1px solid #a6a6a6;border-bottom:1px solid #a6a6a6;"></div>
<div class="t" style="left:237px;top:34px;height:19px;line-height:19px;width:67px;text-align:center;color:#0c8a0c;font-size:10.5px;letter-spacing:0px;text-decoration:underline;">[0个附件]</div>
<div style="left:867px;top:34px;width:47px;height:19px;background:#fff;border-right:1px solid #a6a6a6;border-bottom:1px solid #a6a6a6;"></div>
<div style="left:885px;top:38px;width:10px;height:10px;background:#fff;border:1px solid #ececec;border-top-color:#b4b4b4;border-left-color:#b4b4b4;"></div>
<div style="left:83px;top:53px;width:86px;height:19px;background:#fff;border-right:1px solid #a6a6a6;border-bottom:1px solid #a6a6a6;"></div>
<div class="t" style="left:87.55px;top:53px;height:19px;line-height:19px;font-family:'Liberation Mono', monospace;font-size:11px;transform:scaleX(0.767);transform-origin:0 50%;color:#0000ee;text-decoration:underline;">NO.201711080011</div>
<div style="left:169px;top:53px;width:69px;height:19px;background:#fff;border-right:1px solid #a6a6a6;border-bottom:1px solid #a6a6a6;"></div>
<div class="t" style="left:171px;top:53px;height:19px;line-height:19px;color:#000;font-size:10.5px;letter-spacing:-0.6px;">客户A</div>
<div style="left:238px;top:53px;width:66px;height:19px;background:#fff;border-right:1px solid #a6a6a6;border-bottom:1px solid #a6a6a6;"></div>
<div class="t" style="left:237px;top:53px;height:19px;line-height:19px;width:67px;text-align:center;color:#0c8a0c;font-size:10.5px;letter-spacing:0px;text-decoration:underline;">[0个附件]</div>
<div style="left:867px;top:53px;width:47px;height:19px;background:#fff;border-right:1px solid #a6a6a6;border-bottom:1px solid #a6a6a6;"></div>
<div style="left:885px;top:57px;width:10px;height:10px;background:#fff;border:1px solid #ececec;border-top-color:#b4b4b4;border-left-color:#b4b4b4;"></div>
<div style="left:83px;top:72px;width:86px;height:18px;background:#fff;border-right:1px solid #a6a6a6;border-bottom:1px solid #a6a6a6;"></div>
<div class="t" style="left:87.55px;top:72px;height:18px;line-height:18px;font-family:'Liberation Mono', monospace;font-size:11px;transform:scaleX(0.767);transform-origin:0 50%;color:#0000ee;text-decoration:underline;">NO.201711080010</div>
<div style="left:169px;top:72px;width:69px;height:18px;background:#f1faff;border-right:1px solid #a6a6a6;border-bottom:1px solid #a6a6a6;"></div>
<div class="t" style="left:171px;top:72px;height:18px;line-height:18px;color:#000;font-size:10.5px;letter-spacing:-0.6px;">客户A</div>
<div style="left:238px;top:72px;width:66px;height:18px;background:#fff;border-right:1px solid #a6a6a6;border-bottom:1px solid #a6a6a6;"></div>
<div class="t" style="left:237px;top:72px;height:18px;line-height:18px;width:67px;text-align:center;color:#0c8a0c;font-size:10.5px;letter-spacing:0px;text-decoration:underline;">[0个附件]</div>
<div style="left:867px;top:72px;width:47px;height:18px;background:#fff;border-right:1px solid #a6a6a6;border-bottom:1px solid #a6a6a6;"></div>
<div style="left:885px;top:75px;width:10px;height:10px;background:#fff;border:1px solid #ececec;border-top-color:#b4b4b4;border-left-color:#b4b4b4;"></div>
<div style="left:83px;top:90px;width:86px;height:19px;background:#fff;border-right:1px solid #a6a6a6;border-bottom:1px solid #a6a6a6;"></div>
<div class="t" style="left:87.55px;top:90px;height:19px;line-height:19px;font-family:'Liberation Mono', monospace;font-size:11px;transform:scaleX(0.767);transform-origin:0 50%;color:#0000ee;text-decoration:underline;">NO.201711080009</div>
<div style="left:169px;top:90px;width:69px;height:19px;background:#fff;border-right:1px solid #a6a6a6;border-bottom:1px solid #a6a6a6;"></div>
<div class="t" style="left:171px;top:90px;height:19px;line-height:19px;color:#000;font-size:10.5px;letter-spacing:-0.6px;">客户A</div>
<div style="left:238px;top:90px;width:66px;height:19px;background:#fff;border-right:1px solid #a6a6a6;border-bottom:1px solid #a6a6a6;"></div>
<div class="t" style="left:237px;top:90px;height:19px;line-height:19px;width:67px;text-align:center;color:#0c8a0c;font-size:10.5px;letter-spacing:0px;text-decoration:underline;">[1个附件]</div>
<div style="left:867px;top:90px;width:47px;height:19px;background:#fff;border-right:1px solid #a6a6a6;border-bottom:1px solid #a6a6a6;"></div>
<div style="left:885px;top:94px;width:10px;height:10px;background:#fff;border:1px solid #ececec;border-top-color:#b4b4b4;border-left-color:#b4b4b4;"></div>
<div style="left:83px;top:109px;width:86px;height:18px;background:#fff;border-right:1px solid #a6a6a6;border-bottom:1px solid #a6a6a6;"></div>
<div class="t" style="left:87.55px;top:109px;height:18px;line-height:18px;font-family:'Liberation Mono', monospace;font-size:11px;transform:scaleX(0.767);transform-origin:0 50%;color:#0000ee;text-decoration:underline;">NO.201711080008</div>
<div style="left:169px;top:109px;width:69px;height:18px;background:#f1faff;border-right:1px solid #a6a6a6;border-bottom:1px solid #a6a6a6;"></div>
<div class="t" style="left:171px;top:109px;height:18px;line-height:18px;color:#000;font-size:10.5px;letter-spacing:-0.6px;">客户A</div>
<div style="left:238px;top:109px;width:66px;height:18px;background:#fff;border-right:1px solid #a6a6a6;border-bottom:1px solid #a6a6a6;"></div>
<div class="t" style="left:237px;top:109px;height:18px;line-height:18px;width:67px;text-align:center;color:#0c8a0c;font-size:10.5px;letter-spacing:0px;text-decoration:underline;">[1个附件]</div>
<div style="left:867px;top:109px;width:47px;height:18px;background:#fff;border-right:1px solid #a6a6a6;border-bottom:1px solid #a6a6a6;"></div>
<div style="left:885px;top:113px;width:10px;height:10px;background:#fff;border:1px solid #ececec;border-top-color:#b4b4b4;border-left-color:#b4b4b4;"></div>
<div style="left:83px;top:127px;width:86px;height:20px;background:#fff;border-right:1px solid #a6a6a6;border-bottom:1px solid #a6a6a6;"></div>
<div class="t" style="left:87.55px;top:127px;height:20px;line-height:20px;font-family:'Liberation Mono', monospace;font-size:11px;transform:scaleX(0.767);transform-origin:0 50%;color:#0000ee;text-decoration:underline;">NO.201711080007</div>
<div style="left:169px;top:127px;width:69px;height:20px;background:#fff;border-right:1px solid #a6a6a6;border-bottom:1px solid #a6a6a6;"></div>
<div class="t" style="left:171px;top:127px;height:20px;line-height:20px;color:#000;font-size:10.5px;letter-spacing:-0.6px;">客户A</div>
<div style="left:238px;top:127px;width:66px;height:20px;background:#fff;border-right:1px solid #a6a6a6;border-bottom:1px solid #a6a6a6;"></div>
<div class="t" style="left:237px;top:127px;height:20px;line-height:20px;width:67px;text-align:center;color:#0c8a0c;font-size:10.5px;letter-spacing:0px;text-decoration:underline;">[1个附件]</div>
<div style="left:867px;top:127px;width:47px;height:20px;background:#fff;border-right:1px solid #a6a6a6;border-bottom:1px solid #a6a6a6;"></div>
<div style="left:885px;top:131px;width:10px;height:10px;background:#fff;border:1px solid #ececec;border-top-color:#b4b4b4;border-left-color:#b4b4b4;"></div>
<div style="left:83px;top:147px;width:86px;height:37px;background:#fff;border-right:1px solid #a6a6a6;border-bottom:1px solid #a6a6a6;"></div>
<div class="t" style="left:87.55px;top:147px;height:37px;line-height:37px;font-family:'Liberation Mono', monospace;font-size:11px;transform:scaleX(0.767);transform-origin:0 50%;color:#0000ee;text-decoration:underline;">NO.201711080006</div>
<div style="left:169px;top:147px;width:69px;height:37px;background:#f1faff;border-right:1px solid #a6a6a6;border-bottom:1px solid #a6a6a6;"></div>
<div class="t" style="left:171px;top:147px;height:37px;line-height:37px;color:#000;font-size:10.5px;letter-spacing:-0.6px;">客户A</div>
<div style="left:238px;top:147px;width:66px;height:37px;background:#fff;border-right:1px solid #a6a6a6;border-bottom:1px solid #a6a6a6;"></div>
<div class="t" style="left:237px;top:147px;height:37px;line-height:37px;width:67px;text-align:center;color:#0c8a0c;font-size:10.5px;letter-spacing:0px;text-decoration:underline;">[2个附件]</div>
<div style="left:867px;top:147px;width:47px;height:37px;background:#fff;border-right:1px solid #a6a6a6;border-bottom:1px solid #a6a6a6;"></div>
<div style="left:885px;top:160px;width:10px;height:10px;background:#fff;border:1px solid #ececec;border-top-color:#b4b4b4;border-left-color:#b4b4b4;"></div>
<div style="left:83px;top:184px;width:86px;height:19px;background:#fff;border-right:1px solid #a6a6a6;border-bottom:1px solid #a6a6a6;"></div>
<div class="t" style="left:87.55px;top:184px;height:19px;line-height:19px;font-family:'Liberation Mono', monospace;font-size:11px;transform:scaleX(0.767);transform-origin:0 50%;color:#0000ee;text-decoration:underline;">NO.201711080005</div>
<div style="left:169px;top:184px;width:69px;height:19px;background:#f1faff;border-right:1px solid #a6a6a6;border-bottom:1px solid #a6a6a6;"></div>
<div class="t" style="left:171px;top:184px;height:19px;line-height:19px;color:#000;font-size:10.5px;letter-spacing:-0.6px;">客户A</div>
<div style="left:238px;top:184px;width:66px;height:19px;background:#fff;border-right:1px solid #a6a6a6;border-bottom:1px solid #a6a6a6;"></div>
<div class="t" style="left:237px;top:184px;height:19px;line-height:19px;width:67px;text-align:center;color:#0c8a0c;font-size:10.5px;letter-spacing:0px;text-decoration:underline;">[1个附件]</div>
<div style="left:867px;top:184px;width:47px;height:19px;background:#fff;border-right:1px solid #a6a6a6;border-bottom:1px solid #a6a6a6;"></div>
<div style="left:885px;top:188px;width:10px;height:10px;background:#fff;border:1px solid #ececec;border-top-color:#b4b4b4;border-left-color:#b4b4b4;"></div>
<div style="left:83px;top:203px;width:86px;height:19px;background:#fff;border-right:1px solid #a6a6a6;border-bottom:1px solid #a6a6a6;"></div>
<div class="t" style="left:87.55px;top:203px;height:19px;line-height:19px;font-family:'Liberation Mono', monospace;font-size:11px;transform:scaleX(0.767);transform-origin:0 50%;color:#0000ee;text-decoration:underline;">NO.201711080004</div>
<div style="left:169px;top:203px;width:69px;height:19px;background:#fff;border-right:1px solid #a6a6a6;border-bottom:1px solid #a6a6a6;"></div>
<div class="t" style="left:171px;top:203px;height:19px;line-height:19px;color:#000;font-size:10.5px;letter-spacing:-0.6px;">客户A</div>
<div style="left:238px;top:203px;width:66px;height:19px;background:#fff;border-right:1px solid #a6a6a6;border-bottom:1px solid #a6a6a6;"></div>
<div class="t" style="left:237px;top:203px;height:19px;line-height:19px;width:67px;text-align:center;color:#0c8a0c;font-size:10.5px;letter-spacing:0px;text-decoration:underline;">[1个附件]</div>
<div style="left:867px;top:203px;width:47px;height:19px;background:#fff;border-right:1px solid #a6a6a6;border-bottom:1px solid #a6a6a6;"></div>
<div style="left:885px;top:207px;width:10px;height:10px;background:#fff;border:1px solid #ececec;border-top-color:#b4b4b4;border-left-color:#b4b4b4;"></div>
<div style="left:83px;top:222px;width:86px;height:18px;background:#fff;border-right:1px solid #a6a6a6;border-bottom:1px solid #a6a6a6;"></div>
<div class="t" style="left:87.55px;top:222px;height:18px;line-height:18px;font-family:'Liberation Mono', monospace;font-size:11px;transform:scaleX(0.767);transform-origin:0 50%;color:#0000ee;text-decoration:underline;">NO.201711080003</div>
<div style="left:169px;top:222px;width:69px;height:18px;background:#f1faff;border-right:1px solid #a6a6a6;border-bottom:1px solid #a6a6a6;"></div>
<div class="t" style="left:171px;top:222px;height:18px;line-height:18px;color:#000;font-size:10.5px;letter-spacing:-0.6px;">客户A</div>
<div style="left:238px;top:222px;width:66px;height:18px;background:#fff;border-right:1px solid #a6a6a6;border-bottom:1px solid #a6a6a6;"></div>
<div class="t" style="left:237px;top:222px;height:18px;line-height:18px;width:67px;text-align:center;color:#0c8a0c;font-size:10.5px;letter-spacing:0px;text-decoration:underline;">[1个附件]</div>
<div style="left:867px;top:222px;width:47px;height:18px;background:#fff;border-right:1px solid #a6a6a6;border-bottom:1px solid #a6a6a6;"></div>
<div style="left:885px;top:225px;width:10px;height:10px;background:#fff;border:1px solid #ececec;border-top-color:#b4b4b4;border-left-color:#b4b4b4;"></div>
<div style="left:83px;top:240px;width:86px;height:19px;background:#fff;border-right:1px solid #a6a6a6;border-bottom:1px solid #a6a6a6;"></div>
<div class="t" style="left:87.55px;top:240px;height:19px;line-height:19px;font-family:'Liberation Mono', monospace;font-size:11px;transform:scaleX(0.767);transform-origin:0 50%;color:#0000ee;text-decoration:underline;">NO.201711080002</div>
<div style="left:169px;top:240px;width:69px;height:19px;background:#fff;border-right:1px solid #a6a6a6;border-bottom:1px solid #a6a6a6;"></div>
<div class="t" style="left:171px;top:240px;height:19px;line-height:19px;color:#8c8c8c;font-size:10.5px;letter-spacing:-0.6px;">客户A</div>
<div style="left:238px;top:240px;width:66px;height:19px;background:#fff;border-right:1px solid #a6a6a6;border-bottom:1px solid #a6a6a6;"></div>
<div class="t" style="left:237px;top:240px;height:19px;line-height:19px;width:67px;text-align:center;color:#0c8a0c;font-size:10.5px;letter-spacing:0px;text-decoration:underline;">[1个附件]</div>
<div style="left:867px;top:240px;width:47px;height:19px;background:#fff;border-right:1px solid #a6a6a6;border-bottom:1px solid #a6a6a6;"></div>
<div style="left:885px;top:244px;width:10px;height:10px;background:#fff;border:1px solid #ececec;border-top-color:#b4b4b4;border-left-color:#b4b4b4;"></div>
<div style="left:83px;top:259px;width:86px;height:19px;background:#fff;border-right:1px solid #a6a6a6;border-bottom:1px solid #a6a6a6;"></div>
<div class="t" style="left:87.55px;top:259px;height:19px;line-height:19px;font-family:'Liberation Mono', monospace;font-size:11px;transform:scaleX(0.767);transform-origin:0 50%;color:#0000ee;text-decoration:underline;">NO.201711080001</div>
<div style="left:169px;top:259px;width:69px;height:19px;background:#f1faff;border-right:1px solid #a6a6a6;border-bottom:1px solid #a6a6a6;"></div>
<div class="t" style="left:171px;top:259px;height:19px;line-height:19px;color:#8c8c8c;font-size:10.5px;letter-spacing:-0.6px;">客户A</div>
<div style="left:238px;top:259px;width:66px;height:19px;background:#fff;border-right:1px solid #a6a6a6;border-bottom:1px solid #a6a6a6;"></div>
<div class="t" style="left:237px;top:259px;height:19px;line-height:19px;width:67px;text-align:center;color:#0c8a0c;font-size:10.5px;letter-spacing:0px;text-decoration:underline;">[1个附件]</div>
<div style="left:867px;top:259px;width:47px;height:19px;background:#fff;border-right:1px solid #a6a6a6;border-bottom:1px solid #a6a6a6;"></div>
<div style="left:885px;top:263px;width:10px;height:10px;background:#fff;border:1px solid #ececec;border-top-color:#b4b4b4;border-left-color:#b4b4b4;"></div>
<div style="left:83px;top:278px;width:86px;height:19px;background:#fff;border-right:1px solid #a6a6a6;border-bottom:1px solid #a6a6a6;"></div>
<div class="t" style="left:87.55px;top:278px;height:19px;line-height:19px;font-family:'Liberation Mono', monospace;font-size:11px;transform:scaleX(0.767);transform-origin:0 50%;color:#0000ee;text-decoration:underline;">NO.201711030001</div>
<div style="left:169px;top:278px;width:69px;height:19px;background:#fff;border-right:1px solid #a6a6a6;border-bottom:1px solid #a6a6a6;"></div>
<div class="t" style="left:171px;top:278px;height:19px;line-height:19px;color:#000;font-size:10.5px;letter-spacing:-0.6px;">客户A</div>
<div style="left:238px;top:278px;width:66px;height:19px;background:#fff;border-right:1px solid #a6a6a6;border-bottom:1px solid #a6a6a6;"></div>
<div class="t" style="left:237px;top:278px;height:19px;line-height:19px;width:67px;text-align:center;color:#0c8a0c;font-size:10.5px;letter-spacing:0px;text-decoration:underline;">[0个附件]</div>
<div style="left:867px;top:278px;width:47px;height:19px;background:#fff;border-right:1px solid #a6a6a6;border-bottom:1px solid #a6a6a6;"></div>
<div style="left:885px;top:282px;width:10px;height:10px;background:#fff;border:1px solid #ececec;border-top-color:#b4b4b4;border-left-color:#b4b4b4;"></div>
<div style="left:83px;top:297px;width:86px;height:19px;background:#fff;border-right:1px solid #a6a6a6;border-bottom:1px solid #a6a6a6;"></div>
<div class="t" style="left:87.55px;top:297px;height:19px;line-height:19px;font-family:'Liberation Mono', monospace;font-size:11px;transform:scaleX(0.767);transform-origin:0 50%;color:#0000ee;text-decoration:underline;">NO.201711020001</div>
<div style="left:169px;top:297px;width:69px;height:19px;background:#f1faff;border-right:1px solid #a6a6a6;border-bottom:1px solid #a6a6a6;"></div>
<div class="t" style="left:171px;top:297px;height:19px;line-height:19px;color:#000;font-size:10.5px;letter-spacing:-0.6px;">客户A</div>
<div style="left:238px;top:297px;width:66px;height:19px;background:#fff;border-right:1px solid #a6a6a6;border-bottom:1px solid #a6a6a6;"></div>
<div class="t" style="left:237px;top:297px;height:19px;line-height:19px;width:67px;text-align:center;color:#0c8a0c;font-size:10.5px;letter-spacing:0px;text-decoration:underline;">[0个附件]</div>
<div style="left:867px;top:297px;width:47px;height:19px;background:#fff;border-right:1px solid #a6a6a6;border-bottom:1px solid #a6a6a6;"></div>
<div style="left:885px;top:301px;width:10px;height:10px;background:#fff;border:1px solid #ececec;border-top-color:#b4b4b4;border-left-color:#b4b4b4;"></div>
<div style="left:83px;top:316px;width:86px;height:19px;background:#fff;border-right:1px solid #a6a6a6;border-bottom:1px solid #a6a6a6;"></div>
<div class="t" style="left:87.55px;top:316px;height:19px;line-height:19px;font-family:'Liberation Mono', monospace;font-size:11px;transform:scaleX(0.767);transform-origin:0 50%;color:#0000ee;text-decoration:underline;">NO.201711010001</div>
<div style="left:169px;top:316px;width:69px;height:19px;background:#fff;border-right:1px solid #a6a6a6;border-bottom:1px solid #a6a6a6;"></div>
<div class="t" style="left:171px;top:316px;height:19px;line-height:19px;color:#000;font-size:10.5px;letter-spacing:-0.6px;">客户A</div>
<div style="left:238px;top:316px;width:66px;height:19px;background:#fff;border-right:1px solid #a6a6a6;border-bottom:1px solid #a6a6a6;"></div>
<div class="t" style="left:237px;top:316px;height:19px;line-height:19px;width:67px;text-align:center;color:#0c8a0c;font-size:10.5px;letter-spacing:0px;text-decoration:underline;">[0个附件]</div>
<div style="left:867px;top:316px;width:47px;height:19px;background:#fff;border-right:1px solid #a6a6a6;border-bottom:1px solid #a6a6a6;"></div>
<div style="left:885px;top:320px;width:10px;height:10px;background:#fff;border:1px solid #ececec;border-top-color:#b4b4b4;border-left-color:#b4b4b4;"></div>
<div style="left:83px;top:335px;width:86px;height:129px;background:#fff;border-right:1px solid #a6a6a6;border-bottom:1px solid #a6a6a6;"></div>
<div class="t" style="left:87.55px;top:335px;height:129px;line-height:129px;font-family:'Liberation Mono', monospace;font-size:11px;transform:scaleX(0.767);transform-origin:0 50%;color:#0000ee;text-decoration:underline;">NO.201408070001</div>
<div style="left:169px;top:335px;width:69px;height:129px;background:#f1faff;border-right:1px solid #a6a6a6;border-bottom:1px solid #a6a6a6;"></div>
<div class="t" style="left:171px;top:335px;height:129px;line-height:129px;color:#000;font-size:10.5px;letter-spacing:-0.6px;">客户A</div>
<div style="left:238px;top:335px;width:66px;height:129px;background:#fff;border-right:1px solid #a6a6a6;border-bottom:1px solid #a6a6a6;"></div>
<div class="t" style="left:237px;top:335px;height:129px;line-height:129px;width:67px;text-align:center;color:#0c8a0c;font-size:10.5px;letter-spacing:0px;text-decoration:underline;">[0个附件]</div>
<div style="left:867px;top:335px;width:47px;height:129px;background:#fff;border-right:1px solid #a6a6a6;border-bottom:1px solid #a6a6a6;"></div>
<div style="left:885px;top:394px;width:10px;height:10px;background:#fff;border:1px solid #ececec;border-top-color:#b4b4b4;border-left-color:#b4b4b4;"></div>
<div style="left:0px;top:464px;width:1260px;height:18px;background:#f0f0f0;"></div>
<div style="left:21px;top:464px;width:1px;height:19px;background:#c8c8c8;"></div>
<div style="left:83px;top:466px;width:85px;height:16px;background:#f4f4f4;border-left:1px solid #c0c0c0;border-top:1px solid #c0c0c0;"></div>
<div class="t" style="left:91px;top:466px;height:16px;line-height:16px;font-size:10.5px;">共计:43条明细</div>
</div>
<div style="left:1215px;top:237px;width:14px;height:482px;background:repeating-conic-gradient(#e4e4e4 0 25%, #f8f8f8 0 50%) 0 0/2px 2px;"></div>
<div style="left:1215px;top:237px;width:14px;height:14px;background:#f0f0f0;border-bottom:1px solid #e0e0e0;"></div>
<svg style="left:1218px;top:241px" width="8" height="5" viewBox="0 0 8 5"><path d="M0.5 4.5h7L4 0.5z" fill="#000"/></svg>
<div style="left:1215px;top:251px;width:14px;height:233px;background:#f0f0f0;border-right:1px solid #d8d8d8;border-bottom:1px solid #c8c8c8;"></div>
<div style="left:1215px;top:706px;width:14px;height:13px;background:#f0f0f0;border-left:1px solid #e8e8e8;"></div>
<svg style="left:1218px;top:711px" width="8" height="5" viewBox="0 0 8 5"><path d="M0.5 0.5h7L4 4.5z" fill="#000"/></svg>
<div style="left:31px;top:719px;width:1199px;height:1px;background:#c4c4c4;"></div>
<div style="left:31px;top:720px;width:1199px;height:15px;background:repeating-conic-gradient(#e2e2e2 0 25%, #fafafa 0 50%) 0 0/2px 2px;"></div>
<div style="left:31px;top:720px;width:14px;height:14px;background:#f0f0f0;border-left:1px solid #fff;border-top:1px solid #fff;"></div>
<svg style="left:36px;top:723px" width="5" height="8" viewBox="0 0 5 8"><path d="M4.5 0.5v7L0.5 4z" fill="#000"/></svg>
<div style="left:45px;top:720px;width:2px;height:14px;background:#d4d4d4;"></div>
<div style="left:47px;top:720px;width:906px;height:14px;background:#f0f0f0;border-right:1px solid #c8c8c8;"></div>
<div style="left:1200px;top:720px;width:15px;height:14px;background:#f0f0f0;border-left:1px solid #fff;border-right:1px solid #c8c8c8;"></div>
<svg style="left:1206px;top:723px" width="5" height="8" viewBox="0 0 5 8"><path d="M0.5 0.5v7L4.5 4z" fill="#000"/></svg>
<div style="left:1215px;top:719px;width:15px;height:16px;background:#f0f0f0;"></div>
<div style="left:31px;top:734px;width:1184px;height:2px;background:#c8c8c8;"></div>
<div style="left:2px;top:736px;width:1228px;height:25px;background:#2a2f38;"></div>
<div style="left:2px;top:759px;width:1228px;height:2px;background:#34321f;"></div>
<div style="left:1230px;top:736px;width:2px;height:25px;background:#3a3f49;"></div>
<svg style="left:11px;top:742px" width="13" height="11" viewBox="0 0 13 11"><path d="M1 3.5h10M8 1l3 2.5L8 6M12 7.5H2M5 5L2 7.5 5 10" stroke="#ddd" stroke-width="1.3" fill="none"/></svg>
<svg style="left:36px;top:741px" width="14" height="14" viewBox="0 0 14 14"><rect x="0" y="0.5" width="14" height="3.6" fill="#f0c000"/><rect x="0" y="5.2" width="14" height="3.6" fill="#f0c000"/><rect x="0" y="9.9" width="14" height="3.6" fill="#f0c000"/><path d="M5 2.3h7M5 7h7M5 11.7h7" stroke="#6a5a00" stroke-width="0.7"/></svg>
<div class="t" style="left:54px;top:740px;height:16px;line-height:16px;color:#e8e8e8;font-family:'Liberation Mono', monospace;font-size:10.5px;letter-spacing:-0.5px;">服务器:127.0.0.1:7798</div>
<svg style="left:205px;top:741px" width="16" height="14" viewBox="0 0 16 14"><ellipse cx="8" cy="3" rx="7" ry="2.5" fill="#f0c000"/><rect x="1" y="3" width="14" height="8" fill="#f0c000"/><ellipse cx="8" cy="11" rx="7" ry="2.5" fill="#f0c000"/><path d="M1 6 Q8 9 15 6M1 9 Q8 12 15 9" stroke="#806000" stroke-width="0.7" fill="none"/></svg>
<div class="t" style="left:224px;top:740px;height:16px;line-height:16px;color:#e8e8e8;font-size:10.5px;">账套: 演示账套</div>
<svg style="left:376px;top:741px" width="15" height="14" viewBox="0 0 15 14"><path d="M7.5 0v8M4 5l3.5 3.5L11 5" stroke="#f0c000" stroke-width="2" fill="none"/><path d="M1 8v5h13V8" stroke="#f0c000" stroke-width="2" fill="none"/></svg>
<div class="t" style="left:395px;top:740px;height:16px;line-height:16px;color:#e8e8e8;font-size:10.5px;">导入证书</div>
<svg style="left:447px;top:742px" width="15" height="12" viewBox="0 0 15 12"><path d="M1 6 L5.5 10.5 L14 1.5" stroke="#f0c000" stroke-width="2.6" fill="none"/></svg>
<div class="t" style="left:466px;top:740px;height:16px;line-height:16px;color:#a8e040;font-size:10.5px;">正版授权|终身使用</div>
<svg style="left:575px;top:741px" width="16" height="14" viewBox="0 0 16 14"><circle cx="8" cy="4.5" r="4" fill="#f0c000"/><path d="M1 14 Q2 8 8 9 Q14 8 15 14Z" fill="#f0c000"/></svg>
<div class="t" style="left:594px;top:740px;height:16px;line-height:16px;color:#e8e8e8;font-size:10.5px;">在线客服</div>
<svg style="left:647px;top:740px" width="13" height="15" viewBox="0 0 13 15"><path d="M3.5 7V4.5a3 3 0 0 1 6 0V7" stroke="#f0c000" stroke-width="1.8" fill="none"/><rect x="1" y="7" width="11" height="8" rx="1" fill="#f0c000"/><rect x="6" y="9.5" width="1.2" height="3" fill="#2a2f38"/></svg>
<div class="t" style="left:666px;top:740px;height:16px;line-height:16px;color:#e8e8e8;font-size:10.5px;">锁屏</div>
<svg style="left:1080px;top:740px" width="16" height="16" viewBox="0 0 16 16"><circle cx="8" cy="8" r="7" stroke="#f0c000" stroke-width="1.4" fill="none"/><circle cx="8" cy="6.2" r="2.6" fill="#f0c000"/><path d="M3.8 12.5 Q4.5 8.8 8 9 Q11.5 8.8 12.2 12.5Z" fill="#f0c000"/></svg>
<div class="t" style="left:1099px;top:740px;height:16px;line-height:16px;color:#e8e8e8;font-size:10.5px;">超级用户</div>
<svg style="left:1158px;top:740px" width="14" height="15" viewBox="0 0 14 15"><g transform="rotate(-25 7 7.5)"><path d="M3 4.5h6V2L13 5.5 9 9V6.5H3z" fill="#f0c000"/><path d="M11 10.5H5V13L1 9.5 5 6V8.5h6z" fill="#f0c000"/></g></svg>
<div class="t" style="left:1176px;top:740px;height:16px;line-height:16px;color:#e8e8e8;font-size:10.5px;">切换用户</div>
</body></html>
